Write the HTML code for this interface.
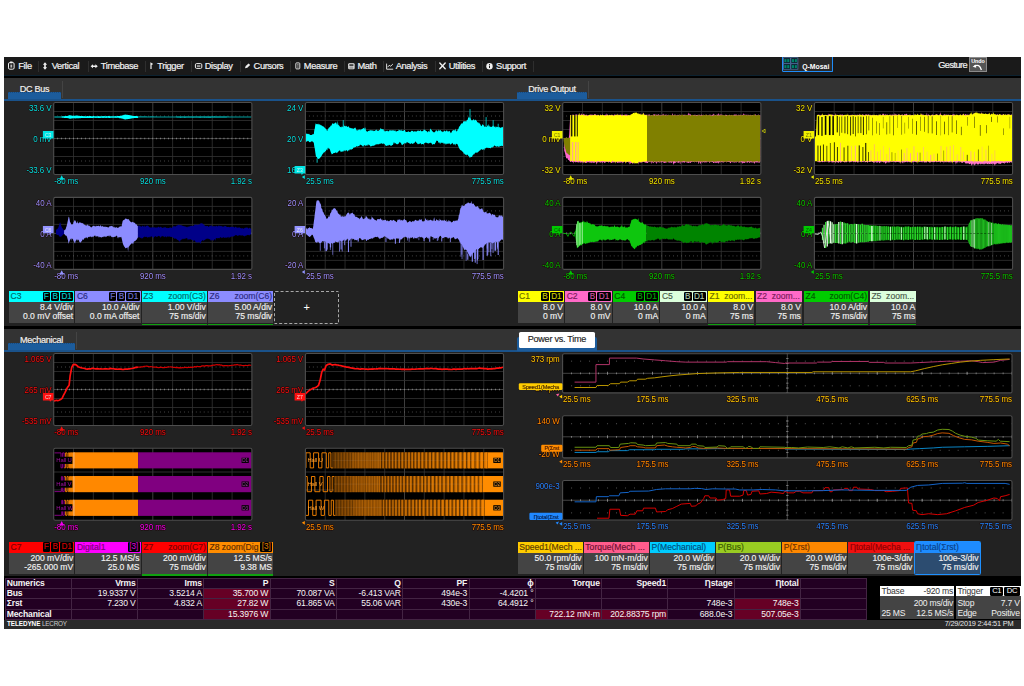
<!DOCTYPE html>
<html lang="en"><head><meta charset="utf-8"><title>Motor Drive Analyzer</title>
<style>
html,body{margin:0;padding:0;background:#fff;}
body{width:1024px;height:686px;overflow:hidden;position:relative;font-family:"Liberation Sans",sans-serif;}
#scr{position:absolute;left:4px;top:57px;width:1017px;height:571.5px;background:#222;overflow:hidden;}
#scr *{box-sizing:border-box;}
.abs{position:absolute;}
#menu{position:absolute;left:0;top:0;width:1017px;height:18px;background:#1a1a1a;}
#mline{position:absolute;left:0;top:17.6px;width:1017px;height:3.2px;background:#000;border-top:0.7px solid #0c2230;}
.mi{-webkit-text-stroke:0.2px;position:absolute;top:3.0px;height:12px;line-height:12px;font-size:9.3px;color:#f2f2f2;letter-spacing:-0.4px;white-space:nowrap;}
.ms{position:absolute;top:4px;width:1px;height:10.6px;background:#2e2e2e;}
.tabs{position:absolute;height:21.4px;background:#333;}
.tline{position:absolute;height:1.6px;background:#1a528a;}
.tab{position:absolute;height:21px;color:#f0f0f0;font-size:9.1px;letter-spacing:-0.28px;text-align:center;line-height:22.4px;white-space:nowrap;-webkit-text-stroke:0.2px;z-index:1;}
.tab .ul{position:absolute;left:0;right:0;bottom:0;height:6.9px;background:#1c5c9c;border-top:1.6px dotted #164a80;z-index:-1;}
.tsep{position:absolute;width:1px;background:#444;}
.hbar{position:absolute;left:0;width:1017px;height:3px;background:#000;}
.d{position:absolute;height:33px;font-size:8.6px;letter-spacing:-0.02px;white-space:nowrap;-webkit-text-stroke:0.15px;}
.d .h{position:absolute;left:0;top:0;right:0;height:10.8px;line-height:10.6px;padding-left:1.6px;overflow:hidden;}
.d .b{position:absolute;left:0;top:10.8px;right:0;height:21.7px;background:#444;color:#f0f0f0;text-align:right;padding-right:1.2px;line-height:9.5px;padding-top:1.0px;}
.d .z{position:absolute;left:0;right:0;top:32.5px;height:1.7px;background:#10a010;}
.d .r{position:absolute;right:1.2px;top:0;}
.bd{display:inline-block;background:#000;height:9.6px;line-height:9.6px;margin-top:0.6px;padding:0 1.3px;border-radius:1.2px;margin-left:1px;font-size:8.2px;vertical-align:top;}
table{border-collapse:collapse;position:absolute;left:0.5px;top:520.6px;table-layout:fixed;font-size:8.6px;letter-spacing:-0.15px;color:#f4f4f4;}
td{height:10.4px;width:66.3px;padding:0 1.4px 0 1.2px;border:0.9px solid #432443;background:#220022;text-align:right;line-height:9.4px;white-space:nowrap;overflow:hidden;}
td.l{text-align:left;font-weight:bold;}
tr.hd td{font-weight:bold;}
td.hl{background:#660025;}
.tb{position:absolute;font-size:8.6px;letter-spacing:-0.2px;color:#f0f0f0;white-space:nowrap;}
</style></head>
<body>
<div id="scr">
<div id="menu"></div><div id="mline"></div>
<div class="mi" style="left:14.3px">File</div><div class="ms" style="left:34px"></div>
<div class="mi" style="left:47.8px">Vertical</div><div class="ms" style="left:83.5px"></div>
<div class="mi" style="left:96.8px">Timebase</div><div class="ms" style="left:140.5px"></div>
<div class="mi" style="left:153.3px">Trigger</div><div class="ms" style="left:187px"></div>
<div class="mi" style="left:200.8px">Display</div><div class="ms" style="left:235.6px"></div>
<div class="mi" style="left:249.6px">Cursors</div><div class="ms" style="left:286.4px"></div>
<div class="mi" style="left:299.8px">Measure</div><div class="ms" style="left:340px"></div>
<div class="mi" style="left:353.5px">Math</div><div class="ms" style="left:378.5px"></div>
<div class="mi" style="left:391.8px">Analysis</div><div class="ms" style="left:431.2px"></div>
<div class="mi" style="left:444.7px">Utilities</div><div class="ms" style="left:478px"></div>
<div class="mi" style="left:492.1px">Support</div><div class="ms" style="left:528.9px"></div>
<div class="mi" style="left:934.2px;top:2.4px;letter-spacing:-0.6px">Gesture</div>
<svg class="abs" style="left:0;top:0" width="1017" height="19" viewBox="0 0 1017 19"><rect x="4.5" y="5.6" width="5.6" height="6.6" rx="1.3" fill="none" stroke="#f0f0f0" stroke-width="1"/><rect x="6" y="4.4" width="2.6" height="1.8" rx="0.4" fill="#f0f0f0"/><rect x="6.4" y="7.6" width="1.8" height="3" fill="#f0f0f0" opacity="0.75"/><path d="M41,5.2 l2.1,2.5 h-1.3 v2.6 h1.3 l-2.1,2.5 l-2.1,-2.5 h1.3 v-2.6 h-1.3z" fill="#f0f0f0"/><path d="M86.6,9.2 l2.4,-2 v1.3 h2.4 v-1.3 l2.4,2 l-2.4,2 v-1.3 h-2.4 v1.3z" fill="#f0f0f0"/><path d="M146.4,11.9 v-6.6 l2.8,1.7 l-1.6,1.1 v3.8z" fill="#f0f0f0"/><rect x="191.4" y="6.6" width="6.4" height="4.8" rx="1.2" fill="none" stroke="#f0f0f0" stroke-width="1"/><rect x="192.9" y="8.5" width="3.4" height="1.1" fill="#f0f0f0"/><path d="M241,11.2 l0.7,-2.1 l2.9,-2.7 l1.6,1.6 l-2.9,2.7z" fill="#f0f0f0"/><rect x="291.8" y="5.9" width="4" height="6" rx="0.8" fill="none" stroke="#f0f0f0" stroke-width="0.9"/><path d="M293.1,7.6h1.6M293.1,8.9h1.6M293.1,10.2h1.6" stroke="#f0f0f0" stroke-width="0.55"/><rect x="344.2" y="6.3" width="6.4" height="6" rx="1.2" fill="#f0f0f0"/><rect x="345.3" y="7.3" width="4.2" height="1.5" fill="#1a1a1a"/><path d="M345.3,10h4.2M345.3,11.2h4.2" stroke="#1a1a1a" stroke-width="0.5"/><path d="M382.6,6.6 v5.6 h6.6" fill="none" stroke="#f0f0f0" stroke-width="0.9"/><path d="M383.6,10.2 l1.6,-1.9 l1.5,0.9 l2.2,-2.2" fill="none" stroke="#f0f0f0" stroke-width="0.9"/><path d="M435.8,6 l5.4,5.8 M441.2,6 l-5.4,5.8" stroke="#f0f0f0" stroke-width="1.4" stroke-linecap="round"/><circle cx="485.5" cy="9.2" r="3.2" fill="#f0f0f0"/><rect x="485" y="8.6" width="1" height="2.4" fill="#1a1a1a"/><rect x="485" y="7.1" width="1" height="0.9" fill="#1a1a1a"/></svg>
<div class="abs" style="left:777.8px;top:0;width:51.4px;height:14.9px;background:#2a2a2a;border:1.6px solid #1e8cf8;border-top:none;border-radius:0 0 1.5px 1.5px"></div>
<svg class="abs" style="left:0;top:0" width="1017" height="19" viewBox="0 0 1017 19"><rect x="779.4" y="0.8" width="7" height="5.4" fill="#061820" stroke="#5478b0" stroke-width="0.7"/><rect x="780.3" y="2.1" width="2.2" height="3" fill="#008068"/><rect x="783.2" y="2.1" width="2.2" height="3" fill="#008068"/><rect x="786.9" y="0.8" width="7" height="5.4" fill="#061820" stroke="#5478b0" stroke-width="0.7"/><rect x="787.8" y="2.1" width="2.2" height="3" fill="#008068"/><rect x="790.7" y="2.1" width="2.2" height="3" fill="#008068"/><rect x="779.4" y="6.8" width="7" height="5.4" fill="#061820" stroke="#5478b0" stroke-width="0.7"/><rect x="780.3" y="8.1" width="2.2" height="3" fill="#008068"/><rect x="783.2" y="8.1" width="2.2" height="3" fill="#008068"/><rect x="786.9" y="6.8" width="7" height="5.4" fill="#061820" stroke="#5478b0" stroke-width="0.7"/><rect x="787.8" y="8.1" width="2.2" height="3" fill="#008068"/><rect x="790.7" y="8.1" width="2.2" height="3" fill="#008068"/></svg>
<div class="abs" style="left:798.2px;top:6.1px;font-size:6.9px;font-weight:bold;color:#fff;letter-spacing:0px;line-height:8px">Q-Mosai</div>
<div class="abs" style="left:965.2px;top:0.2px;width:17.6px;height:14.8px;background:#555;border:0.9px solid #8a8a8a"></div>
<div class="abs" style="left:965.2px;top:0.6px;width:17.6px;text-align:center;font-size:5.4px;font-weight:bold;color:#fff;line-height:6px;letter-spacing:-0.1px">Undo</div>
<svg class="abs" style="left:965px;top:6px" width="18" height="9" viewBox="0 0 18 9"><path d="M5.2,3.2 Q10.5,0.2 12.4,7" fill="none" stroke="#fff" stroke-width="1.3"/><path d="M3.6,3.8 l3.2,-2.2 l0.4,3.2z" fill="#fff"/></svg>
<div class="tabs" style="left:0;top:20.8px;width:1017px"></div>
<div class="tline" style="left:0;top:42px;width:1017px"></div>
<div class="tab" style="left:4px;top:20.8px;width:53px">DC Bus<div class="ul"></div></div>
<div class="tsep" style="left:57.6px;top:23.8px;height:17px"></div>
<div class="tab" style="left:512.8px;top:20.8px;width:70.4px">Drive Output<div class="ul"></div></div>
<div class="tsep" style="left:583.8px;top:23.8px;height:17px"></div>
<div class="hbar" style="top:269px"></div>
<div class="tabs" style="left:0;top:271.8px;width:1017px"></div>
<div class="tline" style="left:0;top:293px;width:1017px"></div>
<div class="tab" style="left:4px;top:271.8px;width:67px">Mechanical<div class="ul"></div></div>
<div class="tsep" style="left:71.6px;top:274.8px;height:17px"></div>
<div class="abs" style="left:513px;top:279.8px;width:79.8px;height:14.4px;background:#1c5c9c;border-radius:2px 2px 0 0"></div>
<div class="abs" style="left:514.8px;top:275.4px;width:76.2px;height:15.8px;background:#fff;border-radius:1.6px;color:#222;font-size:9.1px;letter-spacing:-0.28px;text-align:center;line-height:15.8px;white-space:nowrap;-webkit-text-stroke:0.15px">Power vs. Time</div>
<svg class="abs" style="left:-4px;top:-57px;filter:blur(0.3px)" width="1024" height="686" viewBox="0 0 1024 686" font-family='"Liberation Sans", sans-serif' letter-spacing="-0.1">
<rect x="53.7" y="102.5" width="198.2" height="72" fill="#000"/>
<line x1="73.52" y1="102.5" x2="73.52" y2="174.5" stroke="#323232" stroke-width="0.8"/>
<line x1="93.34" y1="102.5" x2="93.34" y2="174.5" stroke="#323232" stroke-width="0.8"/>
<line x1="113.16" y1="102.5" x2="113.16" y2="174.5" stroke="#323232" stroke-width="0.8"/>
<line x1="132.98" y1="102.5" x2="132.98" y2="174.5" stroke="#323232" stroke-width="0.8"/>
<line x1="152.8" y1="102.5" x2="152.8" y2="174.5" stroke="#4c4c4c" stroke-width="0.8"/>
<line x1="172.62" y1="102.5" x2="172.62" y2="174.5" stroke="#323232" stroke-width="0.8"/>
<line x1="192.44" y1="102.5" x2="192.44" y2="174.5" stroke="#323232" stroke-width="0.8"/>
<line x1="212.26" y1="102.5" x2="212.26" y2="174.5" stroke="#323232" stroke-width="0.8"/>
<line x1="232.08" y1="102.5" x2="232.08" y2="174.5" stroke="#323232" stroke-width="0.8"/>
<line x1="53.7" y1="111.5" x2="251.9" y2="111.5" stroke="#323232" stroke-width="0.8"/>
<line x1="53.7" y1="120.5" x2="251.9" y2="120.5" stroke="#323232" stroke-width="0.8"/>
<line x1="53.7" y1="129.5" x2="251.9" y2="129.5" stroke="#323232" stroke-width="0.8"/>
<line x1="53.7" y1="138.5" x2="251.9" y2="138.5" stroke="#4c4c4c" stroke-width="0.8"/>
<line x1="53.7" y1="147.5" x2="251.9" y2="147.5" stroke="#323232" stroke-width="0.8"/>
<line x1="53.7" y1="156.5" x2="251.9" y2="156.5" stroke="#323232" stroke-width="0.8"/>
<line x1="53.7" y1="165.5" x2="251.9" y2="165.5" stroke="#323232" stroke-width="0.8"/>
<line x1="53.7" y1="138.5" x2="251.9" y2="138.5" stroke="#8a8a8a" stroke-width="1.6" stroke-dasharray="0.9 3.06" stroke-dashoffset="0.45"/>
<line x1="53.7" y1="116" x2="251.9" y2="116" stroke="#7a7a7a" stroke-width="0.7" stroke-dasharray="0.8 3.16" stroke-dashoffset="0.4"/>
<line x1="53.7" y1="161" x2="251.9" y2="161" stroke="#7a7a7a" stroke-width="0.7" stroke-dasharray="0.8 3.16" stroke-dashoffset="0.4"/>
<g clip-path="url(#c00)">
<clipPath id="c00"><rect x="53.7" y="102.5" width="198.2" height="72"/></clipPath>
<path d="M54.2,116.36 54.8,116.32 55.4,116.29 56,116.29 56.6,116.31 57.2,116.3 57.8,116.31 58.4,116.25 59,116.27 59.6,116.24 60.2,116.23 60.8,116.22 61.4,116.21 62,116.24 62.6,116.2 63.2,116.16 63.8,116.16 64.4,116.15 65,116.1 65.6,116.07 66.2,116.11 66.8,116.05 67.4,115.92 68,115.75 68.6,115.53 69.2,115.35 69.8,115.21 70.4,115.22 71,115.5 71.6,115.52 72.2,115.68 72.8,115.75 73.4,115.75 74,115.75 74.6,115.69 75.2,115.65 75.8,115.43 76.4,115.55 77,115.57 77.6,115.64 78.2,115.65 78.8,115.69 79.4,115.82 80,115.9 80.6,115.92 81.2,115.9 81.8,116.02 82.4,116.03 83,116.09 83.6,116.14 84.2,116.11 84.8,116.16 85.4,116.14 86,116.19 86.6,116.18 87.2,116.12 87.8,116.11 88.4,116.18 89,116.12 89.6,116.1 90.2,116.11 90.8,116.1 91.4,116.19 92,116.13 92.6,116.13 93.2,116.11 93.8,116.12 94.4,116.13 95,116.16 95.6,116.17 96.2,116.17 96.8,116.18 97.4,116.13 98,116.16 98.6,116.12 99.2,116.14 99.8,116.14 100.4,116.13 101,116.15 101.6,116.14 102.2,116.11 102.8,116.15 103.4,116.12 104,116.19 104.6,116.1 105.2,116.15 105.8,116.17 106.4,116.11 107,116.18 107.6,116.14 108.2,116.12 108.8,116.11 109.4,116.11 110,116.13 110.6,116.13 111.2,116.18 111.8,116.19 112.4,116.14 113,116.16 113.6,116.13 114.2,116.17 114.8,116.19 115.4,116.12 116,116.14 116.6,116.16 117.2,116.12 117.8,116.11 118.4,116.11 119,115.97 119.6,115.94 120.2,115.79 120.8,115.81 121.4,115.64 122,115.51 122.6,115.31 123.2,115.14 123.8,114.85 124.4,114.8 125,114.65 125.6,114.57 126.2,114.8 126.8,114.72 127.4,114.85 128,115.05 128.6,115.11 129.2,115.11 129.8,115.22 130.4,115.32 131,115.59 131.6,115.6 132.2,115.75 132.8,115.94 133.4,116.01 134,116.02 134.6,115.98 135.2,116.02 135.8,116.09 136.4,116.08 137,116.05 137.6,116.16 138.2,116.17 138.3,116.19 L138.3,117.89 138.2,117.87 137.6,117.89 137,117.95 136.4,117.93 135.8,117.98 135.2,117.97 134.6,118.01 134,118.12 133.4,118.14 132.8,118.14 132.2,118.3 131.6,118.41 131,118.44 130.4,118.63 129.8,118.7 129.2,118.89 128.6,118.9 128,119.11 127.4,119.18 126.8,119.22 126.2,119.27 125.6,119.44 125,119.44 124.4,119.19 123.8,119.19 123.2,118.84 122.6,118.74 122,118.53 121.4,118.38 120.8,118.37 120.2,118.28 119.6,118.14 119,117.98 118.4,117.87 117.8,117.86 117.2,117.81 116.6,117.81 116,117.88 115.4,117.83 114.8,117.87 114.2,117.83 113.6,117.86 113,117.82 112.4,117.84 111.8,117.84 111.2,117.86 110.6,117.86 110,117.88 109.4,117.89 108.8,117.88 108.2,117.82 107.6,117.85 107,117.84 106.4,117.89 105.8,117.82 105.2,117.9 104.6,117.84 104,117.82 103.4,117.88 102.8,117.84 102.2,117.88 101.6,117.85 101,117.82 100.4,117.89 99.8,117.89 99.2,117.89 98.6,117.89 98,117.89 97.4,117.85 96.8,117.91 96.2,117.86 95.6,117.92 95,117.85 94.4,117.85 93.8,117.91 93.2,117.87 92.6,117.91 92,117.91 91.4,117.89 90.8,117.89 90.2,117.93 89.6,117.92 89,117.88 88.4,117.92 87.8,117.93 87.2,117.89 86.6,117.89 86,117.9 85.4,117.98 84.8,117.97 84.2,117.97 83.6,117.99 83,118.04 82.4,118.01 81.8,118 81.2,118.11 80.6,118.16 80,118.11 79.4,118.16 78.8,118.18 78.2,118.33 77.6,118.25 77,118.3 76.4,118.35 75.8,118.36 75.2,118.42 74.6,118.28 74,118.3 73.4,118.32 72.8,118.31 72.2,118.39 71.6,118.52 71,118.61 70.4,118.74 69.8,118.8 69.2,118.52 68.6,118.37 68,118.25 67.4,118.03 66.8,117.94 66.2,117.93 65.6,117.9 65,117.92 64.4,117.88 63.8,117.85 63.2,117.83 62.6,117.81 62,117.77 61.4,117.72 60.8,117.71 60.2,117.77 59.6,117.7 59,117.69 58.4,117.7 57.8,117.68 57.2,117.7 56.6,117.7 56,117.7 55.4,117.69 54.8,117.68 54.2,117.64Z" fill="#00ffff"/>
<rect x="53.7" y="115.8" width="8" height="2.4" fill="#000" opacity="0.45"/>
<path d="M138.3,116.3 139,116.33 139.7,116.36 140.4,116.33 141.1,116.34 141.8,116.36 142.5,116.36 143.2,116.34 143.9,116.34 144.6,116.34 145.3,116.33 146,116.37 146.7,116.35 147.4,116.38 148.1,116.38 148.8,116.34 149.5,116.38 150.2,116.34 150.9,116.35 151.6,116.34 152.3,116.35 153,116.35 153.7,116.37 154.4,116.41 155.1,116.35 155.8,116.39 156.5,116.36 157.2,116.38 157.9,116.39 158.6,116.38 159.3,116.39 160,116.4 160.7,116.41 161.4,116.38 162.1,116.41 162.8,116.39 163.5,116.41 164.2,116.42 164.9,116.37 165.6,116.43 166.3,116.41 167,116.43 167.7,116.39 168.4,116.39 169.1,116.4 169.8,116.41 170.5,116.4 171.2,116.4 171.9,116.4 172.6,116.42 173.3,116.42 174,116.43 174.7,116.45 175.4,116.41 176.1,116.36 176.8,116.35 177.5,116.35 178.2,116.28 178.9,116.26 179.6,116.22 180.3,116.21 181,116.23 181.7,116.21 182.4,116.25 183.1,116.21 183.8,116.23 184.5,116.21 185.2,116.23 185.9,116.23 186.6,116.22 187.3,116.21 188,116.23 188.7,116.23 189.4,116.22 190.1,116.23 190.8,116.2 191.5,116.19 192.2,116.24 192.9,116.21 193.6,116.22 194.3,116.19 195,116.16 195.7,116.16 196.4,116.23 197.1,116.23 197.8,116.21 198.5,116.21 199.2,116.16 199.9,116.2 200.6,116.19 201.3,116.17 202,116.14 202.7,116.21 203.4,116.13 204.1,116.22 204.8,116.19 205.5,116.13 206.2,116.13 206.9,116.19 207.6,116.13 208.3,116.18 209,116.16 209.7,116.18 210.4,116.19 211.1,116.13 211.8,116.14 212.5,116.12 213.2,116.16 213.9,116.19 214.6,116.11 215.3,116.14 216,116.17 216.7,116.17 217.4,116.22 218.1,116.2 218.8,116.18 219.5,116.24 220.2,116.26 220.9,116.26 221.6,116.3 222.3,116.28 223,116.32 223.7,116.33 224.4,116.35 225.1,116.32 225.8,116.34 226.5,116.34 227.2,116.35 227.9,116.4 228.6,116.37 229.3,116.42 230,116.46 230.7,116.42 231.4,116.41 232.1,116.43 232.8,116.44 233.5,116.42 234.2,116.44 234.9,116.46 235.6,116.42 236.3,116.45 237,116.44 237.7,116.45 238.4,116.44 239.1,116.42 239.8,116.41 240.5,116.44 241.2,116.41 241.9,116.41 242.6,116.45 243.3,116.45 244,116.41 244.7,116.41 245.4,116.41 246.1,116.41 246.8,116.41 247.5,116.44 248.2,116.42 248.9,116.46 249.6,116.45 250.3,116.46 251,116.41 251.4,116.41 L251.4,117.57 251,117.6 250.3,117.6 249.6,117.6 248.9,117.54 248.2,117.59 247.5,117.59 246.8,117.54 246.1,117.57 245.4,117.58 244.7,117.55 244,117.6 243.3,117.57 242.6,117.56 241.9,117.57 241.2,117.54 240.5,117.59 239.8,117.59 239.1,117.59 238.4,117.55 237.7,117.54 237,117.54 236.3,117.6 235.6,117.58 234.9,117.54 234.2,117.58 233.5,117.57 232.8,117.58 232.1,117.54 231.4,117.6 230.7,117.6 230,117.55 229.3,117.6 228.6,117.57 227.9,117.62 227.2,117.61 226.5,117.67 225.8,117.65 225.1,117.68 224.4,117.67 223.7,117.71 223,117.71 222.3,117.74 221.6,117.75 220.9,117.72 220.2,117.72 219.5,117.79 218.8,117.76 218.1,117.79 217.4,117.83 216.7,117.81 216,117.85 215.3,117.84 214.6,117.81 213.9,117.83 213.2,117.86 212.5,117.83 211.8,117.85 211.1,117.82 210.4,117.89 209.7,117.9 209,117.82 208.3,117.89 207.6,117.83 206.9,117.88 206.2,117.82 205.5,117.84 204.8,117.88 204.1,117.86 203.4,117.87 202.7,117.85 202,117.85 201.3,117.86 200.6,117.88 199.9,117.87 199.2,117.9 198.5,117.86 197.8,117.85 197.1,117.85 196.4,117.85 195.7,117.87 195,117.84 194.3,117.85 193.6,117.83 192.9,117.88 192.2,117.87 191.5,117.86 190.8,117.86 190.1,117.85 189.4,117.86 188.7,117.82 188,117.85 187.3,117.86 186.6,117.85 185.9,117.83 185.2,117.89 184.5,117.89 183.8,117.82 183.1,117.84 182.4,117.82 181.7,117.82 181,117.89 180.3,117.89 179.6,117.8 178.9,117.77 178.2,117.73 177.5,117.72 176.8,117.67 176.1,117.62 175.4,117.61 174.7,117.58 174,117.58 173.3,117.56 172.6,117.57 171.9,117.55 171.2,117.55 170.5,117.56 169.8,117.56 169.1,117.58 168.4,117.54 167.7,117.56 167,117.57 166.3,117.56 165.6,117.57 164.9,117.57 164.2,117.58 163.5,117.54 162.8,117.57 162.1,117.56 161.4,117.56 160.7,117.56 160,117.55 159.3,117.55 158.6,117.55 157.9,117.57 157.2,117.55 156.5,117.59 155.8,117.57 155.1,117.58 154.4,117.55 153.7,117.59 153,117.59 152.3,117.58 151.6,117.57 150.9,117.57 150.2,117.55 149.5,117.56 148.8,117.57 148.1,117.57 147.4,117.6 146.7,117.57 146,117.55 145.3,117.56 144.6,117.59 143.9,117.55 143.2,117.55 142.5,117.54 141.8,117.59 141.1,117.59 140.4,117.55 139.7,117.56 139,117.58 138.3,117.58Z" fill="#00a0a0"/>
</g>
<rect x="53.7" y="102.5" width="198.2" height="72" rx="1.5" fill="none" stroke="#4e4e4e" stroke-width="1.1"/>
<text transform="translate(51.4,110.8) scale(0.905,1)" fill="#00e0e0" font-size="8.8" text-anchor="end" font-weight="normal"  stroke="#1c0606" stroke-width="1.1" paint-order="stroke" stroke-linejoin="round">33.6 V</text>
<text transform="translate(51.4,142.2) scale(0.905,1)" fill="#00e0e0" font-size="8.8" text-anchor="end" font-weight="normal"  stroke="#1c0606" stroke-width="1.1" paint-order="stroke" stroke-linejoin="round">0 mV</text>
<text transform="translate(51.4,172.9) scale(0.905,1)" fill="#00e0e0" font-size="8.8" text-anchor="end" font-weight="normal"  stroke="#1c0606" stroke-width="1.1" paint-order="stroke" stroke-linejoin="round">-33.6 V</text>
<text transform="translate(54.3,184.1) scale(0.905,1)" fill="#00e0e0" font-size="8.8" text-anchor="start" font-weight="normal"  stroke="#1c0606" stroke-width="1.1" paint-order="stroke" stroke-linejoin="round">-80 ms</text>
<text transform="translate(152.8,184.1) scale(0.905,1)" fill="#00e0e0" font-size="8.8" text-anchor="middle" font-weight="normal"  stroke="#1c0606" stroke-width="1.1" paint-order="stroke" stroke-linejoin="round">920 ms</text>
<text transform="translate(251.9,184.1) scale(0.905,1)" fill="#00e0e0" font-size="8.8" text-anchor="end" font-weight="normal"  stroke="#1c0606" stroke-width="1.1" paint-order="stroke" stroke-linejoin="round">1.92 s</text>
<path d="M61.7,175.3 l2.2,4.4 h-4.4z" fill="#00e0e0"/>
<path d="M42.9,131 h10.6 v7.4 l-2.2,0 l-1.2,1.4 l-0.6,-1.4 h-6.6z" fill="#00e5e5"/>
<text x="48.1" y="136.8" fill="#f4f4f4" font-size="5.2" text-anchor="middle" font-weight="normal" opacity="0.85">C3</text>
<rect x="305.4" y="102.5" width="198.2" height="72" fill="#000"/>
<line x1="325.22" y1="102.5" x2="325.22" y2="174.5" stroke="#323232" stroke-width="0.8"/>
<line x1="345.04" y1="102.5" x2="345.04" y2="174.5" stroke="#323232" stroke-width="0.8"/>
<line x1="364.86" y1="102.5" x2="364.86" y2="174.5" stroke="#323232" stroke-width="0.8"/>
<line x1="384.68" y1="102.5" x2="384.68" y2="174.5" stroke="#323232" stroke-width="0.8"/>
<line x1="404.5" y1="102.5" x2="404.5" y2="174.5" stroke="#4c4c4c" stroke-width="0.8"/>
<line x1="424.32" y1="102.5" x2="424.32" y2="174.5" stroke="#323232" stroke-width="0.8"/>
<line x1="444.14" y1="102.5" x2="444.14" y2="174.5" stroke="#323232" stroke-width="0.8"/>
<line x1="463.96" y1="102.5" x2="463.96" y2="174.5" stroke="#323232" stroke-width="0.8"/>
<line x1="483.78" y1="102.5" x2="483.78" y2="174.5" stroke="#323232" stroke-width="0.8"/>
<line x1="305.4" y1="111.5" x2="503.6" y2="111.5" stroke="#323232" stroke-width="0.8"/>
<line x1="305.4" y1="120.5" x2="503.6" y2="120.5" stroke="#323232" stroke-width="0.8"/>
<line x1="305.4" y1="129.5" x2="503.6" y2="129.5" stroke="#323232" stroke-width="0.8"/>
<line x1="305.4" y1="138.5" x2="503.6" y2="138.5" stroke="#4c4c4c" stroke-width="0.8"/>
<line x1="305.4" y1="147.5" x2="503.6" y2="147.5" stroke="#323232" stroke-width="0.8"/>
<line x1="305.4" y1="156.5" x2="503.6" y2="156.5" stroke="#323232" stroke-width="0.8"/>
<line x1="305.4" y1="165.5" x2="503.6" y2="165.5" stroke="#323232" stroke-width="0.8"/>
<line x1="305.4" y1="138.5" x2="503.6" y2="138.5" stroke="#8a8a8a" stroke-width="1.6" stroke-dasharray="0.9 3.06" stroke-dashoffset="0.45"/>
<line x1="305.4" y1="116" x2="503.6" y2="116" stroke="#7a7a7a" stroke-width="0.7" stroke-dasharray="0.8 3.16" stroke-dashoffset="0.4"/>
<line x1="305.4" y1="161" x2="503.6" y2="161" stroke="#7a7a7a" stroke-width="0.7" stroke-dasharray="0.8 3.16" stroke-dashoffset="0.4"/>
<g clip-path="url(#c10)">
<clipPath id="c10"><rect x="305.4" y="102.5" width="198.2" height="72"/></clipPath>
<path d="M305.8,134.29 306.3,133.51 306.8,133.71 307.3,133.77 307.8,134.05 308.3,133.72 308.8,134.37 309.3,133.87 309.8,135.05 310.3,134.9 310.8,134.97 311.3,134.98 311.8,134.88 312.3,134.09 312.8,134.79 313.3,134.1 313.8,134.24 314.3,130.12 314.8,128.41 315.3,124.71 315.8,123.16 316.3,123.91 316.8,124.34 317.3,123.63 317.8,124.48 318.3,123.61 318.8,124.79 319.3,124.49 319.8,124.27 320.3,124.83 320.8,125.24 321.3,125.42 321.8,125.13 322.3,126.5 322.8,125.65 323.3,126.28 323.8,127.11 324.3,127.71 324.8,127.2 325.3,128.51 325.8,128.67 326.3,129.29 326.8,130.45 327.3,130.95 327.8,129.3 328.3,128.68 328.8,127.76 329.3,127.42 329.8,126.94 330.3,126.52 330.8,125.51 331.3,125.8 331.8,124.83 332.3,123.01 332.8,123.71 333.3,123.87 333.8,123.78 334.3,123.24 334.8,123.5 335.3,122.55 335.8,122.51 336.3,122.81 336.8,124.57 337.3,124.46 337.8,120.55 338.3,125.02 338.8,125.33 339.3,125.8 339.8,126.39 340.3,127.33 340.8,126.77 341.3,127.4 341.8,126.33 342.3,126.38 342.8,127.11 343.3,127.07 343.8,123.82 344.3,125.93 344.8,126.06 345.3,126.38 345.8,126.04 346.3,125.81 346.8,126.43 347.3,126.67 347.8,126.99 348.3,126.5 348.8,126.2 349.3,127.6 349.8,128.04 350.3,127.71 350.8,128.24 351.3,128.55 351.8,128.05 352.3,128 352.8,128.92 353.3,128.72 353.8,128.56 354.3,128.29 354.8,127.63 355.3,127.56 355.8,128.5 356.3,129.74 356.8,130.57 357.3,130.71 357.8,129.69 358.3,129.42 358.8,130.26 359.3,129.71 359.8,129.35 360.3,129.26 360.8,130.43 361.3,129.33 361.8,129.2 362.3,129.07 362.8,128.46 363.3,128.36 363.8,127.97 364.3,127.57 364.8,129.8 365.3,126.92 365.8,129.93 366.3,131.05 366.8,131.58 367.3,131.49 367.8,131.81 368.3,130.82 368.8,131.12 369.3,130.38 369.8,130.66 370.3,129.78 370.8,130.73 371.3,130.08 371.8,130.67 372.3,130.58 372.8,130.54 373.3,130.43 373.8,131.37 374.3,130.96 374.8,130.79 375.3,130.4 375.8,129.96 376.3,129.57 376.8,130.22 377.3,131.09 377.8,130.54 378.3,130.58 378.8,131.02 379.3,130.07 379.8,130.09 380.3,129.08 380.8,127.69 381.3,128.99 381.8,129.13 382.3,129.09 382.8,129.49 383.3,128.72 383.8,130.39 384.3,130.43 384.8,131.49 385.3,131.58 385.8,130.75 386.3,131.02 386.8,130.73 387.3,130.42 387.8,131.29 388.3,131.48 388.8,130.97 389.3,130.44 389.8,130.13 390.3,130.18 390.8,130.4 391.3,130.52 391.8,130.38 392.3,129.92 392.8,130.64 393.3,129.9 393.8,130.83 394.3,131.12 394.8,130.34 395.3,130.36 395.8,131.47 396.3,131.56 396.8,131.18 397.3,130.92 397.8,130.95 398.3,131.12 398.8,129.42 399.3,130 399.8,130.31 400.3,130.81 400.8,130.08 401.3,129.46 401.8,131.12 402.3,130.89 402.8,130.56 403.3,130.92 403.8,130.37 404.3,130.12 404.8,130.03 405.3,131.04 405.8,132.31 406.3,131.94 406.8,131.93 407.3,131.65 407.8,131.88 408.3,131.12 408.8,131.77 409.3,131.93 409.8,131.93 410.3,131.59 410.8,132.29 411.3,130.49 411.8,131.1 412.3,130.91 412.8,130.79 413.3,131.32 413.8,132.36 414.3,130.99 414.8,131.44 415.3,131.65 415.8,131.11 416.3,131.98 416.8,131.1 417.3,130.8 417.8,130.64 418.3,130.96 418.8,130.15 419.3,130.89 419.8,131.11 420.3,129.85 420.8,130.79 421.3,130.93 421.8,131.39 422.3,131.01 422.8,131.32 423.3,130.82 423.8,129.54 424.3,129.83 424.8,129.77 425.3,130.27 425.8,130.65 426.3,131.17 426.8,131.08 427.3,131.76 427.8,132.62 428.3,131.03 428.8,131.33 429.3,132.32 429.8,130.28 430.3,129.31 430.8,128.53 431.3,129.91 431.8,130.33 432.3,131.54 432.8,131.13 433.3,132.35 433.8,132.23 434.3,132.35 434.8,132.24 435.3,131.43 435.8,130.55 436.3,130.47 436.8,130.28 437.3,131.02 437.8,131.81 438.3,129.17 438.8,131.05 439.3,131.08 439.8,129.9 440.3,130.11 440.8,130.55 441.3,131.47 441.8,131.33 442.3,131.6 442.8,132.29 443.3,131.67 443.8,131.36 444.3,130.64 444.8,130.73 445.3,131.5 445.8,131.36 446.3,130.27 446.8,130.78 447.3,131.73 447.8,130.6 448.3,131.32 448.8,131.69 449.3,130.87 449.8,131.26 450.3,132.23 450.8,133.2 451.3,132.81 451.8,131.84 452.3,130.49 452.8,130.76 453.3,130.09 453.8,130.3 454.3,130.22 454.8,130.58 455.3,128.55 455.8,130.53 456.3,130.73 456.8,131.66 457.3,130.75 457.8,129.04 458.3,129.31 458.8,127.55 459.3,126.44 459.8,126.08 460.3,125.24 460.8,124.27 461.3,123.91 461.8,123.08 462.3,123.56 462.8,123.21 463.3,121.08 463.8,121.81 464.3,121.35 464.8,121.26 465.3,121.25 465.8,121.27 466.3,121.61 466.8,120.03 467.3,120.06 467.8,119.61 468.3,116.33 468.8,117.92 469.3,118.31 469.8,116.8 470.3,118.03 470.8,118.95 471.3,119.94 471.8,120.46 472.3,120.14 472.8,120.25 473.3,119.04 473.8,119.85 474.3,119.71 474.8,120.64 475.3,119.53 475.8,120.03 476.3,120.44 476.8,121.03 477.3,122.19 477.8,122.28 478.3,123.53 478.8,122.12 479.3,123.08 479.8,123.71 480.3,124.19 480.8,125.57 481.3,126.22 481.8,125.72 482.3,124.46 482.8,124.34 483.3,125.69 483.8,124.81 484.3,126.59 484.8,127.02 485.3,126.42 485.8,126.37 486.3,127.31 486.8,126.25 487.3,125.04 487.8,126.49 488.3,123.72 488.8,126.45 489.3,126.82 489.8,125.21 490.3,126.92 490.8,126.75 491.3,127.1 491.8,126.74 492.3,126.4 492.8,125.75 493.3,125.39 493.8,126.18 494.3,126.82 494.8,126.82 495.3,126.17 495.8,127.7 496.3,127.05 496.8,126.6 497.3,126.91 497.8,127.02 498.3,126.69 498.8,127.26 499.3,126.93 499.8,127.42 500.3,128.04 500.8,127.46 501.3,127.13 501.8,127.43 502.3,126.79 502.8,127.36 503.2,128.17 L503.2,145.41 502.8,145.94 502.3,146.32 501.8,145.44 501.3,146.16 500.8,146.22 500.3,146.08 499.8,145.75 499.3,147 498.8,146.75 498.3,146.65 497.8,145.94 497.3,146.43 496.8,146.75 496.3,146.46 495.8,146.17 495.3,146.15 494.8,145.49 494.3,145.38 493.8,146.58 493.3,146.84 492.8,146.85 492.3,147.77 491.8,147.27 491.3,147.53 490.8,148.24 490.3,148.26 489.8,148.03 489.3,148.1 488.8,148.25 488.3,147.74 487.8,147.53 487.3,148.07 486.8,148.03 486.3,147.24 485.8,148.63 485.3,148.02 484.8,148.14 484.3,150.41 483.8,148.8 483.3,149.79 482.8,149.85 482.3,149.71 481.8,149.25 481.3,149.17 480.8,149.4 480.3,150.27 479.8,150.85 479.3,150.57 478.8,151.83 478.3,151.48 477.8,152.28 477.3,152.67 476.8,152.23 476.3,152.93 475.8,152.79 475.3,152.54 474.8,153.15 474.3,154.42 473.8,153.81 473.3,155.08 472.8,154.96 472.3,156.36 471.8,156.9 471.3,157.05 470.8,156.83 470.3,157.48 469.8,157.8 469.3,156.88 468.8,155.84 468.3,156.17 467.8,154.47 467.3,154.67 466.8,155.86 466.3,154.39 465.8,154.96 465.3,154.59 464.8,154.17 464.3,153.48 463.8,153.69 463.3,152.45 462.8,151.52 462.3,151.64 461.8,151.09 461.3,150.57 460.8,149.87 460.3,150.58 459.8,149.13 459.3,148.42 458.8,147.47 458.3,146.16 457.8,145.08 457.3,144.1 456.8,144.07 456.3,143.82 455.8,143.83 455.3,145.76 454.8,144.78 454.3,143.84 453.8,144.61 453.3,144.46 452.8,143.45 452.3,142.85 451.8,143.51 451.3,144.03 450.8,144.23 450.3,144.64 449.8,143.47 449.3,143.59 448.8,143.73 448.3,143.51 447.8,143.74 447.3,143.74 446.8,143.61 446.3,144.24 445.8,144.85 445.3,143.43 444.8,143.23 444.3,143.74 443.8,143.95 443.3,142.71 442.8,142.43 442.3,143.32 441.8,142.67 441.3,142.82 440.8,142.6 440.3,144.07 439.8,143.49 439.3,142.35 438.8,142.82 438.3,142.55 437.8,140.76 437.3,140.91 436.8,140.51 436.3,141.04 435.8,142.45 435.3,142.76 434.8,144.31 434.3,144.15 433.8,144.29 433.3,143.99 432.8,144.01 432.3,145.28 431.8,143.75 431.3,142.95 430.8,142.48 430.3,142.96 429.8,143.37 429.3,142.68 428.8,143.73 428.3,143.28 427.8,143.34 427.3,143.31 426.8,142.59 426.3,143.09 425.8,142.74 425.3,142.59 424.8,142.97 424.3,142.93 423.8,143.99 423.3,144.72 422.8,144.11 422.3,143.98 421.8,143.96 421.3,144.69 420.8,143.61 420.3,143.12 419.8,143.87 419.3,143.78 418.8,143.79 418.3,144.16 417.8,144.22 417.3,143.58 416.8,142.98 416.3,142.52 415.8,142.03 415.3,141.35 414.8,142.52 414.3,143 413.8,143.39 413.3,143.27 412.8,143.89 412.3,143.8 411.8,143.51 411.3,142.98 410.8,143.94 410.3,143.69 409.8,143.46 409.3,143.4 408.8,142.84 408.3,142.94 407.8,142.6 407.3,142.37 406.8,141.95 406.3,143.16 405.8,143.63 405.3,143.12 404.8,142.76 404.3,143.6 403.8,143.82 403.3,144.17 402.8,144.42 402.3,145.2 401.8,145.1 401.3,143.85 400.8,143.01 400.3,142.58 399.8,141.87 399.3,142.47 398.8,143.78 398.3,143.59 397.8,144.15 397.3,144.35 396.8,144.23 396.3,144.05 395.8,143.47 395.3,143.1 394.8,143.68 394.3,142.62 393.8,142.27 393.3,144.09 392.8,144.92 392.3,144.91 391.8,145.46 391.3,145.67 390.8,145.68 390.3,145.62 389.8,145.1 389.3,144.65 388.8,145.99 388.3,144.7 387.8,145.44 387.3,145.46 386.8,145.91 386.3,145.86 385.8,145.66 385.3,145.2 384.8,144.34 384.3,143.84 383.8,144.13 383.3,143.11 382.8,144.32 382.3,143.51 381.8,143.82 381.3,142.99 380.8,143.41 380.3,143.76 379.8,144.15 379.3,143.42 378.8,144.84 378.3,144.12 377.8,144.04 377.3,144.46 376.8,144.6 376.3,144.22 375.8,144.28 375.3,145.04 374.8,145.45 374.3,145.17 373.8,145.48 373.3,145.96 372.8,145.43 372.3,146.09 371.8,145.94 371.3,146.14 370.8,146.77 370.3,146.09 369.8,145.62 369.3,144.77 368.8,145.42 368.3,144.25 367.8,144.62 367.3,146.04 366.8,145.04 366.3,145.66 365.8,145.8 365.3,145.81 364.8,145.05 364.3,145.31 363.8,145.45 363.3,146.75 362.8,146.49 362.3,145.67 361.8,145.44 361.3,145.05 360.8,144.63 360.3,144.7 359.8,144.78 359.3,146.14 358.8,145.94 358.3,146.32 357.8,145.96 357.3,147.04 356.8,146.14 356.3,146.17 355.8,147.1 355.3,147.09 354.8,147.59 354.3,147.32 353.8,147.49 353.3,147.82 352.8,149.35 352.3,148.68 351.8,149.26 351.3,149.81 350.8,149.42 350.3,149.44 349.8,149.2 349.3,150.62 348.8,150.13 348.3,150.48 347.8,150.8 347.3,151.75 346.8,150.18 346.3,150.23 345.8,150.29 345.3,151.18 344.8,150.66 344.3,150.53 343.8,150.56 343.3,151.7 342.8,151.42 342.3,151.45 341.8,151.5 341.3,151.71 340.8,152.15 340.3,150.81 339.8,150.46 339.3,150.48 338.8,151.15 338.3,151.43 337.8,151.92 337.3,152.82 336.8,153.28 336.3,152.43 335.8,152.9 335.3,152.1 334.8,152.9 334.3,152.91 333.8,153.34 333.3,153.03 332.8,154.01 332.3,153.97 331.8,154.38 331.3,153.23 330.8,152.32 330.3,150.72 329.8,149.21 329.3,148.41 328.8,148.93 328.3,147.79 327.8,147.82 327.3,150.45 326.8,149.3 326.3,150.05 325.8,151.3 325.3,151.11 324.8,152.85 324.3,151.76 323.8,152.6 323.3,153.32 322.8,153.85 322.3,154.51 321.8,155.57 321.3,156.27 320.8,157.26 320.3,157.32 319.8,158.36 319.3,158.45 318.8,158.96 318.3,158.75 317.8,159.02 317.3,158.04 316.8,157.08 316.3,156.91 315.8,155.77 315.3,152.46 314.8,148.79 314.3,146.56 313.8,142.82 313.3,142.33 312.8,141.7 312.3,141.34 311.8,141.67 311.3,140.99 310.8,141.81 310.3,142.31 309.8,141.88 309.3,142.13 308.8,141.47 308.3,140.74 307.8,141.48 307.3,140.78 306.8,141.59 306.3,141.76 305.8,141.9Z" fill="#00ffff"/>
<line x1="343.26" y1="120.12" x2="343.26" y2="128.17" stroke="#00dede" stroke-width="0.8"/>
<line x1="470.02" y1="109.05" x2="470.02" y2="120.12" stroke="#00dede" stroke-width="0.8"/>
<line x1="486.12" y1="117.1" x2="486.12" y2="126.16" stroke="#00dede" stroke-width="0.8"/>
<line x1="493.16" y1="120.12" x2="493.16" y2="127.16" stroke="#00dede" stroke-width="0.8"/>
<line x1="498.19" y1="123.74" x2="498.19" y2="128.17" stroke="#00dede" stroke-width="0.8"/>
<line x1="317.1" y1="158.35" x2="317.1" y2="162.78" stroke="#00dede" stroke-width="0.8"/>
</g>
<rect x="305.4" y="102.5" width="198.2" height="72" rx="1.5" fill="none" stroke="#4e4e4e" stroke-width="1.1"/>
<text transform="translate(303.1,110.8) scale(0.905,1)" fill="#00e0e0" font-size="8.8" text-anchor="end" font-weight="normal"  stroke="#1c0606" stroke-width="1.1" paint-order="stroke" stroke-linejoin="round">24 V</text>
<text transform="translate(303.1,142.2) scale(0.905,1)" fill="#00e0e0" font-size="8.8" text-anchor="end" font-weight="normal"  stroke="#1c0606" stroke-width="1.1" paint-order="stroke" stroke-linejoin="round">20 V</text>
<text transform="translate(303.1,172.9) scale(0.905,1)" fill="#00e0e0" font-size="8.8" text-anchor="end" font-weight="normal"  stroke="#1c0606" stroke-width="1.1" paint-order="stroke" stroke-linejoin="round">16 V</text>
<text transform="translate(306,184.1) scale(0.905,1)" fill="#00e0e0" font-size="8.8" text-anchor="start" font-weight="normal"  stroke="#1c0606" stroke-width="1.1" paint-order="stroke" stroke-linejoin="round">25.5 ms</text>
<text transform="translate(503.6,184.1) scale(0.905,1)" fill="#00e0e0" font-size="8.8" text-anchor="end" font-weight="normal"  stroke="#1c0606" stroke-width="1.1" paint-order="stroke" stroke-linejoin="round">775.5 ms</text>
<path d="M301.8,177.1 l3,-1.9 v3.8z" fill="#00e0e0"/>
<path d="M294.6,166.1 h10.6 v7.4 l-2.2,0 l-1.2,1.4 l-0.6,-1.4 h-6.6z" fill="#00e5e5"/>
<text x="299.8" y="171.9" fill="#f4f4f4" font-size="5.2" text-anchor="middle" font-weight="normal" opacity="0.85">Z3</text>
<rect x="53.7" y="197.4" width="198.2" height="72" fill="#000"/>
<line x1="73.52" y1="197.4" x2="73.52" y2="269.4" stroke="#323232" stroke-width="0.8"/>
<line x1="93.34" y1="197.4" x2="93.34" y2="269.4" stroke="#323232" stroke-width="0.8"/>
<line x1="113.16" y1="197.4" x2="113.16" y2="269.4" stroke="#323232" stroke-width="0.8"/>
<line x1="132.98" y1="197.4" x2="132.98" y2="269.4" stroke="#323232" stroke-width="0.8"/>
<line x1="152.8" y1="197.4" x2="152.8" y2="269.4" stroke="#4c4c4c" stroke-width="0.8"/>
<line x1="172.62" y1="197.4" x2="172.62" y2="269.4" stroke="#323232" stroke-width="0.8"/>
<line x1="192.44" y1="197.4" x2="192.44" y2="269.4" stroke="#323232" stroke-width="0.8"/>
<line x1="212.26" y1="197.4" x2="212.26" y2="269.4" stroke="#323232" stroke-width="0.8"/>
<line x1="232.08" y1="197.4" x2="232.08" y2="269.4" stroke="#323232" stroke-width="0.8"/>
<line x1="53.7" y1="206.4" x2="251.9" y2="206.4" stroke="#323232" stroke-width="0.8"/>
<line x1="53.7" y1="215.4" x2="251.9" y2="215.4" stroke="#323232" stroke-width="0.8"/>
<line x1="53.7" y1="224.4" x2="251.9" y2="224.4" stroke="#323232" stroke-width="0.8"/>
<line x1="53.7" y1="233.4" x2="251.9" y2="233.4" stroke="#4c4c4c" stroke-width="0.8"/>
<line x1="53.7" y1="242.4" x2="251.9" y2="242.4" stroke="#323232" stroke-width="0.8"/>
<line x1="53.7" y1="251.4" x2="251.9" y2="251.4" stroke="#323232" stroke-width="0.8"/>
<line x1="53.7" y1="260.4" x2="251.9" y2="260.4" stroke="#323232" stroke-width="0.8"/>
<line x1="53.7" y1="233.4" x2="251.9" y2="233.4" stroke="#8a8a8a" stroke-width="1.6" stroke-dasharray="0.9 3.06" stroke-dashoffset="0.45"/>
<line x1="53.7" y1="210.9" x2="251.9" y2="210.9" stroke="#7a7a7a" stroke-width="0.7" stroke-dasharray="0.8 3.16" stroke-dashoffset="0.4"/>
<line x1="53.7" y1="255.9" x2="251.9" y2="255.9" stroke="#7a7a7a" stroke-width="0.7" stroke-dasharray="0.8 3.16" stroke-dashoffset="0.4"/>
<g clip-path="url(#c01)">
<clipPath id="c01"><rect x="53.7" y="197.4" width="198.2" height="72"/></clipPath>
<path d="M56.04,229.83 56.54,229.52 57.04,228.92 57.54,228.75 58.04,228.17 58.54,226.97 59.04,225.3 59.54,223.59 60.04,222.22 60.54,223.34 61.04,225.45 61.54,226.56 62.04,228 62.54,228.34 63.04,229.33 63.54,229.69 64.04,230.44 64.08,230.59 L64.08,233.69 64.04,234.02 63.54,233.96 63.04,235.01 62.54,235.33 62.04,235.51 61.54,236.39 61.04,236.6 60.54,236.5 60.04,237.2 59.54,236.52 59.04,235.76 58.54,235.2 58.04,234.79 57.54,235.11 57.04,234.36 56.54,234.65 56.04,234.12Z" fill="#000088"/>
<path d="M64.08,230.31 64.58,230.24 65.08,229.6 65.58,229.45 66.08,227.57 66.58,226.15 67.08,224.27 67.58,221.81 68.08,219.49 68.58,216.65 69.08,217.02 69.58,219.26 70.08,222.28 70.58,222.56 71.08,224.01 71.58,224.55 72.08,224.5 72.58,224.16 73.08,223.88 73.58,222.11 74.08,221.62 74.58,220.21 75.08,220.3 75.58,221.11 76.08,222.06 76.58,223.23 77.08,223.11 77.58,220.84 78.08,223.49 78.58,223.14 79.08,222.47 79.58,222.5 80.08,222.37 80.58,222.8 81.08,222.83 81.58,223.03 82.08,223.52 82.58,222.95 83.08,223.14 83.58,223.99 84.08,224.67 84.58,224.55 85.08,225.21 85.58,225.33 86.08,225.16 86.58,225.39 87.08,225.53 87.58,223.98 88.08,225.66 88.58,225.45 89.08,225.39 89.58,225.88 90.08,226.6 90.58,226.87 91.08,227.45 91.58,227.26 92.08,226.8 92.58,226.17 93.08,226.07 93.58,225.94 94.08,225.72 94.58,226 95.08,226.74 95.58,226.33 96.08,225.47 96.58,226.24 97.08,226.03 97.58,226.04 98.08,225.76 98.58,225.67 99.08,225.99 99.58,226.62 100.08,225.75 100.58,225.19 101.08,225.79 101.58,226.64 102.08,226.23 102.58,225.84 103.08,226.91 103.58,226.18 104.08,227.21 104.58,226.27 105.08,227.27 105.58,226.39 106.08,226.78 106.58,227.12 107.08,227.06 107.58,227.14 108.08,227.41 108.58,227.47 109.08,226.83 109.58,226.37 110.08,226.46 110.58,225.94 111.08,225.69 111.58,226.07 112.08,226.15 112.58,226.36 113.08,226.7 113.58,227 114.08,227.97 114.58,226.72 115.08,227.02 115.58,227.91 116.08,227.26 116.58,227.33 117.08,227.55 117.58,228.03 118.08,227.74 118.58,227.42 119.08,227.16 119.58,226.51 120.08,226.65 120.58,226.34 121.08,226.35 121.58,226.48 122.08,223.83 122.58,221.21 123.08,220.23 123.58,220.14 124.08,219.65 124.58,219.8 125.08,218.82 125.58,218.51 126.08,218.74 126.58,218.75 127.08,219.28 127.58,219.26 128.08,218.91 128.58,219.19 129.08,219.85 129.58,220.72 130.08,221.13 130.58,221.76 131.08,222.29 131.58,222.28 132.08,222.18 132.58,221.68 133.08,221.89 133.58,222.53 134.08,222.79 134.58,222.78 135.08,223.1 135.58,224.33 136.08,224.28 136.58,224.32 137.08,225.39 137.58,226.02 137.93,225.45 L137.93,237.29 137.58,238.12 137.08,238.64 136.58,239.82 136.08,239.99 135.58,241.12 135.08,240.53 134.58,241.42 134.08,241.29 133.58,242.5 133.08,244.16 132.58,243.31 132.08,243.43 131.58,243.26 131.08,244.12 130.58,244.57 130.08,244.88 129.58,245.74 129.08,246.61 128.58,247.09 128.08,251.72 127.58,247.17 127.08,247.86 126.58,247.95 126.08,247.82 125.58,248.61 125.08,247.85 124.58,246.83 124.08,246.59 123.58,245.22 123.08,244.27 122.58,242.47 122.08,240.3 121.58,237.89 121.08,236.78 120.58,237.13 120.08,237.3 119.58,237.34 119.08,237.2 118.58,237.02 118.08,238.55 117.58,237.77 117.08,236.02 116.58,235.41 116.08,236.13 115.58,236.45 115.08,236.63 114.58,236.71 114.08,237.04 113.58,236.96 113.08,237.35 112.58,237.33 112.08,236.78 111.58,237.27 111.08,236.3 110.58,236.31 110.08,235.23 109.58,235.66 109.08,236.94 108.58,235.74 108.08,235.8 107.58,236.35 107.08,235.81 106.58,236.95 106.08,236.45 105.58,236.41 105.08,237.24 104.58,236.68 104.08,236.03 103.58,236.8 103.08,237.25 102.58,236.78 102.08,237.17 101.58,237.75 101.08,236.98 100.58,237.05 100.08,237.51 99.58,236.5 99.08,237.39 98.58,237.23 98.08,236.03 97.58,236.43 97.08,236.19 96.58,236.22 96.08,236.8 95.58,236.4 95.08,235.27 94.58,235.86 94.08,236 93.58,236.64 93.08,236.69 92.58,236.6 92.08,237.19 91.58,237.23 91.08,236.43 90.58,236.8 90.08,236.62 89.58,236.78 89.08,237.26 88.58,236.87 88.08,237.31 87.58,238.74 87.08,237.33 86.58,237.56 86.08,237.63 85.58,237.38 85.08,238.39 84.58,237.79 84.08,238.9 83.58,240.16 83.08,239.11 82.58,239.43 82.08,240.41 81.58,241.58 81.08,241.47 80.58,242.44 80.08,242.78 79.58,241.9 79.08,241.24 78.58,239.67 78.08,239.84 77.58,239.51 77.08,241.32 76.58,238.93 76.08,240.44 75.58,241.06 75.08,243.58 74.58,243.02 74.08,241.55 73.58,241.06 73.08,239.49 72.58,238.9 72.08,238.58 71.58,238.48 71.08,241.12 70.58,238.48 70.08,239.41 69.58,241.32 69.08,242.09 68.58,244.01 68.08,240.82 67.58,238.9 67.08,237.18 66.58,235.71 66.08,235.7 65.58,235.52 65.08,234.96 64.58,234.37 64.08,233.88Z" fill="#8c8cff"/>
<path d="M137.93,225.77 138.43,225.69 138.93,225.41 139.43,225.43 139.93,226.36 140.43,226.09 140.93,226.77 141.43,227.09 141.93,225.83 142.43,225.84 142.93,225.93 143.43,226.36 143.93,226.95 144.43,224.93 144.93,226.94 145.43,226.46 145.93,226.37 146.43,225.68 146.93,225.47 147.43,225.47 147.93,226.02 148.43,226.25 148.93,226.61 149.43,227.39 149.93,227 150.43,227.92 150.93,227.09 151.43,227.49 151.93,227.72 152.43,227.34 152.93,227.09 153.43,227.14 153.93,227.92 154.43,227 154.93,227.6 155.43,227.3 155.93,227.88 156.43,227.53 156.93,227.14 157.43,227.82 157.93,227.06 158.43,226.99 158.93,226.6 159.43,227.79 159.93,227.25 160.43,226.61 160.93,227.16 161.43,227.3 161.93,227.45 162.43,228.08 162.93,227.72 163.43,227.59 163.93,227.41 164.43,227.5 164.93,227.05 165.43,227.55 165.93,227.13 166.43,227.98 166.93,227.97 167.43,227.64 167.93,228.13 168.43,227.97 168.93,227.9 169.43,228 169.93,227.08 170.43,227.15 170.93,228.03 171.43,227.88 171.93,227.25 172.43,227.83 172.93,226.47 173.43,226.61 173.93,225.83 174.43,226.41 174.93,226.2 175.43,226.41 175.93,226.15 176.43,225.59 176.93,225.53 177.43,225.43 177.93,224.87 178.43,224.77 178.93,224.73 179.43,225.12 179.93,225.22 180.43,225.15 180.93,225.02 181.43,225.57 181.93,225.15 182.43,225.93 182.93,225.73 183.43,226.37 183.93,226.12 184.43,226.29 184.93,226.5 185.43,226.18 185.93,227 186.43,226.87 186.93,227.16 187.43,227.3 187.93,226.28 188.43,227 188.93,226.26 189.43,226.79 189.93,225.95 190.43,226.23 190.93,225.48 191.43,225.72 191.93,226.07 192.43,226.12 192.93,225.74 193.43,225.94 193.93,225.08 194.43,225.18 194.93,224.35 195.43,224.41 195.93,224.94 196.43,224.53 196.93,224.8 197.43,224.83 197.93,224.94 198.43,224.25 198.93,224.7 199.43,224.25 199.93,224.23 200.43,223.48 200.93,223.09 201.43,223.3 201.93,223.44 202.43,223.53 202.93,223.84 203.43,224.22 203.93,224.66 204.43,224.75 204.93,226.16 205.43,226.12 205.93,225.73 206.43,226.31 206.93,225.91 207.43,226.08 207.93,226.09 208.43,226.94 208.93,226.52 209.43,226.21 209.93,225.58 210.43,225.99 210.93,225.61 211.43,225 211.93,226.43 212.43,226.56 212.93,226.16 213.43,226.29 213.93,225.69 214.43,226.21 214.93,226.33 215.43,226.5 215.93,225.64 216.43,225.86 216.93,226.02 217.43,226.57 217.93,226.25 218.43,225.94 218.93,225.02 219.43,225.95 219.93,226.19 220.43,225.7 220.93,226.21 221.43,226.34 221.93,225.63 222.43,226.38 222.93,226.96 223.43,226.48 223.93,226.58 224.43,226.27 224.93,225.63 225.43,226.28 225.93,225.93 226.43,226.65 226.93,226.93 227.43,227.07 227.93,226.98 228.43,226.89 228.93,226.67 229.43,227.27 229.93,227.13 230.43,226.72 230.93,226.96 231.43,226.72 231.93,226.71 232.43,226.97 232.93,226.94 233.43,226.4 233.93,227.14 234.43,227.41 234.93,227.44 235.43,226.45 235.93,226.99 236.43,227.31 236.93,227.85 237.43,227.27 237.93,228.14 238.43,227.55 238.93,227.33 239.43,227.55 239.93,227.45 240.43,228.2 240.93,227.99 241.43,228.46 241.93,228.24 242.43,228.16 242.93,228.15 243.43,228.47 243.93,228.89 244.43,227.8 244.93,227.9 245.43,227.75 245.93,227.59 246.43,227.32 246.93,228.17 247.43,227.32 247.93,228.09 248.43,228.4 248.93,228.58 249.43,227.79 249.93,227.69 250.43,228.21 250.93,228.92 251.43,228.52 251.5,228.58 L251.5,234.88 251.43,234.3 250.93,234.25 250.43,234.48 249.93,234.82 249.43,235.38 248.93,235.33 248.43,234.94 247.93,234.75 247.43,235.01 246.93,235.21 246.43,235.38 245.93,235.82 245.43,235.84 244.93,235.87 244.43,236.72 243.93,235.47 243.43,235.96 242.93,235.78 242.43,235.25 241.93,235.36 241.43,235.6 240.93,236 240.43,235.06 239.93,235.51 239.43,234.94 238.93,235.41 238.43,235.48 237.93,235.66 237.43,236.08 236.93,235.2 236.43,235.16 235.93,235.04 235.43,235.21 234.93,235.46 234.43,235.93 233.93,236.26 233.43,236.45 232.93,236.31 232.43,236.87 231.93,236.3 231.43,236.6 230.93,237.28 230.43,236.54 229.93,237.73 229.43,237.03 228.93,238.81 228.43,236.74 227.93,237.07 227.43,237.38 226.93,237.81 226.43,237.85 225.93,237.21 225.43,237.77 224.93,238.01 224.43,237.66 223.93,237.32 223.43,237.35 222.93,237.64 222.43,237.46 221.93,238.18 221.43,237.75 220.93,237.19 220.43,237.28 219.93,237.43 219.43,238.53 218.93,237.96 218.43,238.32 217.93,238.11 217.43,238.6 216.93,237.99 216.43,238.35 215.93,237.93 215.43,240.93 214.93,238.64 214.43,239.59 213.93,239.73 213.43,241.12 212.93,240.22 212.43,239.91 211.93,239.57 211.43,241.13 210.93,239.25 210.43,241.1 209.93,238.96 209.43,239.19 208.93,239.32 208.43,238.55 207.93,239.08 207.43,238.54 206.93,238.59 206.43,238.91 205.93,238.68 205.43,239.48 204.93,240.1 204.43,239.79 203.93,241.1 203.43,240.77 202.93,239.76 202.43,240.37 201.93,240.9 201.43,241.32 200.93,242.09 200.43,244.33 199.93,242.66 199.43,242.56 198.93,241.89 198.43,242.33 197.93,242.83 197.43,242.31 196.93,242.52 196.43,242.24 195.93,242.22 195.43,241.68 194.93,240.63 194.43,240.62 193.93,240.03 193.43,242.04 192.93,239.97 192.43,240.04 191.93,239.78 191.43,239.91 190.93,239.59 190.43,239.27 189.93,239.31 189.43,239.48 188.93,239.36 188.43,239.3 187.93,240.38 187.43,238.45 186.93,238.2 186.43,238.16 185.93,237.93 185.43,238.67 184.93,238.88 184.43,238.5 183.93,239.19 183.43,238.38 182.93,239.41 182.43,238.57 181.93,239.4 181.43,239.51 180.93,239.91 180.43,240.31 179.93,242.42 179.43,241.01 178.93,240.48 178.43,240.76 177.93,239.86 177.43,239.95 176.93,239.79 176.43,238.77 175.93,239.02 175.43,238.37 174.93,238.81 174.43,238.82 173.93,238.34 173.43,237.77 172.93,237.76 172.43,237.08 171.93,236.7 171.43,236.95 170.93,236.92 170.43,237.09 169.93,235.98 169.43,236.8 168.93,236.95 168.43,236.49 167.93,236.13 167.43,236.43 166.93,237.08 166.43,237.55 165.93,235.99 165.43,236.72 164.93,236.97 164.43,237.18 163.93,235.98 163.43,236.63 162.93,236.61 162.43,235.81 161.93,236.4 161.43,236.4 160.93,236.47 160.43,238.07 159.93,236.69 159.43,235.95 158.93,236.3 158.43,235.86 157.93,236.22 157.43,236.85 156.93,236.77 156.43,237.11 155.93,236.2 155.43,236.33 154.93,236.58 154.43,236.76 153.93,237.04 153.43,238.77 152.93,237.08 152.43,236.96 151.93,236.49 151.43,235.94 150.93,237.4 150.43,236.48 149.93,236.43 149.43,237.51 148.93,237.04 148.43,237.3 147.93,237.18 147.43,237.78 146.93,237.05 146.43,236.69 145.93,237.08 145.43,237.09 144.93,236.5 144.43,236.78 143.93,237.42 143.43,236.95 142.93,237.96 142.43,238.1 141.93,239.13 141.43,237.78 140.93,237.96 140.43,237.79 139.93,237.83 139.43,237.31 138.93,237.28 138.43,237.44 137.93,237.37Z" fill="#000088"/>
</g>
<rect x="53.7" y="197.4" width="198.2" height="72" rx="1.5" fill="none" stroke="#4e4e4e" stroke-width="1.1"/>
<text transform="translate(51.4,205.7) scale(0.905,1)" fill="#9494ff" font-size="8.8" text-anchor="end" font-weight="normal"  stroke="#1c0606" stroke-width="1.1" paint-order="stroke" stroke-linejoin="round">40 A</text>
<text transform="translate(51.4,237.1) scale(0.905,1)" fill="#9494ff" font-size="8.8" text-anchor="end" font-weight="normal"  stroke="#1c0606" stroke-width="1.1" paint-order="stroke" stroke-linejoin="round">0 A</text>
<text transform="translate(51.4,267.8) scale(0.905,1)" fill="#9494ff" font-size="8.8" text-anchor="end" font-weight="normal"  stroke="#1c0606" stroke-width="1.1" paint-order="stroke" stroke-linejoin="round">-40 A</text>
<text transform="translate(54.3,279) scale(0.905,1)" fill="#9494ff" font-size="8.8" text-anchor="start" font-weight="normal"  stroke="#1c0606" stroke-width="1.1" paint-order="stroke" stroke-linejoin="round">-80 ms</text>
<text transform="translate(152.8,279) scale(0.905,1)" fill="#9494ff" font-size="8.8" text-anchor="middle" font-weight="normal"  stroke="#1c0606" stroke-width="1.1" paint-order="stroke" stroke-linejoin="round">920 ms</text>
<text transform="translate(251.9,279) scale(0.905,1)" fill="#9494ff" font-size="8.8" text-anchor="end" font-weight="normal"  stroke="#1c0606" stroke-width="1.1" paint-order="stroke" stroke-linejoin="round">1.92 s</text>
<path d="M61.7,270.2 l2.2,4.4 h-4.4z" fill="#9494ff"/>
<path d="M42.9,225.9 h10.6 v7.4 l-2.2,0 l-1.2,1.4 l-0.6,-1.4 h-6.6z" fill="#9494ff"/>
<text x="48.1" y="231.7" fill="#f4f4f4" font-size="5.2" text-anchor="middle" font-weight="normal" opacity="0.85">C6</text>
<rect x="305.4" y="197.4" width="198.2" height="72" fill="#000"/>
<line x1="325.22" y1="197.4" x2="325.22" y2="269.4" stroke="#323232" stroke-width="0.8"/>
<line x1="345.04" y1="197.4" x2="345.04" y2="269.4" stroke="#323232" stroke-width="0.8"/>
<line x1="364.86" y1="197.4" x2="364.86" y2="269.4" stroke="#323232" stroke-width="0.8"/>
<line x1="384.68" y1="197.4" x2="384.68" y2="269.4" stroke="#323232" stroke-width="0.8"/>
<line x1="404.5" y1="197.4" x2="404.5" y2="269.4" stroke="#4c4c4c" stroke-width="0.8"/>
<line x1="424.32" y1="197.4" x2="424.32" y2="269.4" stroke="#323232" stroke-width="0.8"/>
<line x1="444.14" y1="197.4" x2="444.14" y2="269.4" stroke="#323232" stroke-width="0.8"/>
<line x1="463.96" y1="197.4" x2="463.96" y2="269.4" stroke="#323232" stroke-width="0.8"/>
<line x1="483.78" y1="197.4" x2="483.78" y2="269.4" stroke="#323232" stroke-width="0.8"/>
<line x1="305.4" y1="206.4" x2="503.6" y2="206.4" stroke="#323232" stroke-width="0.8"/>
<line x1="305.4" y1="215.4" x2="503.6" y2="215.4" stroke="#323232" stroke-width="0.8"/>
<line x1="305.4" y1="224.4" x2="503.6" y2="224.4" stroke="#323232" stroke-width="0.8"/>
<line x1="305.4" y1="233.4" x2="503.6" y2="233.4" stroke="#4c4c4c" stroke-width="0.8"/>
<line x1="305.4" y1="242.4" x2="503.6" y2="242.4" stroke="#323232" stroke-width="0.8"/>
<line x1="305.4" y1="251.4" x2="503.6" y2="251.4" stroke="#323232" stroke-width="0.8"/>
<line x1="305.4" y1="260.4" x2="503.6" y2="260.4" stroke="#323232" stroke-width="0.8"/>
<line x1="305.4" y1="233.4" x2="503.6" y2="233.4" stroke="#8a8a8a" stroke-width="1.6" stroke-dasharray="0.9 3.06" stroke-dashoffset="0.45"/>
<line x1="305.4" y1="210.9" x2="503.6" y2="210.9" stroke="#7a7a7a" stroke-width="0.7" stroke-dasharray="0.8 3.16" stroke-dashoffset="0.4"/>
<line x1="305.4" y1="255.9" x2="503.6" y2="255.9" stroke="#7a7a7a" stroke-width="0.7" stroke-dasharray="0.8 3.16" stroke-dashoffset="0.4"/>
<g clip-path="url(#c11)">
<clipPath id="c11"><rect x="305.4" y="197.4" width="198.2" height="72"/></clipPath>
<path d="M305.8,227.79 306.3,227.76 306.8,228.9 307.3,229.53 307.8,228.31 308.3,228.11 308.8,228.2 309.3,227.03 309.8,227.76 310.3,227.92 310.8,227.9 311.3,228.15 311.8,227.99 312.3,228.51 312.8,228.9 313.3,226.1 313.8,221.97 314.3,218.43 314.8,213.73 315.3,210.3 315.8,206.37 316.3,202.12 316.8,200.45 317.3,200.75 317.8,199.93 318.3,200.27 318.8,200.77 319.3,201.35 319.8,202.64 320.3,204.82 320.8,202.61 321.3,208.23 321.8,208.58 322.3,209.35 322.8,211.72 323.3,211.99 323.8,213.2 324.3,214.84 324.8,214.86 325.3,216.37 325.8,216.59 326.3,218.37 326.8,219.02 327.3,218.31 327.8,218.48 328.3,215.72 328.8,217.37 329.3,216.85 329.8,215.54 330.3,213.16 330.8,212.7 331.3,212.1 331.8,209.49 332.3,210.19 332.8,209.24 333.3,208.84 333.8,208.21 334.3,208.03 334.8,208.58 335.3,208.52 335.8,209.37 336.3,210.15 336.8,210.69 337.3,210.93 337.8,212.68 338.3,213.41 338.8,213.97 339.3,214.31 339.8,214.97 340.3,214.32 340.8,216.43 341.3,216.31 341.8,216.77 342.3,216.27 342.8,216.28 343.3,216.69 343.8,216.61 344.3,215.83 344.8,216.96 345.3,216.3 345.8,215.94 346.3,214.76 346.8,214.09 347.3,213.33 347.8,212.83 348.3,212.66 348.8,212.54 349.3,213.56 349.8,214.82 350.3,214.14 350.8,213.06 351.3,213.33 351.8,213.23 352.3,212.59 352.8,213 353.3,214.46 353.8,213.75 354.3,214.37 354.8,215.7 355.3,216.67 355.8,216.87 356.3,216.85 356.8,216.99 357.3,217.13 357.8,217.64 358.3,218.35 358.8,217.87 359.3,219.53 359.8,218.34 360.3,218.24 360.8,217.52 361.3,216.24 361.8,216.47 362.3,217.56 362.8,218.75 363.3,218.66 363.8,219.21 364.3,218.99 364.8,217.84 365.3,218.15 365.8,216.02 366.3,216.58 366.8,216.52 367.3,217.41 367.8,218.41 368.3,219.23 368.8,218.17 369.3,218.54 369.8,219.83 370.3,219.16 370.8,219.44 371.3,219.13 371.8,216.1 372.3,217.77 372.8,217.5 373.3,218.41 373.8,218.88 374.3,219.49 374.8,219.64 375.3,220.14 375.8,220.07 376.3,220.69 376.8,220.47 377.3,218.97 377.8,219.36 378.3,219.22 378.8,219.11 379.3,219.12 379.8,219.55 380.3,218.49 380.8,218.34 381.3,219.14 381.8,220.18 382.3,219.26 382.8,220.89 383.3,220.1 383.8,220.22 384.3,219.98 384.8,220.21 385.3,219.75 385.8,219.78 386.3,220.6 386.8,221.23 387.3,220.39 387.8,220.44 388.3,221.61 388.8,220.71 389.3,221.23 389.8,220.56 390.3,220.06 390.8,219.96 391.3,220.27 391.8,220.49 392.3,221.1 392.8,219.96 393.3,219.92 393.8,219.78 394.3,220.84 394.8,220.38 395.3,221.14 395.8,221.25 396.3,221.99 396.8,222.37 397.3,220.42 397.8,219.39 398.3,219.68 398.8,219.64 399.3,219.01 399.8,220.05 400.3,220.84 400.8,219.22 401.3,220.62 401.8,219.64 402.3,220.66 402.8,220.33 403.3,220.35 403.8,219.23 404.3,219.6 404.8,219.02 405.3,220.19 405.8,219.94 406.3,220.13 406.8,221.51 407.3,222.94 407.8,221.91 408.3,221.67 408.8,222.32 409.3,220.65 409.8,221.38 410.3,220.83 410.8,221.89 411.3,221.7 411.8,222.17 412.3,221.35 412.8,220.99 413.3,221.47 413.8,221.2 414.3,221.33 414.8,220.18 415.3,219.78 415.8,220.1 416.3,220.44 416.8,220.49 417.3,220.87 417.8,220.75 418.3,220.2 418.8,220.84 419.3,220.07 419.8,218.67 420.3,219.87 420.8,219.97 421.3,218.82 421.8,220.12 422.3,221.39 422.8,221.2 423.3,221.48 423.8,221.2 424.3,221.31 424.8,220.66 425.3,217.74 425.8,219.24 426.3,219.72 426.8,220.33 427.3,219.18 427.8,221.06 428.3,220.85 428.8,219.63 429.3,220.43 429.8,219.99 430.3,219.99 430.8,219.57 431.3,220.59 431.8,220.24 432.3,220.13 432.8,221.32 433.3,220.72 433.8,218.58 434.3,217.33 434.8,220.65 435.3,220.99 435.8,220.76 436.3,219.36 436.8,219.4 437.3,220.49 437.8,220.02 438.3,219.7 438.8,221.32 439.3,221.11 439.8,218.62 440.3,219.64 440.8,220.12 441.3,220.45 441.8,220.54 442.3,220.36 442.8,220.47 443.3,220.87 443.8,220.17 444.3,220.61 444.8,219.56 445.3,220.9 445.8,220.95 446.3,219.24 446.8,222.31 447.3,220.9 447.8,221.7 448.3,221.59 448.8,219.67 449.3,220.75 449.8,221.38 450.3,221.16 450.8,221.44 451.3,222.21 451.8,222.53 452.3,221.98 452.8,221.7 453.3,220.78 453.8,220.69 454.3,221.56 454.8,220.54 455.3,220.79 455.8,220.65 456.3,220.33 456.8,220.67 457.3,220.86 457.8,219.78 458.3,218.63 458.8,215.29 459.3,214.55 459.8,212.08 460.3,208.82 460.8,207.79 461.3,207.37 461.8,205.04 462.3,204.87 462.8,206.21 463.3,205.99 463.8,205.69 464.3,205.42 464.8,205.51 465.3,204.1 465.8,204.11 466.3,204.02 466.8,203.09 467.3,202.58 467.8,203.39 468.3,202.83 468.8,202.36 469.3,203.19 469.8,203.32 470.3,203.3 470.8,203.05 471.3,200.64 471.8,203.56 472.3,203.81 472.8,203.73 473.3,203.42 473.8,203.75 474.3,205.33 474.8,205.24 475.3,206.28 475.8,206.97 476.3,206.98 476.8,206.29 477.3,206.16 477.8,206.14 478.3,207.01 478.8,208.23 479.3,208.19 479.8,209.62 480.3,209.12 480.8,209.34 481.3,207.92 481.8,209.05 482.3,208.34 482.8,210.09 483.3,211.49 483.8,211.89 484.3,212.1 484.8,212.66 485.3,212.07 485.8,211.86 486.3,211.29 486.8,213.43 487.3,213.18 487.8,213.5 488.3,213.26 488.8,213.33 489.3,212.66 489.8,212.75 490.3,213.66 490.8,213.35 491.3,215.64 491.8,214.31 492.3,213.94 492.8,214.16 493.3,214.73 493.8,214.78 494.3,214.68 494.8,214.82 495.3,215.96 495.8,216.88 496.3,216.83 496.8,217.4 497.3,216.81 497.8,217.67 498.3,217.06 498.8,215.77 499.3,215.03 499.8,215.79 500.3,216.51 500.8,214.94 501.3,215.32 501.8,216.18 502.3,216.15 502.8,216.71 503.2,217.4 L503.2,240.46 502.8,239.45 502.3,239.67 501.8,239.83 501.3,239.37 500.8,240.14 500.3,240.7 499.8,241.76 499.3,241.68 498.8,240.88 498.3,241.69 497.8,241.86 497.3,241.42 496.8,241.87 496.3,242.27 495.8,241.65 495.3,241.54 494.8,242.13 494.3,242.08 493.8,242.78 493.3,242.76 492.8,243.45 492.3,243.17 491.8,242.74 491.3,242.78 490.8,242.3 490.3,242.37 489.8,242.63 489.3,242.61 488.8,242.16 488.3,243.22 487.8,243.68 487.3,243.27 486.8,242.95 486.3,243.63 485.8,244.8 485.3,244.09 484.8,244.76 484.3,246.07 483.8,246.53 483.3,246.69 482.8,247.62 482.3,248.19 481.8,247.37 481.3,247.46 480.8,247.38 480.3,247.28 479.8,248.07 479.3,248.31 478.8,248.96 478.3,248.95 477.8,249.43 477.3,249.61 476.8,248.99 476.3,249.52 475.8,250.87 475.3,250.95 474.8,251.86 474.3,252.65 473.8,253.05 473.3,252.24 472.8,253.83 472.3,254.02 471.8,254.57 471.3,255.94 470.8,256.35 470.3,257.43 469.8,256.51 469.3,255.72 468.8,254 468.3,253.76 467.8,253.09 467.3,251.93 466.8,250.79 466.3,250.1 465.8,249.44 465.3,249.64 464.8,249.98 464.3,249.63 463.8,248.77 463.3,247.39 462.8,247.05 462.3,245.4 461.8,244.56 461.3,244.04 460.8,243.88 460.3,242.51 459.8,242.39 459.3,240.82 458.8,239.82 458.3,239.21 457.8,238.72 457.3,237.86 456.8,238.71 456.3,238.59 455.8,239.44 455.3,238.69 454.8,239.35 454.3,237.89 453.8,237.22 453.3,236.97 452.8,238.04 452.3,237.31 451.8,238.75 451.3,237.56 450.8,238.73 450.3,238.63 449.8,237.74 449.3,237.87 448.8,237.65 448.3,238.64 447.8,238.43 447.3,237.6 446.8,236.9 446.3,237.55 445.8,237.25 445.3,236.88 444.8,237.03 444.3,237.62 443.8,237.63 443.3,237.92 442.8,237.96 442.3,238.53 441.8,236.98 441.3,237.14 440.8,235.86 440.3,236 439.8,236.23 439.3,236.85 438.8,237.65 438.3,238.46 437.8,237.99 437.3,237.45 436.8,238.08 436.3,238.13 435.8,238.27 435.3,238.81 434.8,237.97 434.3,238.71 433.8,238.31 433.3,237.37 432.8,236.9 432.3,237.04 431.8,236.82 431.3,236.57 430.8,236 430.3,237.6 429.8,238.14 429.3,237.75 428.8,237.75 428.3,239.44 427.8,238.2 427.3,238 426.8,236.81 426.3,237.6 425.8,237.81 425.3,237.88 424.8,238.37 424.3,239.12 423.8,238.89 423.3,237.77 422.8,237.66 422.3,237.44 421.8,237.5 421.3,236.68 420.8,237.2 420.3,237.33 419.8,237.36 419.3,236.45 418.8,237.03 418.3,237.35 417.8,237.28 417.3,238.54 416.8,238.51 416.3,237.96 415.8,238.21 415.3,238.08 414.8,238.72 414.3,237.19 413.8,238.72 413.3,238.77 412.8,237.24 412.3,237.17 411.8,237.9 411.3,237.65 410.8,237.17 410.3,238.23 409.8,238.45 409.3,238.52 408.8,237.29 408.3,238.42 407.8,238.44 407.3,237.93 406.8,237.32 406.3,237.62 405.8,237.25 405.3,236.51 404.8,237.25 404.3,236.83 403.8,237.12 403.3,238.02 402.8,237.96 402.3,238.77 401.8,238.93 401.3,239.57 400.8,239.71 400.3,239.44 399.8,238.23 399.3,238.04 398.8,238.34 398.3,238.92 397.8,238.25 397.3,238.65 396.8,238.2 396.3,238.4 395.8,238.93 395.3,239.18 394.8,239.52 394.3,238.64 393.8,238.21 393.3,239.14 392.8,239.54 392.3,239.62 391.8,239.17 391.3,239.57 390.8,239.46 390.3,239.22 389.8,239.66 389.3,239.12 388.8,239.02 388.3,238.41 387.8,238.95 387.3,237.64 386.8,238.06 386.3,237.24 385.8,237.72 385.3,236.44 384.8,236.78 384.3,236 383.8,236.77 383.3,237.14 382.8,237.39 382.3,237.98 381.8,237.82 381.3,238.05 380.8,238.08 380.3,238.65 379.8,239.18 379.3,238.36 378.8,238.2 378.3,237.32 377.8,237.29 377.3,236.58 376.8,237.35 376.3,237.04 375.8,236.88 375.3,236.74 374.8,237.52 374.3,237.32 373.8,237.5 373.3,238.06 372.8,238.88 372.3,238.27 371.8,237.91 371.3,238.75 370.8,238.62 370.3,238.98 369.8,238.95 369.3,239.12 368.8,239.52 368.3,239.95 367.8,239.96 367.3,239.47 366.8,240.16 366.3,239.95 365.8,239.68 365.3,239.05 364.8,238.95 364.3,239.55 363.8,239.4 363.3,239.85 362.8,240.2 362.3,239.92 361.8,240.29 361.3,239.26 360.8,238.78 360.3,238.29 359.8,238.03 359.3,238.26 358.8,238.95 358.3,239.2 357.8,239.5 357.3,239.85 356.8,240.61 356.3,239.92 355.8,239.81 355.3,240.09 354.8,240.5 354.3,239.62 353.8,238.92 353.3,238.78 352.8,239.63 352.3,238.7 351.8,238.14 351.3,239.4 350.8,238.75 350.3,239.83 349.8,240.33 349.3,240.72 348.8,240.35 348.3,239.45 347.8,238.53 347.3,239.46 346.8,239.18 346.3,240.51 345.8,240.32 345.3,241.16 344.8,239.46 344.3,239.66 343.8,239.64 343.3,240.67 342.8,240.64 342.3,240.76 341.8,241.85 341.3,241.43 340.8,240.59 340.3,241.32 339.8,240.99 339.3,240.58 338.8,241.47 338.3,242.52 337.8,242.58 337.3,242.28 336.8,241.99 336.3,242 335.8,241.74 335.3,241.6 334.8,242.41 334.3,242.98 333.8,242.8 333.3,242.93 332.8,243.4 332.3,243.68 331.8,243.57 331.3,243.08 330.8,243.23 330.3,242.85 329.8,243.76 329.3,243.64 328.8,243.58 328.3,243.08 327.8,243.24 327.3,242.77 326.8,242.91 326.3,241.83 325.8,242.49 325.3,241.58 324.8,241.12 324.3,241.5 323.8,241.66 323.3,241.17 322.8,241.33 322.3,241.27 321.8,241.67 321.3,242.72 320.8,243.01 320.3,243.08 319.8,242.73 319.3,243.57 318.8,242.43 318.3,241.72 317.8,241.6 317.3,242.63 316.8,242.55 316.3,242.75 315.8,242.05 315.3,242.35 314.8,240.29 314.3,238.82 313.8,237.73 313.3,236.58 312.8,235.09 312.3,234.83 311.8,234.77 311.3,235.56 310.8,236.06 310.3,236.43 309.8,237 309.3,236.9 308.8,236.09 308.3,236.47 307.8,235.4 307.3,235.19 306.8,234.29 306.3,234.83 305.8,233.75Z" fill="#8c8cff"/>
<line x1="327" y1="241.28" x2="327" y2="249.38" stroke="#8c8cff" stroke-width="0.94"/>
<line x1="351.01" y1="239.27" x2="351.01" y2="246.76" stroke="#8c8cff" stroke-width="0.82"/>
<line x1="330.66" y1="241.28" x2="330.66" y2="247.41" stroke="#8c8cff" stroke-width="0.78"/>
<line x1="344.69" y1="239.27" x2="344.69" y2="245.18" stroke="#8c8cff" stroke-width="0.84"/>
<line x1="326.38" y1="241.28" x2="326.38" y2="251.12" stroke="#8c8cff" stroke-width="0.99"/>
<line x1="320.28" y1="241.87" x2="320.28" y2="250.78" stroke="#8c8cff" stroke-width="0.69"/>
<line x1="339.51" y1="240.71" x2="339.51" y2="251.55" stroke="#8c8cff" stroke-width="0.71"/>
<line x1="324.45" y1="241.28" x2="324.45" y2="248.35" stroke="#8c8cff" stroke-width="0.76"/>
<line x1="348.43" y1="239.27" x2="348.43" y2="252.08" stroke="#8c8cff" stroke-width="1"/>
<line x1="330.36" y1="241.28" x2="330.36" y2="249.9" stroke="#8c8cff" stroke-width="0.7"/>
<line x1="332.76" y1="241.28" x2="332.76" y2="254.87" stroke="#8c8cff" stroke-width="0.65"/>
<line x1="330.38" y1="241.28" x2="330.38" y2="247.27" stroke="#8c8cff" stroke-width="1.02"/>
<line x1="327.01" y1="241.28" x2="327.01" y2="250.2" stroke="#8c8cff" stroke-width="0.63"/>
<line x1="341.11" y1="240.31" x2="341.11" y2="249.5" stroke="#8c8cff" stroke-width="1"/>
<line x1="342.23" y1="239.95" x2="342.23" y2="251.46" stroke="#8c8cff" stroke-width="0.73"/>
<line x1="325.18" y1="241.28" x2="325.18" y2="251.32" stroke="#8c8cff" stroke-width="0.62"/>
<line x1="450.34" y1="237.26" x2="450.34" y2="242.17" stroke="#8c8cff" stroke-width="0.85"/>
<line x1="390.12" y1="237.77" x2="390.12" y2="240.08" stroke="#8c8cff" stroke-width="0.88"/>
<line x1="433.2" y1="237.26" x2="433.2" y2="239.74" stroke="#8c8cff" stroke-width="0.65"/>
<line x1="424.05" y1="237.26" x2="424.05" y2="241.16" stroke="#8c8cff" stroke-width="1"/>
<line x1="395.37" y1="237.71" x2="395.37" y2="243.67" stroke="#8c8cff" stroke-width="1.04"/>
<line x1="385.94" y1="237.81" x2="385.94" y2="241.97" stroke="#8c8cff" stroke-width="0.89"/>
<line x1="399.44" y1="237.67" x2="399.44" y2="242.97" stroke="#8c8cff" stroke-width="0.95"/>
<line x1="437.96" y1="237.26" x2="437.96" y2="240.28" stroke="#8c8cff" stroke-width="0.85"/>
<line x1="409.18" y1="237.49" x2="409.18" y2="241.84" stroke="#8c8cff" stroke-width="0.61"/>
<line x1="437.3" y1="237.26" x2="437.3" y2="241.07" stroke="#8c8cff" stroke-width="0.68"/>
<line x1="441.76" y1="237.26" x2="441.76" y2="241.5" stroke="#8c8cff" stroke-width="0.97"/>
<line x1="429.73" y1="237.26" x2="429.73" y2="241.77" stroke="#8c8cff" stroke-width="1.06"/>
<line x1="358.16" y1="238.54" x2="358.16" y2="241.89" stroke="#8c8cff" stroke-width="0.68"/>
<line x1="418.87" y1="237.3" x2="418.87" y2="240.19" stroke="#8c8cff" stroke-width="0.61"/>
<line x1="366.57" y1="238.27" x2="366.57" y2="240.97" stroke="#8c8cff" stroke-width="0.87"/>
<line x1="399.96" y1="237.67" x2="399.96" y2="241.54" stroke="#8c8cff" stroke-width="0.61"/>
<line x1="407.58" y1="237.52" x2="407.58" y2="240.55" stroke="#8c8cff" stroke-width="0.65"/>
<line x1="358.25" y1="238.53" x2="358.25" y2="241.14" stroke="#8c8cff" stroke-width="0.8"/>
<line x1="466.17" y1="251.01" x2="466.17" y2="260.7" stroke="#8c8cff" stroke-width="0.68"/>
<line x1="490.75" y1="242.45" x2="490.75" y2="256.29" stroke="#8c8cff" stroke-width="0.76"/>
<line x1="462.06" y1="244.44" x2="462.06" y2="259.18" stroke="#8c8cff" stroke-width="0.64"/>
<line x1="487.07" y1="243.33" x2="487.07" y2="255.96" stroke="#8c8cff" stroke-width="0.84"/>
<line x1="497.5" y1="241.02" x2="497.5" y2="247.52" stroke="#8c8cff" stroke-width="0.96"/>
<line x1="498.19" y1="240.88" x2="498.19" y2="254.93" stroke="#8c8cff" stroke-width="1.02"/>
<line x1="477.83" y1="248.83" x2="477.83" y2="259" stroke="#8c8cff" stroke-width="1.02"/>
<line x1="475.38" y1="250.59" x2="475.38" y2="258.18" stroke="#8c8cff" stroke-width="0.62"/>
<line x1="467.79" y1="253.39" x2="467.79" y2="259.83" stroke="#8c8cff" stroke-width="1.06"/>
<line x1="472.32" y1="253.3" x2="472.32" y2="261.87" stroke="#8c8cff" stroke-width="1.09"/>
<line x1="488.84" y1="242.89" x2="488.84" y2="252.28" stroke="#8c8cff" stroke-width="0.65"/>
<line x1="474.75" y1="251.06" x2="474.75" y2="259.01" stroke="#8c8cff" stroke-width="1.07"/>
<line x1="477.15" y1="249.27" x2="477.15" y2="264.08" stroke="#8c8cff" stroke-width="0.74"/>
<line x1="461.01" y1="242.69" x2="461.01" y2="256.76" stroke="#8c8cff" stroke-width="0.64"/>
<line x1="493.05" y1="241.91" x2="493.05" y2="252.93" stroke="#8c8cff" stroke-width="0.74"/>
<line x1="495.04" y1="241.51" x2="495.04" y2="250.85" stroke="#8c8cff" stroke-width="1.09"/>
<line x1="483.09" y1="245.58" x2="483.09" y2="260.1" stroke="#8c8cff" stroke-width="1.07"/>
<line x1="475.23" y1="250.71" x2="475.23" y2="262.69" stroke="#8c8cff" stroke-width="0.96"/>
<line x1="487.29" y1="243.26" x2="487.29" y2="248.51" stroke="#8c8cff" stroke-width="0.94"/>
<line x1="491.91" y1="242.18" x2="491.91" y2="249.15" stroke="#8c8cff" stroke-width="0.65"/>
<line x1="461.87" y1="244.13" x2="461.87" y2="254.63" stroke="#8c8cff" stroke-width="0.65"/>
<line x1="495.63" y1="241.39" x2="495.63" y2="250.59" stroke="#8c8cff" stroke-width="1.1"/>
<line x1="490.71" y1="242.46" x2="490.71" y2="251.79" stroke="#8c8cff" stroke-width="0.69"/>
<line x1="477.41" y1="249.11" x2="477.41" y2="260.24" stroke="#8c8cff" stroke-width="1.03"/>
<line x1="497.54" y1="241.01" x2="497.54" y2="249.3" stroke="#8c8cff" stroke-width="0.61"/>
<line x1="487.71" y1="243.16" x2="487.71" y2="255.1" stroke="#8c8cff" stroke-width="0.92"/>
</g>
<rect x="305.4" y="197.4" width="198.2" height="72" rx="1.5" fill="none" stroke="#4e4e4e" stroke-width="1.1"/>
<text transform="translate(303.1,205.7) scale(0.905,1)" fill="#9494ff" font-size="8.8" text-anchor="end" font-weight="normal"  stroke="#1c0606" stroke-width="1.1" paint-order="stroke" stroke-linejoin="round">20 A</text>
<text transform="translate(303.1,237.1) scale(0.905,1)" fill="#9494ff" font-size="8.8" text-anchor="end" font-weight="normal"  stroke="#1c0606" stroke-width="1.1" paint-order="stroke" stroke-linejoin="round">0 A</text>
<text transform="translate(303.1,267.8) scale(0.905,1)" fill="#9494ff" font-size="8.8" text-anchor="end" font-weight="normal"  stroke="#1c0606" stroke-width="1.1" paint-order="stroke" stroke-linejoin="round">-20 A</text>
<text transform="translate(306,279) scale(0.905,1)" fill="#9494ff" font-size="8.8" text-anchor="start" font-weight="normal"  stroke="#1c0606" stroke-width="1.1" paint-order="stroke" stroke-linejoin="round">25.5 ms</text>
<text transform="translate(503.6,279) scale(0.905,1)" fill="#9494ff" font-size="8.8" text-anchor="end" font-weight="normal"  stroke="#1c0606" stroke-width="1.1" paint-order="stroke" stroke-linejoin="round">775.5 ms</text>
<path d="M301.8,272 l3,-1.9 v3.8z" fill="#9494ff"/>
<path d="M294.6,225.9 h10.6 v7.4 l-2.2,0 l-1.2,1.4 l-0.6,-1.4 h-6.6z" fill="#9494ff"/>
<text x="299.8" y="231.7" fill="#f4f4f4" font-size="5.2" text-anchor="middle" font-weight="normal" opacity="0.85">Z6</text>
<rect x="562.7" y="102.5" width="198.2" height="72" fill="#000"/>
<line x1="582.52" y1="102.5" x2="582.52" y2="174.5" stroke="#323232" stroke-width="0.8"/>
<line x1="602.34" y1="102.5" x2="602.34" y2="174.5" stroke="#323232" stroke-width="0.8"/>
<line x1="622.16" y1="102.5" x2="622.16" y2="174.5" stroke="#323232" stroke-width="0.8"/>
<line x1="641.98" y1="102.5" x2="641.98" y2="174.5" stroke="#323232" stroke-width="0.8"/>
<line x1="661.8" y1="102.5" x2="661.8" y2="174.5" stroke="#4c4c4c" stroke-width="0.8"/>
<line x1="681.62" y1="102.5" x2="681.62" y2="174.5" stroke="#323232" stroke-width="0.8"/>
<line x1="701.44" y1="102.5" x2="701.44" y2="174.5" stroke="#323232" stroke-width="0.8"/>
<line x1="721.26" y1="102.5" x2="721.26" y2="174.5" stroke="#323232" stroke-width="0.8"/>
<line x1="741.08" y1="102.5" x2="741.08" y2="174.5" stroke="#323232" stroke-width="0.8"/>
<line x1="562.7" y1="111.5" x2="760.9" y2="111.5" stroke="#323232" stroke-width="0.8"/>
<line x1="562.7" y1="120.5" x2="760.9" y2="120.5" stroke="#323232" stroke-width="0.8"/>
<line x1="562.7" y1="129.5" x2="760.9" y2="129.5" stroke="#323232" stroke-width="0.8"/>
<line x1="562.7" y1="138.5" x2="760.9" y2="138.5" stroke="#4c4c4c" stroke-width="0.8"/>
<line x1="562.7" y1="147.5" x2="760.9" y2="147.5" stroke="#323232" stroke-width="0.8"/>
<line x1="562.7" y1="156.5" x2="760.9" y2="156.5" stroke="#323232" stroke-width="0.8"/>
<line x1="562.7" y1="165.5" x2="760.9" y2="165.5" stroke="#323232" stroke-width="0.8"/>
<line x1="562.7" y1="138.5" x2="760.9" y2="138.5" stroke="#8a8a8a" stroke-width="1.6" stroke-dasharray="0.9 3.06" stroke-dashoffset="0.45"/>
<line x1="562.7" y1="116" x2="760.9" y2="116" stroke="#7a7a7a" stroke-width="0.7" stroke-dasharray="0.8 3.16" stroke-dashoffset="0.4"/>
<line x1="562.7" y1="161" x2="760.9" y2="161" stroke="#7a7a7a" stroke-width="0.7" stroke-dasharray="0.8 3.16" stroke-dashoffset="0.4"/>
<g clip-path="url(#c20)">
<clipPath id="c20"><rect x="562.7" y="102.5" width="198.2" height="72"/></clipPath>
<path d="M564.2,139.44 564.7,138.45 565.2,138.31 565.7,138.19 566.2,137 566.7,138.14 567.2,138.49 567.7,138.09 568.2,139.46 568.7,138.44 569.2,134.66 569.7,124.81 570.2,115.6 570.7,114.82 571.2,115.73 571.7,114.9 572.2,115.29 572.7,114.62 573.2,114.54 573.7,115.08 574.2,115.19 574.7,115.76 575.2,114.79 575.7,114.47 576.2,114.82 576.7,114.35 577.2,114.72 577.7,115.1 578.2,115.29 578.7,114.76 579.2,114.47 579.7,114.87 580.2,114.84 580.7,115.02 581.2,113.3 581.7,114.38 582.2,114.89 582.7,115.08 583.2,114.56 583.7,113.58 584.2,115.29 584.7,113.67 585.2,115.63 585.7,115 586.2,115.19 586.7,114.21 587.2,115.38 587.7,115.21 588.2,115.14 588.7,115.27 589.2,115 589.7,114.69 590.2,114.9 590.7,114.37 591.2,114.6 591.7,114.87 592.2,115.02 592.7,114.62 593.2,114.84 593.7,115.44 594.2,114.25 594.7,114.35 595.2,114.25 595.7,114.26 596.2,115.58 596.7,115.14 597.2,115.28 597.7,114.44 598.2,115.49 598.7,114.72 599.2,115.8 599.7,115.66 600.2,114.67 600.7,114.62 601.2,115.81 601.7,115.31 602.2,114.6 602.7,114.6 603.2,115.7 603.7,115.55 604.2,115.16 604.7,115.28 605.2,114.77 605.7,114.91 606.2,113.15 606.7,115.46 607.2,114.36 607.7,114.65 608.2,115.4 608.7,115.44 609.2,114.96 609.7,114.71 610.2,115.31 610.7,115.26 611.2,114.66 611.7,114.85 612.2,114.66 612.7,115.17 613.2,115.77 613.7,115.22 614.2,114.52 614.7,114.56 615.2,115.17 615.7,114.56 616.2,114.84 616.7,114.87 617.2,114.86 617.7,115.25 618.2,115.18 618.7,114.34 619.2,115.51 619.7,114.81 620.2,114.81 620.7,115.12 621.2,114.49 621.7,115.02 622.2,114.57 622.7,114.84 623.2,115.49 623.7,114.96 624.2,115.81 624.7,114.4 625.2,114.29 625.7,115.05 626.2,114.59 626.7,114.73 627.2,114.53 627.7,115.52 628.2,115.72 628.7,115.25 629.2,115.1 629.7,115.8 630.2,114.37 630.7,115.49 631.2,115.07 631.7,114.67 632.2,115.52 632.7,114.82 633.2,114.53 633.7,115.16 634.2,114.76 634.7,114.23 635.2,114.53 635.7,115.48 636.2,115.11 636.7,115.79 637.2,115.19 637.7,114.48 638.2,114.36 638.7,114.56 639.2,115.2 639.7,115.5 640.2,112.97 640.7,115.14 641.2,115.23 641.7,115.63 642.2,115.19 642.7,114.67 643.2,114.83 643.7,112.31 644.2,114.27 644.7,114.7 645.2,115.34 645.7,115.38 646.2,114.83 646.7,114.39 647.2,115.83 647.7,114.57 648.2,115.78 648.7,114.36 649.2,114.45 649.7,114.53 650.2,115.81 650.7,115.42 651.2,114.98 651.7,115.59 652.2,114.9 652.7,115.59 653.2,114.5 653.7,114.48 654.2,114.35 654.7,114.4 655.2,114.41 655.7,115.04 656.2,115.25 656.7,114.53 657.2,114.47 657.7,115.18 658.2,114.37 658.7,114.54 659.2,114.76 659.7,115.13 660.2,115.76 660.7,114.47 661.2,115.62 661.7,115.3 662.2,114.89 662.7,114.34 663.2,115.23 663.7,113.47 664.2,114.86 664.7,115.46 665.2,115.44 665.7,114.56 666.2,114.28 666.7,115.83 667.2,115.7 667.7,115.07 668.2,114.54 668.7,115.61 669.2,115.8 669.7,115.72 670.2,115.66 670.7,115.13 671.2,115.76 671.7,115.6 672.2,114.79 672.7,113 673.2,115.78 673.7,115.27 674.2,114.86 674.7,114.81 675.2,114.33 675.7,115.83 676.2,115.28 676.7,115.73 677.2,114.66 677.7,115.09 678.2,114.75 678.7,115.48 679.2,114.31 679.7,115.68 680.2,115.52 680.7,114.48 681.2,115.72 681.7,115.53 682.2,115.26 682.7,114.93 683.2,114.53 683.7,115.4 684.2,114.27 684.7,115.53 685.2,114.61 685.7,115.3 686.2,115.32 686.7,115.11 687.2,114.44 687.7,115.58 688.2,114.57 688.7,112.57 689.2,113.5 689.7,114.81 690.2,114.5 690.7,114.32 691.2,115.04 691.7,114.93 692.2,115.56 692.7,115.51 693.2,114.98 693.7,115.09 694.2,114.55 694.7,115.15 695.2,114.62 695.7,115.45 696.2,114.94 696.7,115.03 697.2,114.82 697.7,115.51 698.2,114.54 698.7,115.21 699.2,114.3 699.7,115.38 700.2,114.66 700.7,115.8 701.2,114.66 701.7,114.49 702.2,115.41 702.7,114.91 703.2,114.46 703.7,115.29 704.2,115.12 704.7,115.84 705.2,115.23 705.7,114.9 706.2,114.52 706.7,114.9 707.2,115.43 707.7,115.46 708.2,115.68 708.7,114.93 709.2,114.55 709.7,115.01 710.2,114.36 710.7,115.79 711.2,115.19 711.7,115.49 712.2,115.16 712.7,114.39 713.2,114.82 713.7,113.56 714.2,114.28 714.7,115.84 715.2,114.89 715.7,115.33 716.2,115.76 716.7,114.61 717.2,114.6 717.7,114.64 718.2,114.66 718.7,112.67 719.2,115.7 719.7,114.57 720.2,114.61 720.7,114.6 721.2,115.46 721.7,114.35 722.2,114.41 722.7,115.63 723.2,115.7 723.7,115.02 724.2,115.76 724.7,115.76 725.2,114.66 725.7,114.72 726.2,115.05 726.7,114.86 727.2,115.26 727.7,115.75 728.2,114.99 728.7,115.11 729.2,114.87 729.7,114.67 730.2,115.42 730.7,115.23 731.2,115.27 731.7,114.66 732.2,115.16 732.7,115.67 733.2,114.44 733.7,115.75 734.2,114.52 734.7,114.56 735.2,115.25 735.7,114.31 736.2,114.36 736.7,114.96 737.2,115.38 737.7,115.38 738.2,115.54 738.7,114.62 739.2,114.76 739.7,115.5 740.2,114.39 740.7,115 741.2,114.83 741.7,115.84 742.2,115.11 742.7,115.47 743.2,113.11 743.7,114.4 744.2,114.99 744.7,114.27 745.2,114.56 745.7,115.36 746.2,115.84 746.7,114.61 747.2,114.61 747.7,115.88 748.2,114.56 748.7,115.19 749.2,114.83 749.7,115.71 750.2,114.51 750.7,115.35 751.2,114.95 751.7,115.45 752.2,114.95 752.7,115.24 753.2,114.77 753.7,115.72 754.2,115.82 754.7,115.03 755.2,114.24 755.7,114.46 756.2,115.43 756.7,115.73 757.2,114.66 757.7,115.78 758.2,115.17 758.7,114.32 759.2,114.98 759.7,115.67 760.2,115.24 760.5,114.38 L760.5,161.48 760.2,161.87 759.7,162.57 759.2,162.81 758.7,162.94 758.2,161.73 757.7,162.93 757.2,161.7 756.7,161.9 756.2,162.98 755.7,162.05 755.2,162.52 754.7,162.98 754.2,163.94 753.7,162.55 753.2,162.34 752.7,162.36 752.2,162.71 751.7,161.73 751.2,163.04 750.7,161.51 750.2,162.82 749.7,162.78 749.2,162.73 748.7,161.89 748.2,162.07 747.7,162.97 747.2,162.21 746.7,161.97 746.2,162.87 745.7,162.05 745.2,162.49 744.7,163.04 744.2,162.78 743.7,162.72 743.2,162.73 742.7,163.64 742.2,162.77 741.7,161.53 741.2,162.95 740.7,161.66 740.2,162.49 739.7,162.48 739.2,162.53 738.7,162.84 738.2,161.49 737.7,161.63 737.2,161.56 736.7,161.98 736.2,162.97 735.7,161.98 735.2,162.51 734.7,162.59 734.2,162.58 733.7,162.08 733.2,162.73 732.7,161.56 732.2,162.66 731.7,161.73 731.2,162.34 730.7,163.26 730.2,163.02 729.7,162.29 729.2,161.95 728.7,161.74 728.2,161.93 727.7,162.12 727.2,161.64 726.7,162.67 726.2,161.72 725.7,161.45 725.2,161.49 724.7,162.17 724.2,161.96 723.7,162.36 723.2,162.66 722.7,161.69 722.2,162.75 721.7,161.93 721.2,161.8 720.7,162.23 720.2,162.52 719.7,162.53 719.2,162.06 718.7,164.1 718.2,162.62 717.7,162.38 717.2,162.67 716.7,162.76 716.2,162.65 715.7,162.57 715.2,162.97 714.7,162.18 714.2,162.83 713.7,163.03 713.2,162.95 712.7,161.72 712.2,162.14 711.7,162.19 711.2,161.71 710.7,161.83 710.2,162.29 709.7,163 709.2,162.57 708.7,161.54 708.2,161.72 707.7,161.51 707.2,162.22 706.7,162.65 706.2,161.69 705.7,162.03 705.2,162.63 704.7,162.41 704.2,162.33 703.7,162.24 703.2,161.9 702.7,162.35 702.2,162.7 701.7,162.21 701.2,161.83 700.7,164.43 700.2,162.87 699.7,161.68 699.2,162.66 698.7,164.17 698.2,162.27 697.7,161.83 697.2,162.07 696.7,162.58 696.2,161.75 695.7,161.68 695.2,161.65 694.7,161.8 694.2,162.68 693.7,161.65 693.2,161.73 692.7,161.48 692.2,162.16 691.7,161.78 691.2,162.27 690.7,162.72 690.2,162.89 689.7,161.96 689.2,162.96 688.7,163.07 688.2,162.69 687.7,162.65 687.2,162.45 686.7,162.82 686.2,161.84 685.7,161.77 685.2,162.29 684.7,162.74 684.2,162.52 683.7,161.79 683.2,162.75 682.7,161.93 682.2,162.68 681.7,162.56 681.2,161.53 680.7,161.83 680.2,164.52 679.7,162.67 679.2,161.52 678.7,162.75 678.2,163.04 677.7,163.04 677.2,161.54 676.7,162.24 676.2,162.13 675.7,162.65 675.2,162.82 674.7,163.58 674.2,162.77 673.7,163.49 673.2,164.92 672.7,161.89 672.2,161.54 671.7,162.81 671.2,163.03 670.7,162.79 670.2,161.98 669.7,162.62 669.2,162.71 668.7,162.64 668.2,161.66 667.7,161.96 667.2,161.73 666.7,161.73 666.2,162.99 665.7,162.44 665.2,162.7 664.7,162.9 664.2,162.77 663.7,163.04 663.2,162.07 662.7,161.68 662.2,162.06 661.7,162.93 661.2,161.87 660.7,162.69 660.2,161.58 659.7,162.12 659.2,163.02 658.7,162.34 658.2,161.99 657.7,162.58 657.2,162.04 656.7,162.67 656.2,164.31 655.7,161.77 655.2,162.55 654.7,162.28 654.2,161.73 653.7,162.85 653.2,163.3 652.7,161.84 652.2,162.74 651.7,163.99 651.2,161.82 650.7,162.16 650.2,162.27 649.7,162.34 649.2,161.68 648.7,161.68 648.2,162.54 647.7,162.91 647.2,163.11 646.7,162.72 646.2,162.71 645.7,162.74 645.2,162.46 644.7,161.85 644.2,162.87 643.7,161.84 643.2,161.96 642.7,161.66 642.2,162.5 641.7,163.03 641.2,161.96 640.7,162.71 640.2,162.32 639.7,161.96 639.2,162.99 638.7,161.6 638.2,164.83 637.7,162.42 637.2,162.71 636.7,163.05 636.2,162.58 635.7,161.79 635.2,162.43 634.7,161.66 634.2,162.21 633.7,162.09 633.2,163.77 632.7,164.26 632.2,162.69 631.7,162.68 631.2,163.11 630.7,162.79 630.2,163.94 629.7,164.59 629.2,161.63 628.7,163.1 628.2,161.8 627.7,162.06 627.2,161.75 626.7,162.79 626.2,162.02 625.7,162.43 625.2,162.02 624.7,161.85 624.2,161.7 623.7,162.94 623.2,161.77 622.7,162.51 622.2,163.14 621.7,162.08 621.2,162.32 620.7,162.97 620.2,162 619.7,162.29 619.2,162.93 618.7,162.55 618.2,162.61 617.7,162.99 617.2,162.8 616.7,161.6 616.2,162.44 615.7,162.06 615.2,162.53 614.7,162.41 614.2,161.75 613.7,162.62 613.2,162.34 612.7,162.76 612.2,161.97 611.7,163.08 611.2,163.09 610.7,161.66 610.2,162.36 609.7,161.89 609.2,162.22 608.7,162.18 608.2,162.87 607.7,161.87 607.2,162 606.7,161.99 606.2,161.62 605.7,161.94 605.2,163.04 604.7,162.46 604.2,163.16 603.7,161.88 603.2,161.93 602.7,162.79 602.2,162.63 601.7,162.47 601.2,161.86 600.7,162.87 600.2,162.6 599.7,162.49 599.2,161.73 598.7,162.62 598.2,161.66 597.7,162.17 597.2,162.7 596.7,164.68 596.2,162.56 595.7,162.27 595.2,161.71 594.7,162.73 594.2,162.86 593.7,162.54 593.2,163.05 592.7,162.97 592.2,161.71 591.7,162.38 591.2,163.13 590.7,162.13 590.2,162.78 589.7,162.9 589.2,161.63 588.7,162.23 588.2,162.13 587.7,162.46 587.2,162.11 586.7,162.73 586.2,163.1 585.7,162.55 585.2,163.04 584.7,162.85 584.2,161.94 583.7,161.71 583.2,163.14 582.7,162.77 582.2,161.93 581.7,161.99 581.2,162.74 580.7,162.64 580.2,162.32 579.7,161.62 579.2,162.68 578.7,162.72 578.2,161.97 577.7,162.47 577.2,162 576.7,162.1 576.2,162.35 575.7,162.49 575.2,161.94 574.7,161.47 574.2,161.86 573.7,163.81 573.2,161.27 572.7,162.3 572.2,162.11 571.7,161.93 571.2,160.94 570.7,161.96 570.2,161.98 569.7,161.31 569.2,160.42 568.7,159.92 568.2,160 567.7,159.02 567.2,157.87 566.7,158.46 566.2,158.23 565.7,155.99 565.2,154.06 564.7,151.95 564.2,150.82Z" fill="#ff66cc"/>
<path d="M563.5,138.54 564,138.15 564.5,137.99 565,137.84 565.5,137.91 566,137.76 566.5,137.94 567,137.72 567.5,137.96 568,137.87 568.5,137.84 569,137.82 569.5,137.86 570,137.71 570.4,137.84 L570.4,155.82 570,155.54 569.5,155.03 569,154.76 568.5,154.4 568,154 567.5,153.6 567,153.23 566.5,152.88 566,151.13 565.5,149.55 565,147.94 564.5,146.06 564,143.35 563.5,140.46Z" fill="#808000"/>
<path d="M570.2,115.19 570.7,115.02 571.2,115.42 571.7,115.53 572.2,115.11 572.7,115.61 573.2,114.9 573.7,115.5 574.2,114.89 574.7,115.64 575.2,115.45 575.7,115.54 576.2,115.51 576.7,115.26 577.2,115.79 577.7,114.95 578.2,115.6 578.7,114.59 579.2,112.65 579.7,115.42 580.2,115.06 580.7,115.43 581.2,115.18 581.7,114.65 582.2,114.54 582.7,114.77 583.2,115.66 583.7,114.74 584.2,115.23 584.7,115.63 585.2,114.59 585.7,115.72 586.2,115.22 586.7,115.82 587.2,115.82 587.7,115.67 588.2,115.5 588.7,115.46 589.2,114.81 589.7,115.01 590.2,115.1 590.7,115.5 591.2,115.25 591.7,115.59 592.2,115.51 592.7,115.09 593.2,115.03 593.7,115.31 594.2,115.38 594.7,114.59 595.2,114.92 595.7,114.97 596.2,114.82 596.7,115.75 597.2,115.28 597.7,115.8 598.2,115.1 598.7,114.65 599.2,115.61 599.7,115.76 600.2,115.07 600.7,114.73 601.2,115.53 601.7,115.28 602.2,115.02 602.7,114.72 603.2,115.62 603.7,114.94 604.2,115.27 604.7,115.59 605.2,115.84 605.7,115.69 606.2,115.49 606.7,115.16 607.2,114.65 607.7,115.21 608.2,115.54 608.7,115.38 609.2,114.66 609.7,115.45 610.2,114.71 610.7,115.75 611.2,114.99 611.7,115.39 612.2,114.83 612.7,115.43 613.2,115.44 613.7,115.64 614.2,115.77 614.7,115.35 615.2,115.17 615.7,114.76 616.2,115.34 616.7,114.85 617.2,115.73 617.7,113.62 618.2,115.18 618.7,115.34 619.2,115.19 619.7,114.65 620.2,114.79 620.7,114.68 621.2,115.75 621.7,115.67 622.2,115.62 622.7,115.47 623.2,115.35 623.7,115.34 624.2,115.2 624.7,114.88 625.2,115.64 625.7,115.72 626.2,115.75 626.7,115.1 627.2,115.64 627.7,115.47 628.2,115.21 628.7,114.89 629.2,115.14 629.7,115.5 630.2,115.44 630.7,114.84 631.2,114.26 631.7,114.3 632.2,113.81 632.7,113.77 633.2,113.07 633.7,113.02 634.2,112.21 634.7,113.43 635.2,112.74 635.7,112.43 636.2,112.42 636.7,112.52 637.2,113.76 637.7,113.17 638.2,112.81 638.7,114.24 639.2,114.25 639.7,113.42 640.2,114.55 640.7,114.41 641.2,114.6 641.7,114.59 642.2,114.83 642.7,114.33 643.2,112.68 643.7,113.92 644.2,115.22 644.7,115.12 645.2,115.06 645.7,114.51 646.2,115.45 646.7,115.84 647,114.89 L647,161.57 646.7,161.23 646.2,161.1 645.7,161.41 645.2,162.07 644.7,161.74 644.2,161.33 643.7,161.86 643.2,161.06 642.7,162.09 642.2,161.8 641.7,162.19 641.2,161.22 640.7,162.44 640.2,161.9 639.7,161.71 639.2,161.72 638.7,161.79 638.2,162.78 637.7,163.28 637.2,163.33 636.7,162.65 636.2,163.67 635.7,163.25 635.2,163.28 634.7,162.52 634.2,163.91 633.7,162.45 633.2,162.83 632.7,163.11 632.2,163.1 631.7,162.08 631.2,162.41 630.7,161.72 630.2,160.99 629.7,162.03 629.2,161.54 628.7,161.31 628.2,161.63 627.7,162.04 627.2,161.5 626.7,161.78 626.2,161.54 625.7,163.72 625.2,161.7 624.7,161.29 624.2,161.62 623.7,161.71 623.2,162.1 622.7,161.54 622.2,162.07 621.7,161.56 621.2,161.34 620.7,161.66 620.2,160.92 619.7,161.87 619.2,161.16 618.7,161.6 618.2,161.4 617.7,161.98 617.2,161.34 616.7,161.81 616.2,161.73 615.7,161.37 615.2,163.74 614.7,161.6 614.2,161.08 613.7,162.01 613.2,161.2 612.7,160.78 612.2,160.79 611.7,161.89 611.2,161.82 610.7,162.86 610.2,161.99 609.7,160.8 609.2,161.2 608.7,161.81 608.2,161.84 607.7,161.8 607.2,160.93 606.7,161.36 606.2,161.98 605.7,161.07 605.2,161.81 604.7,161 604.2,162 603.7,160.9 603.2,160.95 602.7,161.2 602.2,161.01 601.7,161.14 601.2,161.35 600.7,161.15 600.2,161.48 599.7,162.21 599.2,161.11 598.7,161.29 598.2,160.93 597.7,161.41 597.2,161.29 596.7,160.74 596.2,162.82 595.7,161.63 595.2,162.32 594.7,161.4 594.2,160.85 593.7,161.92 593.2,160.93 592.7,161.65 592.2,160.89 591.7,160.92 591.2,161.24 590.7,161.51 590.2,161.59 589.7,160.7 589.2,160.93 588.7,161.79 588.2,160.97 587.7,161.18 587.2,160.97 586.7,161.16 586.2,161.12 585.7,163.02 585.2,161.67 584.7,161.75 584.2,160.74 583.7,162.68 583.2,161.68 582.7,161.19 582.2,160.74 581.7,161.38 581.2,161.68 580.7,160.6 580.2,161.62 579.7,161.03 579.2,161 578.7,161.29 578.2,160.61 577.7,161.68 577.2,161.58 576.7,160.7 576.2,161.11 575.7,161.08 575.2,161.15 574.7,160.64 574.2,161.74 573.7,160.86 573.2,161.71 572.7,160.52 572.2,161.09 571.7,161 571.2,161.06 570.7,160.73 570.2,161.74Z" fill="#ffff00"/>
<rect x="570.9" y="115.1" width="1.5" height="21.33" fill="#222200"/>
<rect x="571.8" y="142" width="1.5" height="19" fill="#ff99aa" opacity="0.8"/>
<rect x="574.1" y="115.1" width="1.4" height="21.33" fill="#222200"/>
<rect x="575" y="142" width="1.4" height="19" fill="#ff99aa" opacity="0.8"/>
<rect x="576.8" y="115.1" width="1.0" height="21.33" fill="#222200"/>
<rect x="577.7" y="142" width="1.0" height="19" fill="#ff99aa" opacity="0.8"/>
<path d="M647,113.97 647.5,115.23 648,115.32 648.5,115.68 649,115.06 649.5,115.32 650,115.64 650.5,115.07 651,115.48 651.5,115.67 652,114.82 652.5,115.27 653,114.81 653.5,115.19 654,115.43 654.5,115.64 655,114.91 655.5,115.08 656,113.99 656.5,115.66 657,115.61 657.5,115.47 658,114.91 658.5,115.27 659,115.27 659.5,114.93 660,115.43 660.5,115.63 661,114.84 661.5,115.58 662,115.66 662.5,114.93 663,114.87 663.5,115.22 664,115.17 664.5,114.97 665,115.26 665.5,115.45 666,115.56 666.5,114.9 667,115.53 667.5,115.69 668,115.03 668.5,115.15 669,114.8 669.5,115.2 670,114.82 670.5,115.08 671,115.29 671.5,115.15 672,115.48 672.5,115.16 673,114.87 673.5,115.21 674,115.14 674.5,115.04 675,115.38 675.5,115.05 676,115.5 676.5,115.44 677,115.15 677.5,115.07 678,115.53 678.5,115.61 679,114.85 679.5,114.83 680,115.31 680.5,115.58 681,115.07 681.5,115.37 682,114.26 682.5,114.8 683,115.29 683.5,115.54 684,115.19 684.5,115.49 685,115.04 685.5,115.18 686,115.09 686.5,115.07 687,115.48 687.5,114.95 688,114.88 688.5,115.3 689,115.01 689.5,114.9 690,115.24 690.5,115.68 691,115.19 691.5,114.82 692,115.14 692.5,114.8 693,115.01 693.5,115.2 694,115.45 694.5,115.2 695,115.22 695.5,115.34 696,115.34 696.5,115.64 697,115.33 697.5,115.67 698,115.35 698.5,114.67 699,115.18 699.5,115.26 700,115.16 700.5,115.5 701,115.65 701.5,115.6 702,115.06 702.5,115.45 703,115.09 703.5,114.91 704,115.36 704.5,115.43 705,115.07 705.5,114.9 706,113.68 706.5,115.66 707,115.02 707.5,115.33 708,115.01 708.5,115.2 709,115.35 709.5,115.05 710,115.17 710.5,115.61 711,115.66 711.5,115.63 712,115.64 712.5,115.65 713,115.38 713.5,115.21 714,115.21 714.5,115.05 715,115.44 715.5,115.53 716,114.9 716.5,115.11 717,115.13 717.5,115.4 718,115.18 718.5,115.29 719,115.6 719.5,115.24 720,115.57 720.5,115.03 721,114.95 721.5,114.84 722,115.63 722.5,115.08 723,115.42 723.5,115.07 724,114.93 724.5,115.52 725,115.16 725.5,115.27 726,115.52 726.5,115.63 727,115.26 727.5,115.23 728,115.16 728.5,115.02 729,115.04 729.5,115.49 730,115.06 730.5,115.37 731,114.98 731.5,115.57 732,114.81 732.5,115.25 733,115.05 733.5,115.21 734,115.7 734.5,115.41 735,114.87 735.5,115.46 736,115.54 736.5,115.14 737,114.95 737.5,115.67 738,115.32 738.5,115.59 739,114.87 739.5,115.56 740,115.3 740.5,115.26 741,115.04 741.5,114.94 742,115.58 742.5,115.15 743,115.3 743.5,114.89 744,114.84 744.5,115.09 745,115.11 745.5,115.05 746,114.99 746.5,115.45 747,115.58 747.5,114.81 748,115.65 748.5,114.91 749,114.85 749.5,115.5 750,115.37 750.5,114.97 751,115.63 751.5,114.89 752,114.91 752.5,115.58 753,115.27 753.5,115.04 754,114.42 754.5,113.88 755,115.7 755.5,115.06 756,115.13 756.5,115.5 757,115.42 757.5,114.98 758,115.03 758.5,115.04 759,114.98 759.5,115.33 760,115.69 760.4,115.64 L760.4,161.7 760,161.36 759.5,161.86 759,161.71 758.5,161.92 758,161.46 757.5,161.17 757,161.23 756.5,161.33 756,161.46 755.5,161.55 755,161.57 754.5,161.3 754,162.92 753.5,161.3 753,161.79 752.5,161.97 752,161.55 751.5,161.22 751,161.92 750.5,161.11 750,161.26 749.5,161.74 749,161.51 748.5,161.62 748,161.33 747.5,161.31 747,161.32 746.5,161.96 746,161.63 745.5,161.98 745,161.47 744.5,161.78 744,161.47 743.5,161.67 743,161.25 742.5,161.87 742,161.32 741.5,161.12 741,161.75 740.5,161.79 740,161.6 739.5,161.78 739,161.32 738.5,162.96 738,161.33 737.5,161.39 737,161.62 736.5,161.83 736,161.94 735.5,161.72 735,161.61 734.5,161.88 734,161.81 733.5,161.85 733,161.92 732.5,161.25 732,161.65 731.5,161.81 731,161.22 730.5,161.65 730,161.75 729.5,161.24 729,161.64 728.5,161.31 728,161.29 727.5,161.82 727,161.64 726.5,161.99 726,161.54 725.5,161.64 725,161.15 724.5,161.97 724,161.7 723.5,161.55 723,162.34 722.5,161.32 722,161.55 721.5,161.3 721,161.52 720.5,161.89 720,161.5 719.5,161.26 719,161.59 718.5,161.37 718,161.55 717.5,161.29 717,161.61 716.5,161.86 716,161.25 715.5,161.87 715,161.61 714.5,161.77 714,161.99 713.5,161.77 713,161.38 712.5,161.28 712,161.34 711.5,161.62 711,162.16 710.5,161.7 710,161.24 709.5,161.99 709,161.58 708.5,161.46 708,161.8 707.5,161.8 707,161.27 706.5,161.7 706,161.26 705.5,161.6 705,161.55 704.5,161.82 704,161.22 703.5,161.56 703,161.76 702.5,161.55 702,161.97 701.5,161.25 701,161.73 700.5,161.59 700,161.67 699.5,161.52 699,161.84 698.5,161.29 698,161.13 697.5,161.92 697,161.96 696.5,161.22 696,161.74 695.5,161.54 695,161.86 694.5,161.83 694,161.88 693.5,161.16 693,161.57 692.5,161.7 692,161.38 691.5,161.21 691,161.61 690.5,161.33 690,161.92 689.5,161.52 689,161.95 688.5,161.41 688,161.61 687.5,161.92 687,161.34 686.5,161.88 686,161.54 685.5,161.92 685,161.55 684.5,161.37 684,161.34 683.5,161.29 683,161.2 682.5,161.8 682,161.3 681.5,161.63 681,161.81 680.5,161.8 680,161.86 679.5,161.38 679,161.1 678.5,161.14 678,161.38 677.5,161.84 677,161.53 676.5,161.53 676,161.92 675.5,161.56 675,161.49 674.5,161.14 674,161.3 673.5,161.35 673,161.82 672.5,161.41 672,161.74 671.5,161.59 671,161.15 670.5,161.87 670,161.19 669.5,161.63 669,161.66 668.5,161.4 668,161.72 667.5,161.97 667,163.15 666.5,161.64 666,161.44 665.5,161.76 665,161.48 664.5,161.47 664,162.15 663.5,161.43 663,161.58 662.5,161.45 662,161.21 661.5,161.26 661,161.8 660.5,161.63 660,161.86 659.5,161.99 659,161.6 658.5,161.48 658,161.59 657.5,161.67 657,161.99 656.5,161.71 656,161.54 655.5,161.93 655,161.42 654.5,161.26 654,161.88 653.5,162.22 653,162.29 652.5,161.14 652,161.58 651.5,161.57 651,161.46 650.5,161.88 650,161.58 649.5,161.75 649,161.29 648.5,161.62 648,161.63 647.5,161.8 647,161.4Z" fill="#808000"/>
</g>
<rect x="562.7" y="102.5" width="198.2" height="72" rx="1.5" fill="none" stroke="#4e4e4e" stroke-width="1.1"/>
<text transform="translate(560.4,110.8) scale(0.905,1)" fill="#e8e800" font-size="8.8" text-anchor="end" font-weight="normal"  stroke="#1c0606" stroke-width="1.1" paint-order="stroke" stroke-linejoin="round">32 V</text>
<text transform="translate(560.4,142.2) scale(0.905,1)" fill="#e8e800" font-size="8.8" text-anchor="end" font-weight="normal"  stroke="#1c0606" stroke-width="1.1" paint-order="stroke" stroke-linejoin="round">0 mV</text>
<text transform="translate(560.4,172.9) scale(0.905,1)" fill="#e8e800" font-size="8.8" text-anchor="end" font-weight="normal"  stroke="#1c0606" stroke-width="1.1" paint-order="stroke" stroke-linejoin="round">-32 V</text>
<text transform="translate(563.3,184.1) scale(0.905,1)" fill="#e8e800" font-size="8.8" text-anchor="start" font-weight="normal"  stroke="#1c0606" stroke-width="1.1" paint-order="stroke" stroke-linejoin="round">-80 ms</text>
<text transform="translate(661.8,184.1) scale(0.905,1)" fill="#e8e800" font-size="8.8" text-anchor="middle" font-weight="normal"  stroke="#1c0606" stroke-width="1.1" paint-order="stroke" stroke-linejoin="round">920 ms</text>
<text transform="translate(760.9,184.1) scale(0.905,1)" fill="#e8e800" font-size="8.8" text-anchor="end" font-weight="normal"  stroke="#1c0606" stroke-width="1.1" paint-order="stroke" stroke-linejoin="round">1.92 s</text>
<path d="M570.7,175.3 l2.2,4.4 h-4.4z" fill="#e8e800"/>
<path d="M551.9,131 h10.6 v7.4 l-2.2,0 l-1.2,1.4 l-0.6,-1.4 h-6.6z" fill="#f0f000"/>
<text x="557.1" y="136.8" fill="#5a5a00" font-size="5.2" text-anchor="middle" font-weight="normal" opacity="0.85">C1</text>
<rect x="814.4" y="102.5" width="198.2" height="72" fill="#000"/>
<line x1="834.22" y1="102.5" x2="834.22" y2="174.5" stroke="#323232" stroke-width="0.8"/>
<line x1="854.04" y1="102.5" x2="854.04" y2="174.5" stroke="#323232" stroke-width="0.8"/>
<line x1="873.86" y1="102.5" x2="873.86" y2="174.5" stroke="#323232" stroke-width="0.8"/>
<line x1="893.68" y1="102.5" x2="893.68" y2="174.5" stroke="#323232" stroke-width="0.8"/>
<line x1="913.5" y1="102.5" x2="913.5" y2="174.5" stroke="#4c4c4c" stroke-width="0.8"/>
<line x1="933.32" y1="102.5" x2="933.32" y2="174.5" stroke="#323232" stroke-width="0.8"/>
<line x1="953.14" y1="102.5" x2="953.14" y2="174.5" stroke="#323232" stroke-width="0.8"/>
<line x1="972.96" y1="102.5" x2="972.96" y2="174.5" stroke="#323232" stroke-width="0.8"/>
<line x1="992.78" y1="102.5" x2="992.78" y2="174.5" stroke="#323232" stroke-width="0.8"/>
<line x1="814.4" y1="111.5" x2="1012.6" y2="111.5" stroke="#323232" stroke-width="0.8"/>
<line x1="814.4" y1="120.5" x2="1012.6" y2="120.5" stroke="#323232" stroke-width="0.8"/>
<line x1="814.4" y1="129.5" x2="1012.6" y2="129.5" stroke="#323232" stroke-width="0.8"/>
<line x1="814.4" y1="138.5" x2="1012.6" y2="138.5" stroke="#4c4c4c" stroke-width="0.8"/>
<line x1="814.4" y1="147.5" x2="1012.6" y2="147.5" stroke="#323232" stroke-width="0.8"/>
<line x1="814.4" y1="156.5" x2="1012.6" y2="156.5" stroke="#323232" stroke-width="0.8"/>
<line x1="814.4" y1="165.5" x2="1012.6" y2="165.5" stroke="#323232" stroke-width="0.8"/>
<line x1="814.4" y1="138.5" x2="1012.6" y2="138.5" stroke="#8a8a8a" stroke-width="1.6" stroke-dasharray="0.9 3.06" stroke-dashoffset="0.45"/>
<line x1="814.4" y1="116" x2="1012.6" y2="116" stroke="#7a7a7a" stroke-width="0.7" stroke-dasharray="0.8 3.16" stroke-dashoffset="0.4"/>
<line x1="814.4" y1="161" x2="1012.6" y2="161" stroke="#7a7a7a" stroke-width="0.7" stroke-dasharray="0.8 3.16" stroke-dashoffset="0.4"/>
<g clip-path="url(#c30)">
<clipPath id="c30"><rect x="814.4" y="102.5" width="198.2" height="72"/></clipPath>
<path d="M816.9,115.54 817.4,115.47 817.9,114.66 818.4,114.43 818.9,115.05 819.4,115.57 819.9,114.23 820.4,115.46 820.9,115.62 821.4,115.23 821.9,114.37 822.4,114.94 822.9,114.66 823.4,115.15 823.9,115.55 824.4,114.68 824.9,115.42 825.4,114.41 825.9,115.79 826.4,115.45 826.9,114.75 827.4,114.63 827.9,115.69 828.4,114.81 828.9,113.62 829.4,114.4 829.9,114.72 830.4,114.55 830.9,114.89 831.4,114.82 831.9,114.78 832.4,114.68 832.9,114.41 833.4,115.36 833.9,115.53 834.4,115.73 834.9,115.15 835.4,114.97 835.9,112.95 836.4,115.3 836.9,115.78 837.4,115.68 837.9,114.7 838.4,115.55 838.9,115.55 839.4,114.82 839.9,114.73 840.4,114.29 840.9,115.18 841.4,114.25 841.9,115.54 842.4,114.31 842.9,114.8 843.4,115.31 843.9,114.89 844.4,114.74 844.9,115.33 845.4,115.39 845.9,115.69 846.4,114.59 846.9,115.47 847.4,114.63 847.9,115.08 848.4,115.68 848.9,114.86 849.4,115.62 849.9,114.93 850.4,114.85 850.9,115.69 851.4,114.61 851.9,115.24 852.4,114.35 852.9,115.42 853.4,115.02 853.9,115.24 854.4,115.58 854.9,115.54 855.4,114.52 855.9,114.88 856.4,115.15 856.9,114.54 857.4,115.38 857.9,114.51 858.4,115.07 858.9,114.96 859.4,114.67 859.9,113.54 860.4,115.75 860.9,115.78 861.4,115.46 861.9,115.22 862.4,114.3 862.9,114.5 863.4,114.87 863.9,114.99 864.4,115.26 864.9,115.66 865.4,114.47 865.9,114.37 866.4,114.21 866.9,115.12 867.4,115.37 867.9,114.37 868.4,114.81 868.9,114.27 869.4,114.75 869.9,115.54 870.4,115.77 870.9,114.38 871.4,115.24 871.9,114.93 872.4,114.93 872.9,114.67 873.4,114.96 873.9,115.74 874.4,115 874.9,114.86 875.4,115.27 875.9,115.24 876.4,114.85 876.9,115.17 877.4,115.2 877.9,115.47 878.4,115.55 878.9,114.53 879.4,115.73 879.9,114.71 880.4,114.33 880.9,115.08 881.4,115.53 881.9,115.72 882.4,114.28 882.9,113.5 883.4,114.51 883.9,113.13 884.4,115.18 884.9,115.09 885.4,113.63 885.9,115.47 886.4,115.07 886.9,114.27 887.4,114.52 887.9,115.33 888.4,115.21 888.9,115.3 889.4,115.75 889.9,114.71 890.4,114.22 890.9,115.78 891.4,115.47 891.9,114.32 892.4,115.11 892.9,114.21 893.4,114.9 893.9,114.73 894.4,115.01 894.9,113.05 895.4,114.46 895.9,114.73 896.4,114.26 896.9,115.32 897.4,115.31 897.9,114.57 898.4,114.21 898.9,115.12 899.4,114.73 899.9,114.24 900.4,115.46 900.9,115.05 901.4,115.01 901.9,114.48 902.4,114.23 902.9,114.95 903.4,115.6 903.9,114.96 904.4,114.22 904.9,114.21 905.4,114.34 905.9,114.41 906.4,113.56 906.9,114.3 907.4,114.66 907.9,115.3 908.4,115.6 908.9,114.99 909.4,114.24 909.9,115.57 910.4,114.25 910.9,115.13 911.4,114.97 911.9,115.79 912.4,115.58 912.9,115.01 913.4,114.62 913.9,115.71 914.4,115.47 914.9,115.42 915.4,114.31 915.9,115.14 916.4,114.42 916.9,115.67 917.4,114.64 917.9,115.74 918.4,115.32 918.9,114.47 919.4,115.76 919.9,115.36 920.4,115.6 920.9,114.54 921.4,114.95 921.9,113.28 922.4,114.42 922.9,115.05 923.4,114.3 923.9,115.47 924.4,115.37 924.9,115.53 925.4,115.13 925.9,115.09 926.4,115.03 926.9,112.61 927.4,115.4 927.9,115.28 928.4,114.37 928.9,114.81 929.4,115.04 929.9,115.53 930.4,115.52 930.9,115.44 931.4,115.63 931.9,114.74 932.4,114.77 932.9,114.29 933.4,115.48 933.9,115.37 934.4,114.8 934.9,115.47 935.4,114.26 935.9,115.01 936.4,114.29 936.9,113.93 937.4,115.04 937.9,114.74 938.4,115.7 938.9,115 939.4,114.41 939.9,114.86 940.4,112.09 940.9,114.99 941.4,115.54 941.9,114.78 942.4,115.71 942.9,115.33 943.4,115.47 943.9,114.46 944.4,114.59 944.9,114.36 945.4,115.49 945.9,113.95 946.4,115.01 946.9,114.98 947.4,114.55 947.9,115.18 948.4,114.24 948.9,115.44 949.4,114.7 949.9,115.1 950.4,114.66 950.9,115.07 951.4,115.35 951.9,115.36 952.4,113.91 952.9,115.44 953.4,114.29 953.9,114.32 954.4,114.87 954.9,114.48 955.4,115.19 955.9,115.76 956.4,114.58 956.9,114.91 957.4,115.38 957.9,114.87 958.4,115.69 958.9,115.49 959.4,114.62 959.9,115.28 960.4,114.57 960.9,115.26 961.4,115.46 961.9,115.33 962.4,114.31 962.9,114.64 963.4,113.92 963.9,114.57 964.4,114.85 964.9,114.95 965.4,114.02 965.9,114.26 966.4,114.84 966.9,114.71 967.4,115.06 967.9,114.16 968.4,114.81 968.9,115.25 969.4,115.13 969.9,113.95 970.4,114.37 970.9,114.13 971.4,115.16 971.9,114.46 972.4,114.55 972.9,115.12 973.4,113.78 973.9,114.06 974.4,112.43 974.9,113.98 975.4,115.1 975.9,115.1 976.4,114.78 976.9,114.97 977.4,115.09 977.9,113.89 978.4,114.49 978.9,113.88 979.4,115.1 979.9,114.72 980.4,114.03 980.9,114.32 981.4,111.68 981.9,115.01 982.4,114.99 982.9,114 983.4,115.12 983.9,113.36 984.4,115.14 984.9,114.8 985.4,114.86 985.9,114.93 986.4,115.12 986.9,114.35 987.4,114.46 987.9,113.86 988.4,114.85 988.9,115.41 989.4,114.86 989.9,114.34 990.4,114.99 990.9,115.16 991.4,113.88 991.9,115.44 992.4,115.04 992.9,114.17 993.4,115.3 993.9,114.69 994.4,115.13 994.9,114.63 995.4,114.27 995.9,115.03 996.4,115.26 996.9,114.01 997.4,114.46 997.9,114.71 998.4,114.9 998.9,115.24 999.4,114.12 999.9,114.75 1000.4,115.29 1000.9,114.98 1001.4,114.45 1001.9,115.2 1002.4,114.82 1002.9,114.61 1003.4,114.03 1003.9,114.51 1004.4,115.16 1004.9,115.24 1005.4,115.23 1005.9,114.34 1006.4,115.53 1006.9,114.56 1007.4,114.52 1007.9,114.49 1008.4,114.57 1008.9,114.67 1009.4,114.37 1009.9,115.65 1010.4,114.62 1010.9,114.89 1011.4,114.82 1011.9,114.48 1012.2,115.55 L1012.2,162.43 1011.9,162.76 1011.4,162.35 1010.9,162.31 1010.4,161.9 1009.9,162.75 1009.4,162.86 1008.9,162.38 1008.4,161.9 1007.9,163.18 1007.4,163.04 1006.9,162.57 1006.4,162.47 1005.9,162.47 1005.4,163 1004.9,162.61 1004.4,164.07 1003.9,163.2 1003.4,162.95 1002.9,162.88 1002.4,162.47 1001.9,163.73 1001.4,162.56 1000.9,163.71 1000.4,164.03 999.9,163.56 999.4,163.94 998.9,163.34 998.4,163.95 997.9,162.74 997.4,163.18 996.9,163.16 996.4,163.69 995.9,163.81 995.4,164.06 994.9,166.05 994.4,164.37 993.9,164.01 993.4,163.69 992.9,163.11 992.4,164.43 991.9,164.12 991.4,164.11 990.9,163.18 990.4,164.24 989.9,164.02 989.4,163.91 988.9,164.53 988.4,163.31 987.9,164.21 987.4,164.01 986.9,164.03 986.4,163.17 985.9,163.93 985.4,163.49 984.9,163.4 984.4,164.33 983.9,164.63 983.4,163.62 982.9,164.19 982.4,163.67 981.9,163.57 981.4,164.14 980.9,163.58 980.4,164.75 979.9,163.42 979.4,163.46 978.9,164.43 978.4,164.33 977.9,164.54 977.4,164.42 976.9,163.4 976.4,163.71 975.9,163.54 975.4,164.6 974.9,164.65 974.4,165.7 973.9,163.36 973.4,164.29 972.9,165.3 972.4,163.44 971.9,164.2 971.4,165.92 970.9,164.11 970.4,163.22 969.9,164.17 969.4,164.01 968.9,163.94 968.4,162.92 967.9,163.69 967.4,163.06 966.9,163.75 966.4,163.13 965.9,163.48 965.4,163.61 964.9,162.17 964.4,162.21 963.9,162.42 963.4,161.82 962.9,162.58 962.4,163.08 961.9,162.73 961.4,162.69 960.9,161.66 960.4,161.59 959.9,163.28 959.4,161.6 958.9,161.58 958.4,161.73 957.9,163.61 957.4,161.87 956.9,162.51 956.4,162.62 955.9,164.64 955.4,162 954.9,162.38 954.4,161.4 953.9,162.1 953.4,162.06 952.9,162.2 952.4,162.28 951.9,161.62 951.4,162.31 950.9,163.31 950.4,161.37 949.9,162.08 949.4,162.6 948.9,162.23 948.4,162.49 947.9,161.47 947.4,162.07 946.9,162.8 946.4,161.5 945.9,162.39 945.4,161.89 944.9,161.56 944.4,162.01 943.9,163.7 943.4,161.37 942.9,162.19 942.4,161.88 941.9,161.86 941.4,161.52 940.9,162.36 940.4,162.42 939.9,162.45 939.4,161.39 938.9,162.04 938.4,161.64 937.9,162.15 937.4,161.56 936.9,162.52 936.4,162.04 935.9,161.41 935.4,161.54 934.9,162.23 934.4,162.08 933.9,162.23 933.4,162.07 932.9,162.28 932.4,161.92 931.9,161.48 931.4,162.24 930.9,161.78 930.4,162.75 929.9,162.55 929.4,162.7 928.9,161.68 928.4,162.36 927.9,161.35 927.4,161.34 926.9,162.27 926.4,162.6 925.9,162.34 925.4,162.4 924.9,162.06 924.4,162.8 923.9,162.61 923.4,161.45 922.9,161.36 922.4,162.77 921.9,161.53 921.4,162.43 920.9,161.52 920.4,162.28 919.9,161.48 919.4,162.14 918.9,161.8 918.4,161.3 917.9,161.34 917.4,162.21 916.9,162 916.4,162.43 915.9,162.27 915.4,161.66 914.9,161.89 914.4,161.57 913.9,162.27 913.4,162.08 912.9,161.46 912.4,162.41 911.9,162.47 911.4,161.31 910.9,162.41 910.4,162.24 909.9,161.85 909.4,162.48 908.9,161.66 908.4,161.78 907.9,162.68 907.4,161.66 906.9,162.36 906.4,161.4 905.9,162.33 905.4,162.09 904.9,162.34 904.4,162.01 903.9,163.46 903.4,161.51 902.9,162.5 902.4,163.52 901.9,161.33 901.4,161.27 900.9,164.04 900.4,161.92 899.9,162.33 899.4,162.54 898.9,162.36 898.4,162.07 897.9,162.08 897.4,161.89 896.9,161.82 896.4,162.35 895.9,162.03 895.4,162.59 894.9,162.26 894.4,161.89 893.9,161.61 893.4,161.86 892.9,161.66 892.4,162.01 891.9,161.54 891.4,161.69 890.9,162.43 890.4,161.29 889.9,162.5 889.4,162.36 888.9,162.22 888.4,162.79 887.9,161.49 887.4,162.23 886.9,163.31 886.4,162.15 885.9,162.6 885.4,164.19 884.9,162.18 884.4,162.28 883.9,162.28 883.4,162.54 882.9,161.95 882.4,161.39 881.9,162.39 881.4,161.25 880.9,161.76 880.4,162.23 879.9,163.28 879.4,162.72 878.9,162.57 878.4,161.57 877.9,162.62 877.4,162.75 876.9,161.51 876.4,163.1 875.9,162.44 875.4,161.79 874.9,161.23 874.4,163.35 873.9,161.64 873.4,163.28 872.9,162.11 872.4,162.12 871.9,161.74 871.4,161.42 870.9,161.38 870.4,162.11 869.9,161.95 869.4,162.05 868.9,162 868.4,161.29 867.9,162.76 867.4,162.6 866.9,162.07 866.4,161.92 865.9,161.92 865.4,162.33 864.9,162.46 864.4,161.33 863.9,161.36 863.4,162.31 862.9,161.81 862.4,162.03 861.9,161.41 861.4,161.61 860.9,161.9 860.4,162.28 859.9,161.44 859.4,161.57 858.9,161.29 858.4,162.56 857.9,162.59 857.4,162.39 856.9,161.99 856.4,161.55 855.9,161.96 855.4,162.42 854.9,161.96 854.4,161.68 853.9,161.75 853.4,162.55 852.9,161.29 852.4,161.17 851.9,162.28 851.4,161.4 850.9,162.26 850.4,161.68 849.9,162.73 849.4,162.33 848.9,161.28 848.4,161.55 847.9,161.61 847.4,161.24 846.9,162.11 846.4,162.59 845.9,161.71 845.4,162.05 844.9,163.15 844.4,161.85 843.9,161.98 843.4,161.83 842.9,161.44 842.4,161.52 841.9,161.84 841.4,162.19 840.9,162.52 840.4,162.67 839.9,161.91 839.4,161.61 838.9,163.12 838.4,162.57 837.9,162.61 837.4,162.1 836.9,162.54 836.4,161.73 835.9,161.29 835.4,163.72 834.9,162.11 834.4,161.2 833.9,162.37 833.4,162.3 832.9,162.04 832.4,162.41 831.9,162.69 831.4,161.5 830.9,161.41 830.4,161.37 829.9,162.39 829.4,161.67 828.9,162.91 828.4,161.66 827.9,161.32 827.4,161.48 826.9,161.86 826.4,161.23 825.9,161.51 825.4,161.48 824.9,161.25 824.4,162.45 823.9,161.28 823.4,162.05 822.9,161.93 822.4,162.21 821.9,161.96 821.4,161.31 820.9,162.47 820.4,161.35 819.9,162.77 819.4,161.82 818.9,162.62 818.4,161.41 817.9,161.61 817.4,161.59 816.9,161.22Z" fill="#ff77cc"/>
<path d="M814.9,137.05 815.4,136.47 815.9,136.21 816.4,125.52 816.9,114.7 817.4,115.19 817.9,114.83 818.4,115.07 818.9,114.93 819.4,115.22 819.9,115.76 820.4,115.55 820.9,115.76 821.4,114.75 821.9,115.79 822.4,112.89 822.9,115.75 823.4,114.76 823.9,115.52 824.4,115.04 824.9,114.9 825.4,115.59 825.9,114.82 826.4,115.33 826.9,114.99 827.4,115.48 827.9,115.68 828.4,115.09 828.9,115.14 829.4,114.61 829.9,114.79 830.4,114.93 830.9,113.99 831.4,114.82 831.9,114.98 832.4,115.16 832.9,115.75 833.4,115.67 833.9,115.7 834.4,115.47 834.9,114.68 835.4,114.76 835.9,114.74 836.4,115.65 836.9,115.12 837.4,114.71 837.9,115.28 838.4,115.08 838.9,114.96 839.4,115.15 839.9,114.96 840.4,115.37 840.9,115.02 841.4,115.07 841.9,115.71 842.4,115.71 842.9,115.52 843.4,115.14 843.9,115.01 844.4,115.33 844.9,115.29 845.4,114.74 845.9,114.64 846.4,114.85 846.9,115.07 847.4,115.45 847.9,113.34 848.4,115.44 848.9,115.14 849.4,115.3 849.9,115.72 850.4,115.26 850.9,115.46 851.4,115.08 851.9,115.15 852.4,115.17 852.9,115.36 853.4,115.03 853.9,114.96 854.4,114.66 854.9,115.53 855.4,115.15 855.9,115.72 856.4,115.47 856.9,115.21 857.4,115.52 857.9,114.6 858.4,115.42 858.9,114.86 859.4,115.27 859.9,115.3 860.4,114.73 860.9,114.71 861.4,114.81 861.9,115.43 862.4,114.65 862.9,115.52 863.4,115.43 863.9,115.54 864.4,114.89 864.9,115.39 865.4,115.02 865.9,115.8 866.4,115.26 866.9,114.75 867.4,115.38 867.9,114.86 868.4,115.08 868.9,115.34 869.4,115.62 869.9,115.6 870.4,114.74 870.9,115.37 871.4,115.45 871.9,115.67 872.4,115.35 872.9,114.64 873.4,114.81 873.9,115.77 874.4,115.04 874.9,114.77 875.4,115.43 875.9,115.51 876.4,114.66 876.9,115.24 877.4,115.58 877.9,115.59 878.4,115.77 878.9,114.62 879.4,114.87 879.9,114.73 880.4,115.42 880.9,114.6 881.4,115.47 881.9,115.37 882.4,115.14 882.9,114.64 883.4,115.33 883.9,114.73 884.4,115.45 884.9,115.67 885.4,115.55 885.9,114.71 886.4,115.37 886.9,114.92 887.4,114.99 887.9,115.08 888.4,115.34 888.9,115.42 889.4,114.71 889.9,114.74 890.4,115.18 890.9,115.4 891.4,115.7 891.9,114.81 892.4,115.65 892.9,115.29 893.4,115.37 893.9,115.22 894.4,115.79 894.9,114.61 895.4,114.78 895.9,115.74 896.4,114.72 896.9,115.24 897.4,115.77 897.9,115.19 898.4,114.83 898.9,114.61 899.4,114.92 899.9,114.84 900.4,115.53 900.9,114.92 901.4,114.75 901.9,115.76 902.4,115.68 902.9,114.96 903.4,115.35 903.9,115.54 904.4,114.62 904.9,115.77 905.4,114.96 905.9,115.09 906.4,115.65 906.9,114.71 907.4,115.01 907.9,115.42 908.4,114.85 908.9,115.03 909.4,115.07 909.9,115.42 910.4,115.52 910.9,114.97 911.4,115.59 911.9,114.98 912.4,115.01 912.9,115.09 913.4,115.41 913.9,115.53 914.4,115.08 914.9,113.78 915.4,114.8 915.9,114.99 916.4,114.94 916.9,114.95 917.4,113.62 917.9,114.64 918.4,115.09 918.9,114.63 919.4,115.06 919.9,114.94 920.4,114.89 920.9,113.05 921.4,114.84 921.9,114.86 922.4,115.07 922.9,115.14 923.4,114.69 923.9,115.43 924.4,114.89 924.9,115.62 925.4,115.01 925.9,114.86 926.4,115.43 926.9,114.95 927.4,115.78 927.9,115.41 928.4,115.61 928.9,115.59 929.4,115.27 929.9,114.91 930.4,115.65 930.9,115.66 931.4,114.73 931.9,114.91 932.4,115.71 932.9,115.22 933.4,115.4 933.9,114.74 934.4,115.61 934.9,114.96 935.4,114.8 935.9,115.04 936.4,114.82 936.9,114.84 937.4,114.73 937.9,115.01 938.4,115.32 938.9,115.44 939.4,115.36 939.9,114.67 940.4,114.7 940.9,114.73 941.4,115.33 941.9,114.77 942.4,115.75 942.9,115.63 943.4,115.13 943.9,114.73 944.4,115.73 944.9,114.82 945.4,115.49 945.9,115.46 946.4,114.62 946.9,114.97 947.4,115.25 947.9,114.88 948.4,114.73 948.9,115.21 949.4,115.55 949.9,114.95 950.4,114.92 950.9,115.31 951.4,115.05 951.9,115.01 952.4,115.72 952.9,115.76 953.4,115.2 953.9,114.8 954.4,115.53 954.9,115.37 955.4,115.46 955.9,114.62 956.4,114.77 956.9,115.1 957.4,114.68 957.9,115.34 958.4,115.45 958.9,114.97 959.4,115.16 959.9,115.24 960.4,114.58 960.9,114.61 961.4,115.36 961.9,115.73 962.4,115.1 962.9,115.1 963.4,113.2 963.9,115.4 964.4,115.28 964.9,115.25 965.4,115.78 965.9,114.95 966.4,115.47 966.9,115.3 967.4,114.68 967.9,114.89 968.4,115.7 968.9,114.84 969.4,114.77 969.9,114.81 970.4,112.56 970.9,114.86 971.4,111.81 971.9,114.61 972.4,114.72 972.9,113.89 973.4,113.85 973.9,113.37 974.4,113.64 974.9,112.69 975.4,112.58 975.9,112.69 976.4,113.28 976.9,111.25 977.4,113.48 977.9,112.66 978.4,113.54 978.9,113.18 979.4,113.3 979.9,113.74 980.4,113.44 980.9,113.74 981.4,113.44 981.9,113.25 982.4,113.23 982.9,113.98 983.4,113.98 983.9,113.54 984.4,113.98 984.9,114.05 985.4,113.4 985.9,113.58 986.4,113.88 986.9,114.12 987.4,114.33 987.9,114.43 988.4,113.46 988.9,114.02 989.4,112.57 989.9,114.3 990.4,114.63 990.9,114.64 991.4,113.74 991.9,113.85 992.4,114.5 992.9,113.79 993.4,112.06 993.9,114.55 994.4,114.23 994.9,114.11 995.4,114.83 995.9,114.57 996.4,114.96 996.9,114.96 997.4,114.28 997.9,115.15 998.4,115.25 998.9,114.21 999.4,114.31 999.9,114.53 1000.4,114.32 1000.9,114.7 1001.4,115.35 1001.9,115.19 1002.4,115.25 1002.9,114.47 1003.4,114.59 1003.9,114.38 1004.4,115.13 1004.9,114.31 1005.4,115.08 1005.9,114.06 1006.4,115.34 1006.9,115.01 1007.4,114.57 1007.9,115.16 1008.4,113.94 1008.9,114.8 1009.4,114.57 1009.9,115.04 1010.4,115.26 1010.9,115.12 1011.4,114.39 1011.9,115.26 1012.2,115.52 L1012.2,161.47 1011.9,160.89 1011.4,161.4 1010.9,160.89 1010.4,161.53 1009.9,161.15 1009.4,161.21 1008.9,161.19 1008.4,161.05 1007.9,161.13 1007.4,161.23 1006.9,160.87 1006.4,161.28 1005.9,161.21 1005.4,160.97 1004.9,161.25 1004.4,161.59 1003.9,161.34 1003.4,161.4 1002.9,161.58 1002.4,160.91 1001.9,161.19 1001.4,161.21 1000.9,161.37 1000.4,161.12 999.9,161.32 999.4,161.56 998.9,160.86 998.4,160.83 997.9,161.33 997.4,161.15 996.9,161.59 996.4,161.37 995.9,160.91 995.4,161.25 994.9,160.9 994.4,161.04 993.9,161.57 993.4,161.06 992.9,161.49 992.4,161.22 991.9,161.18 991.4,161.09 990.9,161.58 990.4,162.51 989.9,161.35 989.4,161.45 988.9,160.81 988.4,161.5 987.9,161.54 987.4,161.27 986.9,161.15 986.4,161.52 985.9,160.91 985.4,161.45 984.9,160.87 984.4,160.83 983.9,161.48 983.4,160.87 982.9,162.63 982.4,161.07 981.9,162.1 981.4,161.26 980.9,161.45 980.4,161.57 979.9,160.89 979.4,161.42 978.9,161.42 978.4,161.24 977.9,161.25 977.4,161.52 976.9,161.34 976.4,161.57 975.9,161.49 975.4,161.2 974.9,161.1 974.4,161.27 973.9,162.88 973.4,160.95 972.9,161.06 972.4,161.26 971.9,161.5 971.4,161 970.9,160.81 970.4,161.38 969.9,161.57 969.4,161.09 968.9,160.86 968.4,161.19 967.9,161.18 967.4,161.11 966.9,160.9 966.4,160.84 965.9,161.28 965.4,161.11 964.9,160.88 964.4,161.58 963.9,160.83 963.4,161.29 962.9,161.34 962.4,161.51 961.9,161.24 961.4,161.2 960.9,161.47 960.4,161.51 959.9,160.96 959.4,161.33 958.9,161.1 958.4,160.97 957.9,160.84 957.4,161.49 956.9,160.96 956.4,160.82 955.9,161.22 955.4,161.13 954.9,161.05 954.4,161.34 953.9,160.91 953.4,160.95 952.9,160.87 952.4,163.85 951.9,161.11 951.4,161.6 950.9,161.13 950.4,161.59 949.9,161.19 949.4,160.97 948.9,161.42 948.4,161.2 947.9,161.46 947.4,161.49 946.9,160.98 946.4,161.36 945.9,161.34 945.4,161.37 944.9,161.46 944.4,161.07 943.9,161.13 943.4,161.32 942.9,160.91 942.4,161.36 941.9,161.51 941.4,161.34 940.9,161.42 940.4,161.33 939.9,161.06 939.4,160.87 938.9,161.53 938.4,160.81 937.9,160.97 937.4,161.57 936.9,161.22 936.4,160.94 935.9,160.85 935.4,161.5 934.9,161.05 934.4,161.27 933.9,160.83 933.4,161.3 932.9,160.9 932.4,161.54 931.9,161.34 931.4,161.16 930.9,161.11 930.4,161.46 929.9,161.44 929.4,161.36 928.9,161.13 928.4,161.5 927.9,161.02 927.4,161.58 926.9,161.57 926.4,160.83 925.9,161.29 925.4,161.48 924.9,161.42 924.4,161.04 923.9,161.17 923.4,160.83 922.9,161.54 922.4,160.84 921.9,161.29 921.4,161.31 920.9,161.08 920.4,160.84 919.9,161.1 919.4,161.58 918.9,161.47 918.4,161.59 917.9,163.85 917.4,161.08 916.9,161.22 916.4,161.32 915.9,161.07 915.4,161.23 914.9,161.04 914.4,160.92 913.9,160.98 913.4,160.94 912.9,161.33 912.4,160.99 911.9,161.09 911.4,163.56 910.9,161.54 910.4,161.84 909.9,161.57 909.4,161.27 908.9,161.41 908.4,161.33 907.9,160.9 907.4,161.02 906.9,161.04 906.4,161.25 905.9,160.98 905.4,161.03 904.9,161.57 904.4,160.82 903.9,161.53 903.4,161 902.9,161.34 902.4,161.11 901.9,161.13 901.4,160.81 900.9,162.86 900.4,161.44 899.9,160.97 899.4,161.32 898.9,161.25 898.4,161.53 897.9,161.07 897.4,161.07 896.9,161.14 896.4,161.24 895.9,161.58 895.4,161.08 894.9,161.35 894.4,160.9 893.9,160.97 893.4,161.6 892.9,160.91 892.4,161.33 891.9,161.4 891.4,161.53 890.9,161.53 890.4,160.93 889.9,161.09 889.4,161.36 888.9,161.46 888.4,161.21 887.9,160.9 887.4,161.32 886.9,161.5 886.4,160.81 885.9,161.35 885.4,160.91 884.9,160.86 884.4,161.34 883.9,161.29 883.4,161.4 882.9,161.33 882.4,161.54 881.9,161.06 881.4,161.25 880.9,161.34 880.4,161.05 879.9,160.85 879.4,160.91 878.9,161.29 878.4,161.12 877.9,161 877.4,160.87 876.9,160.95 876.4,161.11 875.9,160.94 875.4,161.16 874.9,160.94 874.4,161.42 873.9,161.48 873.4,161.54 872.9,161.03 872.4,161.52 871.9,161.03 871.4,161.51 870.9,160.83 870.4,161.53 869.9,161.34 869.4,161.32 868.9,160.94 868.4,160.95 867.9,161.3 867.4,161.56 866.9,161.09 866.4,161.51 865.9,161.43 865.4,161.48 864.9,161 864.4,160.8 863.9,161 863.4,161.08 862.9,161.3 862.4,161.08 861.9,160.98 861.4,162.64 860.9,160.95 860.4,161.21 859.9,161.24 859.4,161.23 858.9,160.86 858.4,161.13 857.9,161.27 857.4,161.39 856.9,161.28 856.4,161.39 855.9,161.2 855.4,160.87 854.9,161.56 854.4,161.33 853.9,161.12 853.4,160.8 852.9,161.14 852.4,161.13 851.9,161.29 851.4,160.92 850.9,160.86 850.4,161.5 849.9,161.48 849.4,160.89 848.9,161.51 848.4,161.12 847.9,161.49 847.4,161.05 846.9,161.18 846.4,161.3 845.9,161.47 845.4,161.56 844.9,161.22 844.4,161.5 843.9,161.5 843.4,161.47 842.9,160.97 842.4,161.34 841.9,161.16 841.4,161.37 840.9,161.48 840.4,160.83 839.9,161.14 839.4,161.31 838.9,161.46 838.4,160.92 837.9,161.2 837.4,161.37 836.9,161.44 836.4,160.86 835.9,161.51 835.4,161.26 834.9,160.88 834.4,162.44 833.9,160.97 833.4,161.06 832.9,160.85 832.4,161.39 831.9,161.25 831.4,160.88 830.9,161.12 830.4,160.92 829.9,161.53 829.4,160.95 828.9,160.89 828.4,161.14 827.9,161.37 827.4,161.37 826.9,161.06 826.4,160.88 825.9,161.19 825.4,161.53 824.9,161.35 824.4,161.22 823.9,161 823.4,160.85 822.9,161.08 822.4,161.12 821.9,161.48 821.4,161.03 820.9,161.49 820.4,161.53 819.9,160.85 819.4,161.11 818.9,161.49 818.4,160.92 817.9,161.23 817.4,161.21 816.9,161.37 816.4,161.35 815.9,161.14 815.4,161.23 814.9,160.89Z" fill="#ffff00"/>
<rect x="817.8" y="116.21" width="1.36" height="18.91" fill="#1a1a00"/>
<rect x="821.33" y="116.96" width="1.31" height="18.91" fill="#1a1a00"/>
<rect x="824.78" y="115.94" width="1.61" height="18.91" fill="#0a0a00"/>
<rect x="828.9" y="116.18" width="1.61" height="18.91" fill="#000"/>
<rect x="832.36" y="116.15" width="1.55" height="18.91" fill="#0a0a00"/>
<rect x="836.73" y="116.04" width="0.99" height="16.36" fill="#000"/>
<rect x="839.05" y="116.77" width="0.63" height="19.08" fill="#444400"/>
<rect x="841.42" y="116.45" width="0.79" height="16.35" fill="#444400"/>
<rect x="844.5" y="116.48" width="0.89" height="16.84" fill="#222200"/>
<rect x="847.33" y="116" width="0.74" height="18.19" fill="#222200"/>
<rect x="850.18" y="116.73" width="0.88" height="18.75" fill="#222200"/>
<rect x="852.67" y="116.18" width="0.96" height="17.84" fill="#222200"/>
<rect x="855.16" y="116.87" width="0.66" height="19.52" fill="#222200"/>
<rect x="857.79" y="116.33" width="0.61" height="16.89" fill="#000"/>
<rect x="860.51" y="116.65" width="0.79" height="16.44" fill="#000"/>
<rect x="862.93" y="116.72" width="0.84" height="18.25" fill="#000"/>
<rect x="866.03" y="116.14" width="0.72" height="18.17" fill="#444400"/>
<rect x="868.46" y="116.16" width="0.75" height="14.26" fill="#606000"/>
<rect x="872.42" y="117.69" width="0.45" height="17.63" fill="#1a1a00"/>
<rect x="876.32" y="121.3" width="0.63" height="12.28" fill="#606000"/>
<rect x="879.32" y="123.11" width="0.53" height="11.92" fill="#4a4a00"/>
<rect x="882.9" y="116.76" width="0.59" height="11.64" fill="#808000"/>
<rect x="886.53" y="122.26" width="0.59" height="12.19" fill="#2a2a00"/>
<rect x="889.6" y="116.25" width="0.56" height="17.47" fill="#606000"/>
<rect x="893.22" y="115.8" width="0.7" height="19.5" fill="#4a4a00"/>
<rect x="897.5" y="116.16" width="0.43" height="11.74" fill="#606000"/>
<rect x="901.47" y="116.01" width="0.56" height="18.72" fill="#4a4a00"/>
<rect x="904.65" y="122.59" width="0.41" height="11.03" fill="#4a4a00"/>
<rect x="908.11" y="116.81" width="0.43" height="11.79" fill="#4a4a00"/>
<rect x="912.06" y="118.69" width="0.41" height="15.09" fill="#1a1a00"/>
<rect x="916.25" y="121.15" width="0.75" height="13.6" fill="#2a2a00"/>
<rect x="920.35" y="116.69" width="0.58" height="14.23" fill="#606000"/>
<rect x="924.2" y="116.75" width="0.56" height="15.04" fill="#2a2a00"/>
<rect x="927.87" y="115.8" width="0.58" height="17.44" fill="#2a2a00"/>
<rect x="931.8" y="116.36" width="0.68" height="17.06" fill="#2a2a00"/>
<rect x="936.28" y="121.28" width="0.66" height="13.71" fill="#2a2a00"/>
<rect x="940.56" y="115.83" width="0.47" height="19.61" fill="#808000"/>
<rect x="944.11" y="121.63" width="0.62" height="12.62" fill="#1a1a00"/>
<rect x="948.11" y="116.37" width="0.4" height="18.81" fill="#2a2a00"/>
<rect x="951.82" y="116.16" width="0.56" height="16.28" fill="#1a1a00"/>
<rect x="956.39" y="120.37" width="0.58" height="13.59" fill="#2a2a00"/>
<rect x="960.94" y="126.75" width="0.58" height="8.38" fill="#2a2a00"/>
<rect x="967.29" y="116.95" width="0.69" height="8.74" fill="#808000"/>
<rect x="974.18" y="116.62" width="0.6" height="11.34" fill="#4a4a00"/>
<rect x="979.9" y="125.01" width="0.6" height="10.79" fill="#2a2a00"/>
<rect x="986.15" y="125.13" width="0.55" height="8.13" fill="#2a2a00"/>
<rect x="991.05" y="116.83" width="0.74" height="5.12" fill="#4a4a00"/>
<rect x="997.28" y="116.37" width="0.52" height="6.15" fill="#4a4a00"/>
<rect x="1003.15" y="128.38" width="0.45" height="6.67" fill="#2a2a00"/>
<rect x="1009.62" y="116.75" width="0.52" height="11.72" fill="#808000"/>
<rect x="817.4" y="145.51" width="1.08" height="15.49" fill="#404000"/>
<rect x="820.17" y="145.63" width="0.72" height="15.37" fill="#000"/>
<rect x="822.94" y="144.46" width="1.01" height="16.54" fill="#404000"/>
<rect x="826.43" y="145.81" width="0.83" height="15.19" fill="#404000"/>
<rect x="829.9" y="142.99" width="0.77" height="18.01" fill="#404000"/>
<rect x="833.87" y="142.27" width="1.04" height="18.73" fill="#404000"/>
<rect x="836.92" y="147.01" width="1.04" height="13.99" fill="#404000"/>
<rect x="840.11" y="142.79" width="0.61" height="18.21" fill="#ff99aa"/>
<rect x="843.65" y="147.41" width="0.81" height="13.59" fill="#1a1a00"/>
<rect x="847.48" y="145.72" width="0.78" height="15.28" fill="#1a1a00"/>
<rect x="851" y="145.92" width="0.6" height="15.08" fill="#ffb090"/>
<rect x="854.88" y="145.61" width="1.02" height="15.39" fill="#ffb090"/>
<rect x="858.73" y="145.41" width="1" height="15.59" fill="#1a1a00"/>
<rect x="862.51" y="147.03" width="0.82" height="13.97" fill="#1a1a00"/>
<rect x="865.19" y="142.95" width="1.1" height="18.05" fill="#1a1a00"/>
<rect x="868.15" y="152.04" width="0.81" height="8.96" fill="#3a3a00"/>
<rect x="870.64" y="150.4" width="0.61" height="10.6" fill="#ffa0a0"/>
<rect x="873.89" y="144.23" width="0.69" height="16.77" fill="#ffa878"/>
<rect x="877.01" y="151.63" width="0.56" height="9.37" fill="#ffa878"/>
<rect x="879.97" y="149.69" width="0.72" height="11.31" fill="#ffc070"/>
<rect x="883.26" y="145.93" width="0.51" height="15.07" fill="#ffc070"/>
<rect x="886.58" y="153.93" width="0.52" height="7.07" fill="#ffa878"/>
<rect x="889.05" y="147.61" width="0.85" height="13.39" fill="#ffc070"/>
<rect x="891.55" y="152.19" width="0.76" height="8.81" fill="#808000"/>
<rect x="894.85" y="152.95" width="0.5" height="8.05" fill="#808000"/>
<rect x="897.77" y="150.45" width="0.52" height="10.55" fill="#ffc070"/>
<rect x="901.03" y="149.5" width="0.81" height="11.5" fill="#808000"/>
<rect x="903.73" y="152.87" width="0.84" height="8.13" fill="#ffa0a0"/>
<rect x="906.59" y="147.97" width="0.74" height="13.03" fill="#ffb090"/>
<rect x="910.06" y="153.18" width="0.81" height="7.82" fill="#ff99aa"/>
<rect x="913.61" y="146.27" width="0.7" height="14.73" fill="#ffa0a0"/>
<rect x="917.16" y="152.38" width="0.89" height="8.62" fill="#ffa0a0"/>
<rect x="919.71" y="152.62" width="0.72" height="8.38" fill="#808000"/>
<rect x="922.98" y="146.93" width="0.64" height="14.07" fill="#ffb090"/>
<rect x="926.77" y="151.62" width="0.54" height="9.38" fill="#ffb090"/>
<rect x="930.39" y="154.85" width="0.81" height="6.15" fill="#ff88bb"/>
<rect x="933.5" y="153.59" width="0.91" height="7.41" fill="#ffc070"/>
<rect x="937.41" y="153.57" width="0.55" height="7.43" fill="#3a3a00"/>
<rect x="940.73" y="145.94" width="0.51" height="15.06" fill="#ff99aa"/>
<rect x="943.45" y="150.54" width="0.63" height="10.46" fill="#808000"/>
<rect x="946.47" y="146.73" width="0.66" height="14.27" fill="#ffa878"/>
<rect x="949.75" y="145.95" width="0.89" height="15.05" fill="#ffc070"/>
<rect x="953.3" y="145" width="0.52" height="16" fill="#ffb090"/>
<rect x="956.8" y="154.27" width="0.66" height="6.73" fill="#ffb090"/>
<rect x="960.34" y="147" width="0.92" height="14" fill="#ffc070"/>
<rect x="963.35" y="151.87" width="0.52" height="9.13" fill="#ffa0a0"/>
<rect x="966.81" y="154.8" width="0.82" height="6.2" fill="#3a3a00"/>
<rect x="970.43" y="151.24" width="0.91" height="9.76" fill="#ffb090"/>
<rect x="974.2" y="151.92" width="0.53" height="9.08" fill="#ff99aa"/>
<rect x="977.94" y="149.42" width="0.63" height="11.58" fill="#3a3a00"/>
<rect x="981.78" y="146.64" width="0.6" height="14.36" fill="#ffc070"/>
<rect x="985.49" y="149.52" width="0.94" height="11.48" fill="#ffc070"/>
<rect x="988.47" y="145.66" width="0.53" height="15.34" fill="#808000"/>
<rect x="991.62" y="153.67" width="0.64" height="7.33" fill="#ffc070"/>
<rect x="994.65" y="150.25" width="0.52" height="10.75" fill="#ffa878"/>
</g>
<rect x="814.4" y="102.5" width="198.2" height="72" rx="1.5" fill="none" stroke="#4e4e4e" stroke-width="1.1"/>
<text transform="translate(812.1,110.8) scale(0.905,1)" fill="#e8e800" font-size="8.8" text-anchor="end" font-weight="normal"  stroke="#1c0606" stroke-width="1.1" paint-order="stroke" stroke-linejoin="round">32 V</text>
<text transform="translate(812.1,142.2) scale(0.905,1)" fill="#e8e800" font-size="8.8" text-anchor="end" font-weight="normal"  stroke="#1c0606" stroke-width="1.1" paint-order="stroke" stroke-linejoin="round">0 V</text>
<text transform="translate(812.1,172.9) scale(0.905,1)" fill="#e8e800" font-size="8.8" text-anchor="end" font-weight="normal"  stroke="#1c0606" stroke-width="1.1" paint-order="stroke" stroke-linejoin="round">-32 V</text>
<text transform="translate(815,184.1) scale(0.905,1)" fill="#e8e800" font-size="8.8" text-anchor="start" font-weight="normal"  stroke="#1c0606" stroke-width="1.1" paint-order="stroke" stroke-linejoin="round">25.5 ms</text>
<text transform="translate(1012.6,184.1) scale(0.905,1)" fill="#e8e800" font-size="8.8" text-anchor="end" font-weight="normal"  stroke="#1c0606" stroke-width="1.1" paint-order="stroke" stroke-linejoin="round">775.5 ms</text>
<path d="M810.8,177.1 l3,-1.9 v3.8z" fill="#e8e800"/>
<path d="M803.6,131 h10.6 v7.4 l-2.2,0 l-1.2,1.4 l-0.6,-1.4 h-6.6z" fill="#f0f000"/>
<text x="808.8" y="136.8" fill="#5a5a00" font-size="5.2" text-anchor="middle" font-weight="normal" opacity="0.85">Z1</text>
<rect x="562.7" y="197.4" width="198.2" height="72" fill="#000"/>
<line x1="582.52" y1="197.4" x2="582.52" y2="269.4" stroke="#323232" stroke-width="0.8"/>
<line x1="602.34" y1="197.4" x2="602.34" y2="269.4" stroke="#323232" stroke-width="0.8"/>
<line x1="622.16" y1="197.4" x2="622.16" y2="269.4" stroke="#323232" stroke-width="0.8"/>
<line x1="641.98" y1="197.4" x2="641.98" y2="269.4" stroke="#323232" stroke-width="0.8"/>
<line x1="661.8" y1="197.4" x2="661.8" y2="269.4" stroke="#4c4c4c" stroke-width="0.8"/>
<line x1="681.62" y1="197.4" x2="681.62" y2="269.4" stroke="#323232" stroke-width="0.8"/>
<line x1="701.44" y1="197.4" x2="701.44" y2="269.4" stroke="#323232" stroke-width="0.8"/>
<line x1="721.26" y1="197.4" x2="721.26" y2="269.4" stroke="#323232" stroke-width="0.8"/>
<line x1="741.08" y1="197.4" x2="741.08" y2="269.4" stroke="#323232" stroke-width="0.8"/>
<line x1="562.7" y1="206.4" x2="760.9" y2="206.4" stroke="#323232" stroke-width="0.8"/>
<line x1="562.7" y1="215.4" x2="760.9" y2="215.4" stroke="#323232" stroke-width="0.8"/>
<line x1="562.7" y1="224.4" x2="760.9" y2="224.4" stroke="#323232" stroke-width="0.8"/>
<line x1="562.7" y1="233.4" x2="760.9" y2="233.4" stroke="#4c4c4c" stroke-width="0.8"/>
<line x1="562.7" y1="242.4" x2="760.9" y2="242.4" stroke="#323232" stroke-width="0.8"/>
<line x1="562.7" y1="251.4" x2="760.9" y2="251.4" stroke="#323232" stroke-width="0.8"/>
<line x1="562.7" y1="260.4" x2="760.9" y2="260.4" stroke="#323232" stroke-width="0.8"/>
<line x1="562.7" y1="233.4" x2="760.9" y2="233.4" stroke="#8a8a8a" stroke-width="1.6" stroke-dasharray="0.9 3.06" stroke-dashoffset="0.45"/>
<line x1="562.7" y1="210.9" x2="760.9" y2="210.9" stroke="#7a7a7a" stroke-width="0.7" stroke-dasharray="0.8 3.16" stroke-dashoffset="0.4"/>
<line x1="562.7" y1="255.9" x2="760.9" y2="255.9" stroke="#7a7a7a" stroke-width="0.7" stroke-dasharray="0.8 3.16" stroke-dashoffset="0.4"/>
<g clip-path="url(#c21)">
<clipPath id="c21"><rect x="562.7" y="197.4" width="198.2" height="72"/></clipPath>
<polyline points="563.18,233.51 566.28,233.51 567.94,236.41 569.39,233.3 570.84,231.85 572.49,234.34 574.15,236.41 575.39,231.23 576.63,234.34" fill="none" stroke="#00b000" stroke-width="0.9" stroke-linejoin="round" opacity="1"/>
<path d="M575.39,231.05 575.89,228.33 576.39,225.08 576.89,222.88 577.39,220.69 577.89,221.16 578.39,220.6 578.89,222.24 579.39,222.74 579.89,222.35 580.39,222.6 580.89,222.21 581.39,222.41 581.89,222 582.39,221.5 582.89,221.24 583.39,222.01 583.89,220.29 584.39,222.72 584.89,221.43 585.39,222.37 585.89,222.28 586.39,222.8 586.89,220.81 587.39,221.84 587.89,222.49 588.39,223.09 588.89,223.03 589.39,222.85 589.89,223.78 590.39,223.19 590.89,224.37 591.39,224.72 591.89,224.21 592.39,223.96 592.89,224.42 593.39,224.52 593.89,224.37 594.39,224.84 594.89,225.02 595.39,226.1 595.89,226.32 596.39,226.24 596.89,226.44 597.39,226.57 597.89,226.33 598.39,226.14 598.89,226.07 599.39,225.46 599.89,225.86 600.39,225.87 600.89,225.39 601.39,225.6 601.89,225.3 602.39,226.1 602.89,226.21 603.39,225.99 603.89,226.22 604.39,225.4 604.89,226.24 605.39,225.97 605.89,226.48 606.39,226.35 606.89,226.15 607.39,226.62 607.89,226.11 608.39,226.42 608.89,227.15 609.39,227.2 609.89,226.85 610.39,227.12 610.89,226.53 611.39,226.39 611.89,226.99 612.39,226.75 612.89,226.21 613.39,226.88 613.89,226.76 614.39,224.66 614.89,225.95 615.39,227.1 615.89,226.66 616.39,226.69 616.89,226.86 617.39,226.58 617.89,226.83 618.39,227.07 618.89,227.26 619.39,227.58 619.89,227.19 620.39,226.25 620.89,227.11 621.39,224.46 621.89,226.8 622.39,226.33 622.89,226.9 623.39,227.36 623.89,226.53 624.39,226.99 624.89,225.45 625.39,227.58 625.89,227.67 626.39,227.5 626.89,227.16 627.39,227.56 627.89,227.4 628.39,226.63 628.89,226.96 629.39,227.08 629.89,225.62 630.39,223.77 630.89,222.4 631.39,220.33 631.89,219.69 632.39,219.68 632.89,219.61 633.39,219.13 633.89,219 634.39,219.22 634.89,218.44 635.39,218.7 635.89,219.12 636.39,218.91 636.89,219.43 637.39,219.99 637.89,219.37 638.39,218.12 638.89,221.66 639.39,221.49 639.89,221.92 640.39,222.39 640.89,222.75 641.39,222.65 641.89,222.46 642.39,222 642.89,222.81 643.39,223.64 643.89,223.89 644.39,224.15 644.89,225.25 645.39,223.69 645.89,225.06 646.39,224.95 646.61,225.96 L646.61,240.95 646.39,241.19 645.89,241.5 645.39,241.56 644.89,241.34 644.39,243.73 643.89,242.33 643.39,242.43 642.89,243.4 642.39,243.64 641.89,243.93 641.39,244.23 640.89,244.83 640.39,244.94 639.89,244.97 639.39,245.26 638.89,245.29 638.39,246.23 637.89,245.81 637.39,245.73 636.89,246.47 636.39,247.61 635.89,247.17 635.39,247.97 634.89,249.34 634.39,248.9 633.89,248.47 633.39,248.06 632.89,247.77 632.39,247.12 631.89,246.02 631.39,246.39 630.89,244.49 630.39,243.14 629.89,241.87 629.39,240.41 628.89,240.36 628.39,240.24 627.89,239.54 627.39,239 626.89,239.3 626.39,239.7 625.89,239.92 625.39,240.66 624.89,240.54 624.39,240.58 623.89,240.29 623.39,240.22 622.89,240.13 622.39,240.34 621.89,240.11 621.39,239.91 620.89,239.43 620.39,239.5 619.89,239.34 619.39,239.57 618.89,240.22 618.39,240.26 617.89,239.67 617.39,240.69 616.89,239.92 616.39,239.78 615.89,240.93 615.39,239.25 614.89,238.58 614.39,239.26 613.89,239.09 613.39,239.91 612.89,239.06 612.39,240.12 611.89,240.08 611.39,240.01 610.89,239.51 610.39,239.92 609.89,240.39 609.39,240.01 608.89,239.08 608.39,239.66 607.89,239.16 607.39,239.24 606.89,239.85 606.39,239.65 605.89,239.69 605.39,240.42 604.89,240.77 604.39,239.85 603.89,239.64 603.39,239.22 602.89,241.12 602.39,239.16 601.89,240.78 601.39,240.15 600.89,239.64 600.39,239.87 599.89,239.54 599.39,239.96 598.89,240.05 598.39,241.13 597.89,241.2 597.39,241.59 596.89,241.71 596.39,241.6 595.89,241.29 595.39,242.1 594.89,241.71 594.39,241.97 593.89,242.08 593.39,242.25 592.89,242.08 592.39,241.68 591.89,242.02 591.39,242.2 590.89,241.85 590.39,242.03 589.89,242.85 589.39,242.14 588.89,243.17 588.39,242.49 587.89,243.1 587.39,243.27 586.89,244.1 586.39,242.77 585.89,243.91 585.39,243.85 584.89,243.71 584.39,242.93 583.89,243.47 583.39,243.53 582.89,243.67 582.39,244.29 581.89,245 581.39,245.59 580.89,245.36 580.39,245.32 579.89,245.81 579.39,245.88 578.89,246.79 578.39,246.7 577.89,247.46 577.39,248.2 576.89,247.75 576.39,243.31 575.89,240.93 575.39,236.99Z" fill="#0ec60e"/>
<line x1="576.63" y1="224.21" x2="576.63" y2="245.29" stroke="#d8ffd8" stroke-width="0.6"/>
<line x1="577.88" y1="221.19" x2="577.88" y2="247.28" stroke="#d8ffd8" stroke-width="0.6"/>
<line x1="579.33" y1="223.06" x2="579.33" y2="245.32" stroke="#d8ffd8" stroke-width="0.6"/>
<line x1="580.77" y1="223.26" x2="580.77" y2="244.38" stroke="#d8ffd8" stroke-width="0.6"/>
<line x1="582.43" y1="222.16" x2="582.43" y2="243.83" stroke="#d8ffd8" stroke-width="0.6"/>
<path d="M646.61,225.45 647.11,225.9 647.61,225.36 648.11,226.05 648.61,226.03 649.11,226.21 649.61,226.83 650.11,226.22 650.61,226.39 651.11,226.75 651.61,226.76 652.11,226.46 652.61,226.78 653.11,227.31 653.61,226.69 654.11,227.33 654.61,225.94 655.11,226.97 655.61,227.11 656.11,227.28 656.61,227.68 657.11,226.76 657.61,227.34 658.11,227.71 658.61,227.27 659.11,227.32 659.61,226.48 660.11,226.84 660.61,226.6 661.11,227.44 661.61,227.29 662.11,227.5 662.61,227.23 663.11,227.61 663.61,227.34 664.11,228.13 664.61,227.99 665.11,228.28 665.61,228.55 666.11,228.87 666.61,228.38 667.11,228.69 667.61,228.55 668.11,227.32 668.61,228.08 669.11,228.34 669.61,227.54 670.11,226.92 670.61,227.83 671.11,227.14 671.61,226.51 672.11,226.91 672.61,227.22 673.11,227.21 673.61,227.43 674.11,226.58 674.61,227.32 675.11,227.69 675.61,226.92 676.11,227.07 676.61,227.78 677.11,226.73 677.61,226.54 678.11,226.62 678.61,227.08 679.11,226.39 679.61,226.11 680.11,226.71 680.61,226.32 681.11,226.41 681.61,225.85 682.11,225.46 682.61,224.13 683.11,225.46 683.61,225.81 684.11,225.98 684.61,225.43 685.11,224.62 685.61,224.63 686.11,224.02 686.61,223.97 687.11,224.53 687.61,224.8 688.11,224.07 688.61,224.58 689.11,224.84 689.61,225.37 690.11,225.17 690.61,225.14 691.11,225.71 691.61,225.33 692.11,225.94 692.61,226.51 693.11,225.8 693.61,225.86 694.11,225.71 694.61,226.41 695.11,225.3 695.61,226.26 696.11,226.2 696.61,226.25 697.11,226.35 697.61,226.44 698.11,225.35 698.61,225.78 699.11,225.25 699.61,225.35 700.11,225.02 700.61,225.16 701.11,225.33 701.61,224.66 702.11,224.06 702.61,224.35 703.11,224.65 703.61,225.23 704.11,224.47 704.61,223.59 705.11,223.42 705.61,223.74 706.11,222.82 706.61,223.51 707.11,223.6 707.61,223.54 708.11,223.83 708.61,223.88 709.11,223.92 709.61,224.44 710.11,225.38 710.61,225.11 711.11,224.67 711.61,225.27 712.11,224.99 712.61,224.77 713.11,225.43 713.61,224.63 714.11,224.46 714.61,224.89 715.11,224.47 715.61,224.75 716.11,224.64 716.61,225.01 717.11,225.18 717.61,225.33 718.11,224.74 718.61,225.03 719.11,225.62 719.61,225.73 720.11,225.16 720.61,225.85 721.11,225.4 721.61,225.42 722.11,224.91 722.61,225.36 723.11,224.61 723.61,223.45 724.11,225.41 724.61,224.35 725.11,224.81 725.61,225.35 726.11,225.79 726.61,225.16 727.11,225.8 727.61,225.18 728.11,224.87 728.61,224.86 729.11,225.24 729.61,224.89 730.11,225.14 730.61,225.54 731.11,225.35 731.61,225.34 732.11,225.95 732.61,225.7 733.11,225.58 733.61,226.11 734.11,225.64 734.61,225.93 735.11,226.64 735.61,226.5 736.11,226.17 736.61,226.13 737.11,226.15 737.61,225.39 738.11,224.7 738.61,226.1 739.11,226.01 739.61,226.67 740.11,226.93 740.61,225.53 741.11,225.97 741.61,226.17 742.11,226.55 742.61,226.65 743.11,227.19 743.61,226.59 744.11,226.53 744.61,226.51 745.11,227.36 745.61,227 746.11,227.51 746.61,226.89 747.11,227.05 747.61,227.42 748.11,227.19 748.61,227.6 749.11,226.9 749.61,227.23 750.11,226.7 750.61,226.98 751.11,226.67 751.61,226.58 752.11,227.1 752.61,227.87 753.11,227.6 753.61,227.68 754.11,228.56 754.61,227.89 755.11,227.73 755.61,227.41 756.11,228.03 756.61,228.42 757.11,228.52 757.61,228.51 758.11,228.17 758.61,228.35 759.11,227.57 759.61,228.32 760.11,227.81 760.4,228.3 L760.4,237.71 760.11,237.2 759.61,237.41 759.11,237.24 758.61,237.5 758.11,237.71 757.61,238.22 757.11,237.84 756.61,238.33 756.11,238.71 755.61,238.12 755.11,238.44 754.61,238.76 754.11,238.64 753.61,238.82 753.11,238.7 752.61,238.36 752.11,237.7 751.61,238.14 751.11,238.37 750.61,238.55 750.11,238.01 749.61,238.8 749.11,238.22 748.61,238.99 748.11,239.35 747.61,238.96 747.11,239.33 746.61,238.95 746.11,239.7 745.61,238.79 745.11,239.46 744.61,239.52 744.11,240.37 743.61,240.16 743.11,240.16 742.61,239.64 742.11,239.57 741.61,239.17 741.11,239.97 740.61,239.44 740.11,239.72 739.61,239.51 739.11,239.47 738.61,239.74 738.11,239.82 737.61,239.71 737.11,239.27 736.61,240.17 736.11,239.99 735.61,239.48 735.11,240.36 734.61,241.77 734.11,240.47 733.61,240.6 733.11,240.92 732.61,240.58 732.11,240.27 731.61,240.22 731.11,240.84 730.61,240.91 730.11,241.09 729.61,240.43 729.11,240.54 728.61,240.52 728.11,240.73 727.61,241.59 727.11,241.68 726.61,240.85 726.11,241.39 725.61,241.41 725.11,241.81 724.61,242.21 724.11,242.83 723.61,242.53 723.11,241.87 722.61,241.82 722.11,241.95 721.61,242.54 721.11,242.21 720.61,241.48 720.11,240.97 719.61,241.08 719.11,240.97 718.61,242 718.11,242.48 717.61,242.21 717.11,242.66 716.61,242.99 716.11,242.19 715.61,242.7 715.11,241.81 714.61,241.87 714.11,243.38 713.61,242.98 713.11,242.3 712.61,242.98 712.11,244.55 711.61,242.41 711.11,242.01 710.61,241.74 710.11,242.87 709.61,242.86 709.11,242.46 708.61,243.12 708.11,243.98 707.61,243.64 707.11,243.76 706.61,244.31 706.11,245.05 705.61,243.89 705.11,243.27 704.61,242.76 704.11,242.53 703.61,242.63 703.11,242.49 702.61,242.45 702.11,241.96 701.61,242.1 701.11,242.72 700.61,242.98 700.11,242.33 699.61,242.82 699.11,241.81 698.61,241.5 698.11,241.46 697.61,242.14 697.11,241.26 696.61,242.11 696.11,241.84 695.61,241.53 695.11,241.68 694.61,241.35 694.11,241.45 693.61,242.23 693.11,243.28 692.61,242.21 692.11,242.89 691.61,241.59 691.11,240.95 690.61,241.48 690.11,241.91 689.61,241.93 689.11,242.86 688.61,242.67 688.11,242.99 687.61,242.58 687.11,243 686.61,243.24 686.11,242.67 685.61,242.2 685.11,242.48 684.61,242.15 684.11,242.83 683.61,243.19 683.11,242.75 682.61,242.27 682.11,241.44 681.61,241.97 681.11,240.8 680.61,240.87 680.11,241.25 679.61,240.65 679.11,240.43 678.61,240.67 678.11,240.16 677.61,240.54 677.11,240.95 676.61,240.5 676.11,239.74 675.61,240.16 675.11,239.6 674.61,239.7 674.11,239.33 673.61,238.44 673.11,238.41 672.61,239.27 672.11,240.3 671.61,239.57 671.11,239.05 670.61,239.14 670.11,239.97 669.61,238.79 669.11,240.12 668.61,239.22 668.11,239.42 667.61,239.12 667.11,238.65 666.61,238.68 666.11,238.58 665.61,239.21 665.11,239.1 664.61,238.39 664.11,239.46 663.61,239.06 663.11,238.63 662.61,238.58 662.11,239.15 661.61,239.15 661.11,239.36 660.61,239.28 660.11,240.72 659.61,239.89 659.11,239.34 658.61,238.76 658.11,238.39 657.61,238.47 657.11,239.23 656.61,239.2 656.11,239.4 655.61,239.86 655.11,239.58 654.61,240.35 654.11,240.41 653.61,240.41 653.11,240.28 652.61,239.98 652.11,239.7 651.61,240.23 651.11,240.2 650.61,240.6 650.11,240.82 649.61,240.33 649.11,240.47 648.61,239.92 648.11,240.8 647.61,240.34 647.11,241.99 646.61,240.44Z" fill="#008400"/>
</g>
<rect x="562.7" y="197.4" width="198.2" height="72" rx="1.5" fill="none" stroke="#4e4e4e" stroke-width="1.1"/>
<text transform="translate(560.4,205.7) scale(0.905,1)" fill="#00c800" font-size="8.8" text-anchor="end" font-weight="normal"  stroke="#1c0606" stroke-width="1.1" paint-order="stroke" stroke-linejoin="round">40 A</text>
<text transform="translate(560.4,237.1) scale(0.905,1)" fill="#00c800" font-size="8.8" text-anchor="end" font-weight="normal"  stroke="#1c0606" stroke-width="1.1" paint-order="stroke" stroke-linejoin="round">0 A</text>
<text transform="translate(560.4,267.8) scale(0.905,1)" fill="#00c800" font-size="8.8" text-anchor="end" font-weight="normal"  stroke="#1c0606" stroke-width="1.1" paint-order="stroke" stroke-linejoin="round">-40 A</text>
<text transform="translate(563.3,279) scale(0.905,1)" fill="#00c800" font-size="8.8" text-anchor="start" font-weight="normal"  stroke="#1c0606" stroke-width="1.1" paint-order="stroke" stroke-linejoin="round">-80 ms</text>
<text transform="translate(661.8,279) scale(0.905,1)" fill="#00c800" font-size="8.8" text-anchor="middle" font-weight="normal"  stroke="#1c0606" stroke-width="1.1" paint-order="stroke" stroke-linejoin="round">920 ms</text>
<text transform="translate(760.9,279) scale(0.905,1)" fill="#00c800" font-size="8.8" text-anchor="end" font-weight="normal"  stroke="#1c0606" stroke-width="1.1" paint-order="stroke" stroke-linejoin="round">1.92 s</text>
<path d="M570.7,270.2 l2.2,4.4 h-4.4z" fill="#00c800"/>
<path d="M551.9,225.9 h10.6 v7.4 l-2.2,0 l-1.2,1.4 l-0.6,-1.4 h-6.6z" fill="#00c800"/>
<text x="557.1" y="231.7" fill="#004400" font-size="5.2" text-anchor="middle" font-weight="normal" opacity="0.85">C4</text>
<rect x="814.4" y="197.4" width="198.2" height="72" fill="#000"/>
<line x1="834.22" y1="197.4" x2="834.22" y2="269.4" stroke="#323232" stroke-width="0.8"/>
<line x1="854.04" y1="197.4" x2="854.04" y2="269.4" stroke="#323232" stroke-width="0.8"/>
<line x1="873.86" y1="197.4" x2="873.86" y2="269.4" stroke="#323232" stroke-width="0.8"/>
<line x1="893.68" y1="197.4" x2="893.68" y2="269.4" stroke="#323232" stroke-width="0.8"/>
<line x1="913.5" y1="197.4" x2="913.5" y2="269.4" stroke="#4c4c4c" stroke-width="0.8"/>
<line x1="933.32" y1="197.4" x2="933.32" y2="269.4" stroke="#323232" stroke-width="0.8"/>
<line x1="953.14" y1="197.4" x2="953.14" y2="269.4" stroke="#323232" stroke-width="0.8"/>
<line x1="972.96" y1="197.4" x2="972.96" y2="269.4" stroke="#323232" stroke-width="0.8"/>
<line x1="992.78" y1="197.4" x2="992.78" y2="269.4" stroke="#323232" stroke-width="0.8"/>
<line x1="814.4" y1="206.4" x2="1012.6" y2="206.4" stroke="#323232" stroke-width="0.8"/>
<line x1="814.4" y1="215.4" x2="1012.6" y2="215.4" stroke="#323232" stroke-width="0.8"/>
<line x1="814.4" y1="224.4" x2="1012.6" y2="224.4" stroke="#323232" stroke-width="0.8"/>
<line x1="814.4" y1="233.4" x2="1012.6" y2="233.4" stroke="#4c4c4c" stroke-width="0.8"/>
<line x1="814.4" y1="242.4" x2="1012.6" y2="242.4" stroke="#323232" stroke-width="0.8"/>
<line x1="814.4" y1="251.4" x2="1012.6" y2="251.4" stroke="#323232" stroke-width="0.8"/>
<line x1="814.4" y1="260.4" x2="1012.6" y2="260.4" stroke="#323232" stroke-width="0.8"/>
<line x1="814.4" y1="233.4" x2="1012.6" y2="233.4" stroke="#8a8a8a" stroke-width="1.6" stroke-dasharray="0.9 3.06" stroke-dashoffset="0.45"/>
<line x1="814.4" y1="210.9" x2="1012.6" y2="210.9" stroke="#7a7a7a" stroke-width="0.7" stroke-dasharray="0.8 3.16" stroke-dashoffset="0.4"/>
<line x1="814.4" y1="255.9" x2="1012.6" y2="255.9" stroke="#7a7a7a" stroke-width="0.7" stroke-dasharray="0.8 3.16" stroke-dashoffset="0.4"/>
<g clip-path="url(#c31)">
<clipPath id="c31"><rect x="814.4" y="197.4" width="198.2" height="72"/></clipPath>
<path d="M868.04,225.01 868.54,225.52 869.04,225.67 869.54,225.43 870.04,225.07 870.54,225.69 871.04,225.57 871.54,225.36 872.04,225.28 872.54,225.43 873.04,225.78 873.54,225.69 874.04,226.03 874.54,225.8 875.04,225.63 875.54,226.08 876.04,226.09 876.54,225.98 877.04,225.65 877.54,225.71 878.04,226.19 878.54,226.01 879.04,225.95 879.54,225.55 880.04,225.71 880.54,226.29 881.04,225.97 881.54,226.29 882.04,226.17 882.54,226.59 883.04,225.98 883.54,226.63 884.04,226.02 884.54,225.9 885.04,226.36 885.54,226.69 886.04,226.39 886.54,226.05 887.04,226.31 887.54,226.56 888.04,226.71 888.54,226.41 889.04,226.42 889.54,226.81 890.04,226.77 890.54,226.7 891.04,226.2 891.54,226.8 892.04,226.87 892.54,226.98 893.04,227.06 893.54,226.84 894.04,226.23 894.54,226.8 895.04,226.73 895.54,227.08 896.04,226.66 896.54,226.32 897.04,226.41 897.54,226.24 898.04,226.25 898.54,226.3 899.04,226.88 899.54,227.11 900.04,226.67 900.54,226.63 901.04,226.92 901.54,226.78 902.04,226.3 902.54,226.94 903.04,227.15 903.54,227.17 904.04,226.81 904.54,226.49 905.04,227.09 905.54,226.61 906.04,227.15 906.54,226.81 907.04,226.9 907.54,226.41 908.04,227.08 908.54,226.48 909.04,226.87 909.54,226.59 910.04,226.65 910.54,227.16 911.04,226.67 911.54,227.27 912.04,226.9 912.54,227.31 913.04,226.8 913.54,227.44 914.04,226.69 914.54,227.23 915.04,226.65 915.54,227.04 916.04,227.16 916.54,227.02 917.04,226.65 917.54,226.48 918.04,226.79 918.54,227.06 919.04,227.1 919.54,226.85 920.04,226.53 920.54,227.34 921.04,226.61 921.54,227 922.04,227.24 922.54,227.31 923.04,226.54 923.54,226.75 924.04,226.57 924.54,226.98 925.04,226.48 925.54,226.69 926.04,227.35 926.54,226.48 927.04,226.52 927.54,227.02 928.04,226.72 928.54,227.18 929.04,226.9 929.54,226.87 930.04,227.31 930.54,226.85 931.04,226.48 931.54,226.7 932.04,227.28 932.54,227.37 933.04,227.32 933.54,227.15 934.04,226.52 934.54,227.11 935.04,227.3 935.54,226.97 936.04,226.7 936.54,227.28 937.04,226.54 937.54,227.05 938.04,226.97 938.54,227.35 939.04,227.46 939.54,227.15 940.04,226.98 940.54,227.44 941.04,227.26 941.54,227 942.04,226.67 942.54,227.11 943.04,227.35 943.54,227 944.04,227.39 944.54,227.23 945.04,226.48 945.54,226.87 946.04,226.79 946.54,227.2 947.04,226.49 947.54,226.65 948.04,227.41 948.54,226.97 949.04,226.98 949.54,226.95 950.04,227.38 950.54,226.47 951.04,226.63 951.54,226.9 952.04,227.31 952.54,226.83 953.04,227.3 953.54,226.81 954.04,227.04 954.54,227.35 955.04,226.68 955.54,226.95 956.04,226.91 956.54,227.08 957.04,226.95 957.54,226.81 958.04,227.36 958.54,226.95 959.04,227.4 959.54,227.37 960.04,227.27 960.54,227.16 961.04,226.83 961.54,226.85 962.04,227.27 962.54,226.58 963.04,227.37 963.54,227.3 964.04,227.12 964.54,226.63 965.04,226.76 965.54,227.36 966.04,226.69 966.54,226.52 967.04,227.06 967.54,226.54 968.04,226.12 968.54,224.83 969.04,223.37 969.54,222.58 970.04,221.49 970.54,220.37 971.04,220.29 971.54,219.63 972.04,219.96 972.54,219.9 973.04,220.04 973.54,219.06 974.04,219.6 974.54,219.25 975.04,218.89 975.54,218.69 976.04,218.79 976.54,218.49 977.04,218.11 977.54,218.34 978.04,218.87 978.54,218.11 979.04,218.4 979.54,218.54 980.04,217.93 980.54,217.93 981.04,218.72 981.54,217.9 982.04,218.7 982.54,218.31 983.04,218.55 983.54,219.28 984.04,219.53 984.54,219.38 985.04,219.63 985.54,219.79 986.04,220.12 986.54,220.93 987.04,221.26 987.54,221.19 988.04,221.66 988.54,221.91 989.04,221.8 989.54,221.47 990.04,221.57 990.54,222.47 991.04,222.27 991.54,222.48 992.04,222.44 992.54,222.46 993.04,223.24 993.54,223.32 994.04,223.39 994.54,223.65 995.04,223.06 995.54,223.31 996.04,223.36 996.54,223.62 997.04,224 997.54,224.12 998.04,223.41 998.54,223.62 999.04,224.12 999.54,224.28 1000.04,224.23 1000.54,224.08 1001.04,224.48 1001.54,224.64 1002.04,224.14 1002.54,224.13 1003.04,224.86 1003.54,224.88 1004.04,224.51 1004.54,224.24 1005.04,225.23 1005.54,224.85 1006.04,225.08 1006.54,224.53 1007.04,224.71 1007.54,224.7 1008.04,225.17 1008.54,225.12 1009.04,225.06 1009.54,224.9 1010.04,224.78 1010.54,225.24 1011.04,225.11 1011.54,225.77 1012.04,225.13 1012.2,225.86 L1012.2,241.67 1012.04,242.07 1011.54,242.37 1011.04,242.54 1010.54,242.63 1010.04,242.48 1009.54,242.17 1009.04,242.57 1008.54,242.65 1008.04,242.62 1007.54,243.13 1007.04,242.46 1006.54,242.36 1006.04,242.4 1005.54,242.65 1005.04,243.27 1004.54,243.02 1004.04,243.17 1003.54,243.02 1003.04,243.48 1002.54,243.57 1002.04,242.91 1001.54,243.54 1001.04,243.25 1000.54,243.19 1000.04,243.11 999.54,243.82 999.04,243.37 998.54,244.16 998.04,244.21 997.54,243.48 997.04,243.77 996.54,244.41 996.04,244.23 995.54,243.96 995.04,244.25 994.54,243.67 994.04,243.96 993.54,244.2 993.04,245 992.54,244.4 992.04,244.74 991.54,245.15 991.04,245.69 990.54,245.49 990.04,245.79 989.54,245.93 989.04,246.37 988.54,245.74 988.04,246.69 987.54,246.09 987.04,247.08 986.54,246.8 986.04,247.08 985.54,247.79 985.04,247.41 984.54,248.18 984.04,247.95 983.54,248.99 983.04,248.68 982.54,249.03 982.04,249.39 981.54,249.61 981.04,249.37 980.54,249.46 980.04,249.31 979.54,249.41 979.04,249.29 978.54,248.89 978.04,248.76 977.54,249.26 977.04,249.03 976.54,248.77 976.04,249.15 975.54,248.28 975.04,248.6 974.54,248.35 974.04,247.48 973.54,247.86 973.04,246.98 972.54,247.26 972.04,246.77 971.54,246.64 971.04,246.21 970.54,246.68 970.04,245.63 969.54,244.2 969.04,243.57 968.54,242.17 968.04,241.01 967.54,240.04 967.04,239.48 966.54,239.61 966.04,239.91 965.54,239.7 965.04,239.86 964.54,239.25 964.04,239.76 963.54,240.12 963.04,239.97 962.54,239.52 962.04,239.3 961.54,240.01 961.04,240.03 960.54,240.1 960.04,239.35 959.54,239.66 959.04,239.26 958.54,239.86 958.04,239.85 957.54,239.32 957.04,239.39 956.54,240.1 956.04,240.03 955.54,240.04 955.04,240.05 954.54,239.19 954.04,239.39 953.54,239.27 953.04,239.75 952.54,239.64 952.04,239.39 951.54,239.73 951.04,239.31 950.54,239.35 950.04,239.51 949.54,239.3 949.04,239.15 948.54,239.32 948.04,239.67 947.54,239.39 947.04,239.84 946.54,239.47 946.04,239.29 945.54,239.16 945.04,239.15 944.54,239.6 944.04,239.21 943.54,240.01 943.04,239.63 942.54,239.44 942.04,239.64 941.54,239.75 941.04,239.25 940.54,239.91 940.04,239.67 939.54,239.72 939.04,239.38 938.54,239.8 938.04,239.98 937.54,239.68 937.04,239.36 936.54,239.54 936.04,240.13 935.54,239.96 935.04,239.94 934.54,239.21 934.04,239.33 933.54,240.11 933.04,239.24 932.54,240.05 932.04,239.6 931.54,239.48 931.04,239.7 930.54,239.16 930.04,239.18 929.54,239.48 929.04,239.58 928.54,240.12 928.04,239.69 927.54,240.13 927.04,240.09 926.54,239.21 926.04,239.33 925.54,239.2 925.04,239.73 924.54,239.58 924.04,239.74 923.54,240.04 923.04,239.67 922.54,239.48 922.04,239.82 921.54,239.3 921.04,239.47 920.54,239.88 920.04,239.94 919.54,239.96 919.04,239.64 918.54,239.99 918.04,239.5 917.54,239.43 917.04,239.35 916.54,239.49 916.04,239.65 915.54,239.44 915.04,239.79 914.54,240.06 914.04,239.74 913.54,240.13 913.04,240.07 912.54,239.56 912.04,239.49 911.54,239.73 911.04,239.69 910.54,239.85 910.04,239.96 909.54,239.76 909.04,239.36 908.54,239.26 908.04,239.45 907.54,239.59 907.04,240.16 906.54,239.48 906.04,239.53 905.54,239.68 905.04,239.31 904.54,240.09 904.04,239.4 903.54,239.74 903.04,240.25 902.54,239.48 902.04,239.33 901.54,239.84 901.04,239.74 900.54,239.9 900.04,240 899.54,239.5 899.04,239.71 898.54,240.1 898.04,239.62 897.54,240.22 897.04,239.86 896.54,239.59 896.04,239.86 895.54,240.12 895.04,240.31 894.54,240.06 894.04,240.35 893.54,240.1 893.04,240.39 892.54,239.76 892.04,239.56 891.54,240.33 891.04,239.88 890.54,240 890.04,240.18 889.54,240.24 889.04,240.22 888.54,240.21 888.04,239.79 887.54,240.41 887.04,239.93 886.54,240.52 886.04,239.81 885.54,240.23 885.04,240.68 884.54,239.87 884.04,240.46 883.54,240.86 883.04,240.53 882.54,240.25 882.04,240.88 881.54,240.11 881.04,240.85 880.54,240.4 880.04,241.01 879.54,240.23 879.04,240.65 878.54,240.28 878.04,241.03 877.54,240.52 877.04,240.34 876.54,240.57 876.04,240.77 875.54,240.67 875.04,241.03 874.54,241.13 874.04,241.36 873.54,240.85 873.04,240.68 872.54,241.36 872.04,241.46 871.54,240.96 871.04,241.48 870.54,241.32 870.04,240.89 869.54,241.44 869.04,241.07 868.54,241.68 868.04,241.36Z" fill="#0e9c0e"/>
<line x1="822.49" y1="227.71" x2="822.49" y2="240.05" stroke="#30dc30" stroke-width="1.22"/>
<line x1="824.06" y1="225.1" x2="824.06" y2="243.3" stroke="#a8f0a8" stroke-width="1.23"/>
<line x1="825.65" y1="221.98" x2="825.65" y2="248.02" stroke="#30dc30" stroke-width="1.25"/>
<line x1="827.24" y1="221.3" x2="827.24" y2="246.58" stroke="#f0fff0" stroke-width="1.26"/>
<line x1="828.85" y1="220.77" x2="828.85" y2="243.81" stroke="#30dc30" stroke-width="1.27"/>
<line x1="830.48" y1="221.25" x2="830.48" y2="243.29" stroke="#f0fff0" stroke-width="1.28"/>
<line x1="832.11" y1="222.2" x2="832.11" y2="243.5" stroke="#a8f0a8" stroke-width="1.29"/>
<line x1="833.77" y1="224.23" x2="833.77" y2="242.84" stroke="#a8f0a8" stroke-width="1.3"/>
<line x1="835.43" y1="224.33" x2="835.43" y2="242.88" stroke="#2cd82c" stroke-width="1.31"/>
<line x1="837.11" y1="223.98" x2="837.11" y2="243.11" stroke="#2cd82c" stroke-width="1.32"/>
<line x1="838.81" y1="222.08" x2="838.81" y2="243.38" stroke="#d0ffd0" stroke-width="1.33"/>
<line x1="840.52" y1="221.41" x2="840.52" y2="244.09" stroke="#2cd82c" stroke-width="1.34"/>
<line x1="842.24" y1="222.05" x2="842.24" y2="244.15" stroke="#d0ffd0" stroke-width="1.36"/>
<line x1="843.98" y1="222.4" x2="843.98" y2="243.51" stroke="#2cd82c" stroke-width="1.37"/>
<line x1="845.73" y1="223.24" x2="845.73" y2="243.49" stroke="#2cd82c" stroke-width="1.38"/>
<line x1="847.5" y1="223.34" x2="847.5" y2="242.49" stroke="#2cd82c" stroke-width="1.39"/>
<line x1="849.29" y1="224.45" x2="849.29" y2="241.64" stroke="#2cd82c" stroke-width="1.4"/>
<line x1="851.08" y1="224.11" x2="851.08" y2="242.55" stroke="#2cd82c" stroke-width="1.42"/>
<line x1="852.9" y1="224.17" x2="852.9" y2="241.96" stroke="#2cd82c" stroke-width="1.43"/>
<line x1="854.73" y1="223.65" x2="854.73" y2="242.89" stroke="#2cd82c" stroke-width="1.44"/>
<line x1="856.58" y1="223.91" x2="856.58" y2="243.51" stroke="#d0ffd0" stroke-width="1.45"/>
<line x1="858.44" y1="224.25" x2="858.44" y2="242.75" stroke="#2cd82c" stroke-width="1.46"/>
<line x1="860.31" y1="224.48" x2="860.31" y2="242.14" stroke="#2cd82c" stroke-width="1.48"/>
<line x1="862.21" y1="223.82" x2="862.21" y2="242.19" stroke="#2cd82c" stroke-width="1.49"/>
<line x1="864.12" y1="224.87" x2="864.12" y2="242.21" stroke="#2cd82c" stroke-width="1.5"/>
<line x1="866.04" y1="224.99" x2="866.04" y2="241.98" stroke="#2cd82c" stroke-width="1.52"/>
<line x1="867.99" y1="225.02" x2="867.99" y2="241.64" stroke="#2cd82c" stroke-width="1.53"/>
<line x1="869.95" y1="225.73" x2="869.95" y2="240.92" stroke="#2cd82c" stroke-width="1.54"/>
<line x1="871.92" y1="226.02" x2="871.92" y2="241.23" stroke="#d0ffd0" stroke-width="1.55"/>
<line x1="873.92" y1="225.42" x2="873.92" y2="241.1" stroke="#2cd82c" stroke-width="1.11"/>
<line x1="874.92" y1="225.21" x2="874.92" y2="241.39" stroke="#001800" stroke-width="0.6" opacity="0.75"/>
<line x1="875.93" y1="225.62" x2="875.93" y2="241.2" stroke="#2cd82c" stroke-width="1.12"/>
<line x1="876.94" y1="225.31" x2="876.94" y2="241.29" stroke="#001800" stroke-width="0.61" opacity="0.75"/>
<line x1="877.96" y1="225.94" x2="877.96" y2="240.72" stroke="#2cd82c" stroke-width="1.12"/>
<line x1="878.98" y1="225.41" x2="878.98" y2="241.19" stroke="#001800" stroke-width="0.61" opacity="0.75"/>
<line x1="880" y1="226.07" x2="880" y2="240.5" stroke="#a8f0a8" stroke-width="1.13"/>
<line x1="881.03" y1="225.52" x2="881.03" y2="241.09" stroke="#001800" stroke-width="0.62" opacity="0.75"/>
<line x1="882.06" y1="226.52" x2="882.06" y2="239.86" stroke="#2cd82c" stroke-width="1.14"/>
<line x1="883.1" y1="225.62" x2="883.1" y2="240.99" stroke="#001800" stroke-width="0.62" opacity="0.75"/>
<line x1="884.14" y1="226.34" x2="884.14" y2="240.13" stroke="#2cd82c" stroke-width="1.15"/>
<line x1="885.19" y1="225.72" x2="885.19" y2="240.88" stroke="#001800" stroke-width="0.63" opacity="0.75"/>
<line x1="886.24" y1="226.21" x2="886.24" y2="239.69" stroke="#2cd82c" stroke-width="1.16"/>
<line x1="887.3" y1="225.83" x2="887.3" y2="240.78" stroke="#001800" stroke-width="0.63" opacity="0.75"/>
<line x1="888.36" y1="226.41" x2="888.36" y2="239.7" stroke="#2cd82c" stroke-width="1.17"/>
<line x1="889.43" y1="225.93" x2="889.43" y2="240.67" stroke="#001800" stroke-width="0.64" opacity="0.75"/>
<line x1="890.49" y1="226.81" x2="890.49" y2="240.42" stroke="#a8f0a8" stroke-width="1.18"/>
<line x1="891.57" y1="226.04" x2="891.57" y2="240.56" stroke="#001800" stroke-width="0.65" opacity="0.75"/>
<line x1="892.65" y1="226.57" x2="892.65" y2="239.53" stroke="#2cd82c" stroke-width="1.19"/>
<line x1="893.73" y1="226.09" x2="893.73" y2="240.51" stroke="#001800" stroke-width="0.65" opacity="0.75"/>
<line x1="894.82" y1="226.83" x2="894.82" y2="239.97" stroke="#2cd82c" stroke-width="1.2"/>
<line x1="895.91" y1="226.14" x2="895.91" y2="240.47" stroke="#001800" stroke-width="0.66" opacity="0.75"/>
<line x1="897.01" y1="226.86" x2="897.01" y2="239.29" stroke="#2cd82c" stroke-width="1.21"/>
<line x1="898.11" y1="226.18" x2="898.11" y2="240.42" stroke="#001800" stroke-width="0.66" opacity="0.75"/>
<line x1="899.21" y1="226.64" x2="899.21" y2="239.35" stroke="#2cd82c" stroke-width="1.23"/>
<line x1="900.33" y1="226.22" x2="900.33" y2="240.38" stroke="#001800" stroke-width="0.67" opacity="0.75"/>
<line x1="901.44" y1="227.25" x2="901.44" y2="239.83" stroke="#a8f0a8" stroke-width="1.24"/>
<line x1="902.57" y1="226.27" x2="902.57" y2="240.34" stroke="#001800" stroke-width="0.67" opacity="0.75"/>
<line x1="903.69" y1="227.51" x2="903.69" y2="240.25" stroke="#2cd82c" stroke-width="1.25"/>
<line x1="904.82" y1="226.31" x2="904.82" y2="240.29" stroke="#001800" stroke-width="0.68" opacity="0.75"/>
<line x1="905.95" y1="226.48" x2="905.95" y2="239.41" stroke="#2cd82c" stroke-width="1.26"/>
<line x1="907.1" y1="226.36" x2="907.1" y2="240.25" stroke="#001800" stroke-width="0.69" opacity="0.75"/>
<line x1="908.24" y1="226.54" x2="908.24" y2="240.05" stroke="#2cd82c" stroke-width="1.27"/>
<line x1="909.39" y1="226.4" x2="909.39" y2="240.2" stroke="#001800" stroke-width="0.69" opacity="0.75"/>
<line x1="910.54" y1="227.33" x2="910.54" y2="239.11" stroke="#2cd82c" stroke-width="1.28"/>
<line x1="911.71" y1="226.45" x2="911.71" y2="240.15" stroke="#001800" stroke-width="0.7" opacity="0.75"/>
<line x1="912.87" y1="226.87" x2="912.87" y2="239.07" stroke="#2cd82c" stroke-width="1.29"/>
<line x1="914.04" y1="226.47" x2="914.04" y2="240.13" stroke="#001800" stroke-width="0.7" opacity="0.75"/>
<line x1="915.21" y1="226.72" x2="915.21" y2="239.92" stroke="#2cd82c" stroke-width="1.3"/>
<line x1="916.4" y1="226.47" x2="916.4" y2="240.13" stroke="#001800" stroke-width="0.71" opacity="0.75"/>
<line x1="917.58" y1="226.77" x2="917.58" y2="239.71" stroke="#2cd82c" stroke-width="1.31"/>
<line x1="918.77" y1="226.47" x2="918.77" y2="240.13" stroke="#001800" stroke-width="0.72" opacity="0.75"/>
<line x1="919.96" y1="226.65" x2="919.96" y2="239.9" stroke="#2cd82c" stroke-width="1.32"/>
<line x1="921.17" y1="226.47" x2="921.17" y2="240.13" stroke="#001800" stroke-width="0.72" opacity="0.75"/>
<line x1="922.37" y1="227.45" x2="922.37" y2="239.43" stroke="#2cd82c" stroke-width="1.33"/>
<line x1="923.58" y1="226.47" x2="923.58" y2="240.13" stroke="#001800" stroke-width="0.73" opacity="0.75"/>
<line x1="924.8" y1="226.79" x2="924.8" y2="238.98" stroke="#a8f0a8" stroke-width="1.35"/>
<line x1="926.02" y1="226.47" x2="926.02" y2="240.13" stroke="#001800" stroke-width="0.73" opacity="0.75"/>
<line x1="927.24" y1="226.98" x2="927.24" y2="239.35" stroke="#a8f0a8" stroke-width="1.36"/>
<line x1="928.48" y1="226.47" x2="928.48" y2="240.13" stroke="#001800" stroke-width="0.74" opacity="0.75"/>
<line x1="929.71" y1="227.15" x2="929.71" y2="238.98" stroke="#2cd82c" stroke-width="1.37"/>
<line x1="930.95" y1="226.47" x2="930.95" y2="240.13" stroke="#001800" stroke-width="0.75" opacity="0.75"/>
<line x1="932.2" y1="227.61" x2="932.2" y2="239.5" stroke="#2cd82c" stroke-width="1.38"/>
<line x1="933.45" y1="226.47" x2="933.45" y2="240.13" stroke="#001800" stroke-width="0.75" opacity="0.75"/>
<line x1="934.71" y1="227.21" x2="934.71" y2="239.62" stroke="#a8f0a8" stroke-width="1.39"/>
<line x1="935.98" y1="226.47" x2="935.98" y2="240.13" stroke="#001800" stroke-width="0.76" opacity="0.75"/>
<line x1="937.24" y1="227.62" x2="937.24" y2="239.41" stroke="#2cd82c" stroke-width="1.4"/>
<line x1="938.52" y1="226.47" x2="938.52" y2="240.13" stroke="#001800" stroke-width="0.77" opacity="0.75"/>
<line x1="939.79" y1="227.59" x2="939.79" y2="240.07" stroke="#2cd82c" stroke-width="1.42"/>
<line x1="941.08" y1="226.47" x2="941.08" y2="240.13" stroke="#001800" stroke-width="0.77" opacity="0.75"/>
<line x1="942.37" y1="226.99" x2="942.37" y2="239.84" stroke="#2cd82c" stroke-width="1.43"/>
<line x1="943.67" y1="226.47" x2="943.67" y2="240.13" stroke="#001800" stroke-width="0.78" opacity="0.75"/>
<line x1="944.97" y1="226.58" x2="944.97" y2="239.41" stroke="#a8f0a8" stroke-width="1.44"/>
<line x1="946.28" y1="226.47" x2="946.28" y2="240.13" stroke="#001800" stroke-width="0.79" opacity="0.75"/>
<line x1="947.59" y1="227.02" x2="947.59" y2="240" stroke="#2cd82c" stroke-width="1.45"/>
<line x1="948.91" y1="226.47" x2="948.91" y2="240.13" stroke="#001800" stroke-width="0.79" opacity="0.75"/>
<line x1="950.23" y1="226.87" x2="950.23" y2="239.35" stroke="#2cd82c" stroke-width="1.47"/>
<line x1="951.56" y1="226.47" x2="951.56" y2="240.13" stroke="#001800" stroke-width="0.8" opacity="0.75"/>
<line x1="952.9" y1="227.37" x2="952.9" y2="239.47" stroke="#2cd82c" stroke-width="1.48"/>
<line x1="954.24" y1="226.47" x2="954.24" y2="240.13" stroke="#001800" stroke-width="0.81" opacity="0.75"/>
<line x1="955.58" y1="226.51" x2="955.58" y2="238.98" stroke="#2cd82c" stroke-width="1.49"/>
<line x1="956.94" y1="226.47" x2="956.94" y2="240.13" stroke="#001800" stroke-width="0.81" opacity="0.75"/>
<line x1="958.29" y1="227.39" x2="958.29" y2="239.21" stroke="#2cd82c" stroke-width="1.5"/>
<line x1="959.66" y1="226.47" x2="959.66" y2="240.13" stroke="#001800" stroke-width="0.82" opacity="0.75"/>
<line x1="961.03" y1="227.1" x2="961.03" y2="239.74" stroke="#2cd82c" stroke-width="1.52"/>
<line x1="962.41" y1="226.47" x2="962.41" y2="240.13" stroke="#001800" stroke-width="0.83" opacity="0.75"/>
<line x1="963.79" y1="226.52" x2="963.79" y2="239.68" stroke="#a8f0a8" stroke-width="1.53"/>
<line x1="965.18" y1="226.47" x2="965.18" y2="240.13" stroke="#001800" stroke-width="0.83" opacity="0.75"/>
<line x1="966.57" y1="227.46" x2="966.57" y2="239.66" stroke="#2cd82c" stroke-width="1.54"/>
<line x1="967.97" y1="226.47" x2="967.97" y2="240.13" stroke="#001800" stroke-width="0.84" opacity="0.75"/>
<line x1="969.37" y1="222.93" x2="969.37" y2="244.03" stroke="#2cd82c" stroke-width="0.72"/>
<line x1="970.02" y1="222.31" x2="970.02" y2="244.3" stroke="#001800" stroke-width="0.39" opacity="0.75"/>
<line x1="970.67" y1="220.49" x2="970.67" y2="246.1" stroke="#2cd82c" stroke-width="0.72"/>
<line x1="971.32" y1="219.8" x2="971.32" y2="246.83" stroke="#001800" stroke-width="0.39" opacity="0.75"/>
<line x1="971.97" y1="220.32" x2="971.97" y2="247" stroke="#c8ffc8" stroke-width="0.72"/>
<line x1="972.62" y1="219.38" x2="972.62" y2="247.45" stroke="#001800" stroke-width="0.39" opacity="0.75"/>
<line x1="973.27" y1="219.23" x2="973.27" y2="247.42" stroke="#c8ffc8" stroke-width="0.72"/>
<line x1="973.92" y1="218.97" x2="973.92" y2="248.08" stroke="#001800" stroke-width="0.39" opacity="0.75"/>
<line x1="974.57" y1="219.44" x2="974.57" y2="248.47" stroke="#c8ffc8" stroke-width="0.72"/>
<line x1="975.22" y1="218.55" x2="975.22" y2="248.7" stroke="#001800" stroke-width="0.39" opacity="0.75"/>
<line x1="975.87" y1="218.43" x2="975.87" y2="248.17" stroke="#2cd82c" stroke-width="0.72"/>
<line x1="976.52" y1="218.18" x2="976.52" y2="249.26" stroke="#001800" stroke-width="0.39" opacity="0.75"/>
<line x1="977.17" y1="218.11" x2="977.17" y2="248.32" stroke="#2cd82c" stroke-width="0.72"/>
<line x1="977.82" y1="218.09" x2="977.82" y2="249.39" stroke="#001800" stroke-width="0.39" opacity="0.75"/>
<line x1="978.47" y1="218.61" x2="978.47" y2="248.41" stroke="#2cd82c" stroke-width="0.72"/>
<line x1="979.12" y1="218" x2="979.12" y2="249.52" stroke="#001800" stroke-width="0.39" opacity="0.75"/>
<line x1="979.77" y1="218.61" x2="979.77" y2="249.47" stroke="#2cd82c" stroke-width="0.72"/>
<line x1="980.42" y1="217.92" x2="980.42" y2="249.65" stroke="#001800" stroke-width="0.39" opacity="0.75"/>
<line x1="981.07" y1="218.37" x2="981.07" y2="249.2" stroke="#2cd82c" stroke-width="0.72"/>
<line x1="981.72" y1="217.83" x2="981.72" y2="249.78" stroke="#001800" stroke-width="0.39" opacity="0.75"/>
<line x1="982.37" y1="218.48" x2="982.37" y2="248.58" stroke="#2cd82c" stroke-width="0.72"/>
<line x1="983.02" y1="218" x2="983.02" y2="249.64" stroke="#001800" stroke-width="0.39" opacity="0.75"/>
<line x1="983.67" y1="219.8" x2="983.67" y2="247.94" stroke="#2cd82c" stroke-width="0.72"/>
<line x1="984.32" y1="218.65" x2="984.32" y2="248.99" stroke="#001800" stroke-width="0.39" opacity="0.75"/>
<line x1="984.97" y1="219.44" x2="984.97" y2="247.72" stroke="#2cd82c" stroke-width="0.72"/>
<line x1="985.62" y1="219.3" x2="985.62" y2="248.34" stroke="#001800" stroke-width="0.39" opacity="0.75"/>
<line x1="986.27" y1="220.68" x2="986.27" y2="246.59" stroke="#2cd82c" stroke-width="0.72"/>
<line x1="986.92" y1="219.95" x2="986.92" y2="247.69" stroke="#001800" stroke-width="0.39" opacity="0.75"/>
<line x1="987.57" y1="221.51" x2="987.57" y2="246.1" stroke="#2cd82c" stroke-width="0.72"/>
<line x1="988.22" y1="220.6" x2="988.22" y2="247.04" stroke="#001800" stroke-width="0.39" opacity="0.75"/>
<line x1="988.87" y1="222.16" x2="988.87" y2="246.32" stroke="#c8ffc8" stroke-width="0.72"/>
<line x1="989.52" y1="221.13" x2="989.52" y2="246.51" stroke="#001800" stroke-width="0.39" opacity="0.75"/>
<line x1="990.17" y1="222.55" x2="990.17" y2="245.7" stroke="#2cd82c" stroke-width="0.72"/>
<line x1="990.82" y1="221.56" x2="990.82" y2="246.08" stroke="#001800" stroke-width="0.39" opacity="0.75"/>
<line x1="991.47" y1="222.97" x2="991.47" y2="245.09" stroke="#c8ffc8" stroke-width="0.72"/>
<line x1="992.12" y1="222" x2="992.12" y2="245.64" stroke="#001800" stroke-width="0.39" opacity="0.75"/>
<line x1="992.77" y1="222.61" x2="992.77" y2="245.03" stroke="#2cd82c" stroke-width="0.72"/>
<line x1="993.42" y1="222.43" x2="993.42" y2="245.21" stroke="#001800" stroke-width="0.39" opacity="0.75"/>
<line x1="994.07" y1="223.75" x2="994.07" y2="243.75" stroke="#28d828" stroke-width="0.61"/>
<line x1="995.17" y1="223.61" x2="995.17" y2="244.56" stroke="#28d828" stroke-width="0.61"/>
<line x1="996.27" y1="223.55" x2="996.27" y2="243.4" stroke="#28d828" stroke-width="0.61"/>
<line x1="997.37" y1="224.46" x2="997.37" y2="244.27" stroke="#28d828" stroke-width="0.61"/>
<line x1="998.47" y1="223.48" x2="998.47" y2="242.98" stroke="#28d828" stroke-width="0.61"/>
<line x1="999.57" y1="224.17" x2="999.57" y2="243.9" stroke="#28d828" stroke-width="0.61"/>
<line x1="1000.67" y1="224.34" x2="1000.67" y2="243.78" stroke="#28d828" stroke-width="0.61"/>
<line x1="1001.77" y1="224.85" x2="1001.77" y2="243.39" stroke="#28d828" stroke-width="0.61"/>
<line x1="1002.87" y1="224.03" x2="1002.87" y2="242.71" stroke="#28d828" stroke-width="0.61"/>
<line x1="1003.97" y1="225.23" x2="1003.97" y2="242.78" stroke="#28d828" stroke-width="0.61"/>
<line x1="1005.07" y1="224.56" x2="1005.07" y2="243.24" stroke="#28d828" stroke-width="0.61"/>
<line x1="1006.17" y1="225.02" x2="1006.17" y2="242.66" stroke="#28d828" stroke-width="0.61"/>
<line x1="1007.27" y1="225.2" x2="1007.27" y2="242.28" stroke="#28d828" stroke-width="0.61"/>
<line x1="1008.37" y1="225.07" x2="1008.37" y2="242.89" stroke="#28d828" stroke-width="0.61"/>
<line x1="1009.47" y1="225.15" x2="1009.47" y2="242.44" stroke="#28d828" stroke-width="0.61"/>
<line x1="1010.57" y1="225.88" x2="1010.57" y2="242.63" stroke="#28d828" stroke-width="0.61"/>
<line x1="1011.67" y1="225" x2="1011.67" y2="242.36" stroke="#28d828" stroke-width="0.61"/>
<line x1="832.84" y1="233.51" x2="994.34" y2="233.51" stroke="#002800" stroke-width="0.9" stroke-dasharray="2.2 1.4" opacity="0.55"/>
<polyline points="814.21,233.92 818.35,234.34 820.84,231.85 822.49,236.41 824.56,247.8 826.22,236.41 827.88,220.88 829.53,230.2 831.19,243.65" fill="none" stroke="#e8ffe8" stroke-width="0.8" stroke-linejoin="round" opacity="1"/>
</g>
<rect x="814.4" y="197.4" width="198.2" height="72" rx="1.5" fill="none" stroke="#4e4e4e" stroke-width="1.1"/>
<text transform="translate(812.1,205.7) scale(0.905,1)" fill="#00c800" font-size="8.8" text-anchor="end" font-weight="normal"  stroke="#1c0606" stroke-width="1.1" paint-order="stroke" stroke-linejoin="round">40 A</text>
<text transform="translate(812.1,237.1) scale(0.905,1)" fill="#00c800" font-size="8.8" text-anchor="end" font-weight="normal"  stroke="#1c0606" stroke-width="1.1" paint-order="stroke" stroke-linejoin="round">0 A</text>
<text transform="translate(812.1,267.8) scale(0.905,1)" fill="#00c800" font-size="8.8" text-anchor="end" font-weight="normal"  stroke="#1c0606" stroke-width="1.1" paint-order="stroke" stroke-linejoin="round">-40 A</text>
<text transform="translate(815,279) scale(0.905,1)" fill="#00c800" font-size="8.8" text-anchor="start" font-weight="normal"  stroke="#1c0606" stroke-width="1.1" paint-order="stroke" stroke-linejoin="round">25.5 ms</text>
<text transform="translate(1012.6,279) scale(0.905,1)" fill="#00c800" font-size="8.8" text-anchor="end" font-weight="normal"  stroke="#1c0606" stroke-width="1.1" paint-order="stroke" stroke-linejoin="round">775.5 ms</text>
<path d="M810.8,272 l3,-1.9 v3.8z" fill="#00c800"/>
<path d="M803.6,225.9 h10.6 v7.4 l-2.2,0 l-1.2,1.4 l-0.6,-1.4 h-6.6z" fill="#00c800"/>
<text x="808.8" y="231.7" fill="#004400" font-size="5.2" text-anchor="middle" font-weight="normal" opacity="0.85">Z4</text>
<rect x="53.7" y="353.5" width="198.2" height="72" fill="#000"/>
<line x1="73.52" y1="353.5" x2="73.52" y2="425.5" stroke="#323232" stroke-width="0.8"/>
<line x1="93.34" y1="353.5" x2="93.34" y2="425.5" stroke="#323232" stroke-width="0.8"/>
<line x1="113.16" y1="353.5" x2="113.16" y2="425.5" stroke="#323232" stroke-width="0.8"/>
<line x1="132.98" y1="353.5" x2="132.98" y2="425.5" stroke="#323232" stroke-width="0.8"/>
<line x1="152.8" y1="353.5" x2="152.8" y2="425.5" stroke="#4c4c4c" stroke-width="0.8"/>
<line x1="172.62" y1="353.5" x2="172.62" y2="425.5" stroke="#323232" stroke-width="0.8"/>
<line x1="192.44" y1="353.5" x2="192.44" y2="425.5" stroke="#323232" stroke-width="0.8"/>
<line x1="212.26" y1="353.5" x2="212.26" y2="425.5" stroke="#323232" stroke-width="0.8"/>
<line x1="232.08" y1="353.5" x2="232.08" y2="425.5" stroke="#323232" stroke-width="0.8"/>
<line x1="53.7" y1="362.5" x2="251.9" y2="362.5" stroke="#323232" stroke-width="0.8"/>
<line x1="53.7" y1="371.5" x2="251.9" y2="371.5" stroke="#323232" stroke-width="0.8"/>
<line x1="53.7" y1="380.5" x2="251.9" y2="380.5" stroke="#323232" stroke-width="0.8"/>
<line x1="53.7" y1="389.5" x2="251.9" y2="389.5" stroke="#4c4c4c" stroke-width="0.8"/>
<line x1="53.7" y1="398.5" x2="251.9" y2="398.5" stroke="#323232" stroke-width="0.8"/>
<line x1="53.7" y1="407.5" x2="251.9" y2="407.5" stroke="#323232" stroke-width="0.8"/>
<line x1="53.7" y1="416.5" x2="251.9" y2="416.5" stroke="#323232" stroke-width="0.8"/>
<line x1="53.7" y1="389.5" x2="251.9" y2="389.5" stroke="#8a8a8a" stroke-width="1.6" stroke-dasharray="0.9 3.06" stroke-dashoffset="0.45"/>
<line x1="53.7" y1="367" x2="251.9" y2="367" stroke="#7a7a7a" stroke-width="0.7" stroke-dasharray="0.8 3.16" stroke-dashoffset="0.4"/>
<line x1="53.7" y1="412" x2="251.9" y2="412" stroke="#7a7a7a" stroke-width="0.7" stroke-dasharray="0.8 3.16" stroke-dashoffset="0.4"/>
<g clip-path="url(#c02)">
<clipPath id="c02"><rect x="53.7" y="353.5" width="198.2" height="72"/></clipPath>
<polyline points="53.62,400.61 54.98,400.79 56.34,400.27 57.7,400.57 59.05,400.2 60.56,399.46 62.07,398.33 63.58,395.15 65.09,392.44 67.1,388.1 69.11,385.26 70.12,375.92 71.73,367.35 73.14,364.68 75.15,364.36 76.66,365.32 78.17,366.68 79.51,367.28 80.85,367.66 82.19,368.02 83.45,368.27 84.71,368.43 85.97,369.02 87.22,369.17 88.48,368.84 89.74,368.86 91,368.83 92.25,368.31 93.46,368.37 94.67,368.74 95.88,368.79 97.08,368.65 98.29,368.79 99.5,369 100.7,368.71 101.91,369.02 103.12,369.01 104.33,368.87 105.53,368.96 106.74,368.91 107.95,368.98 109.15,368.87 110.36,368.38 111.57,368.67 112.78,368.75 113.98,368.68 115.19,369.17 116.4,369.1 117.61,369.23 118.81,369.14 120.02,369.16 121.23,369.09 122.43,369.52 123.78,369.41 125.12,369.04 126.46,369.09 127.8,369.06 129.14,368.78 130.48,368.68 131.72,368.47 132.96,368.22 134.21,367.91 135.45,367.44 136.69,367.43 137.93,367.03" fill="none" stroke="#ff1010" stroke-width="1.7" stroke-linejoin="round" opacity="1"/>
<polyline points="137.93,367.09 139.16,367.14 140.4,367.09 141.64,366.75 142.87,366.85 144.11,366.44 145.34,366.25 146.58,366.19 147.92,366.42 149.26,366.79 150.6,366.6 151.95,366.78 153.29,367.11 154.63,367.18 155.97,367.05 157.31,367.38 158.65,367.74 159.99,367.41 161.33,367.21 162.68,367.55 164.02,367.61 165.36,367.43 166.7,367.46 168.04,366.92 169.38,367.01 170.72,366.84 172.07,367.05 173.41,367.47 174.75,367.34 176.09,367.57 177.43,367.44 178.77,367.9 179.98,367.67 181.19,367.89 182.39,367.46 183.6,367.79 184.81,367.43 186.02,367.32 187.22,367.67 188.43,367.26 189.64,367.31 190.85,367.05 192.1,367.37 193.36,367.07 194.62,366.65 195.88,366.93 197.13,366.33 198.39,366.62 199.65,366.54 200.91,366.33 202.16,365.88 203.42,365.96 204.68,366.14 205.94,365.6 207.19,365.62 208.45,365.93 209.71,365.73 210.97,365.88 212.17,365.31 213.38,365.12 214.59,365.09 215.79,364.76 217,364.65 218.21,364.83 219.42,364.72 220.62,365.15 221.83,365.22 223.04,365.88 224.38,365.51 225.72,365.66 227.06,365.72 228.4,365.76 229.75,365.55 231.09,365.4 232.29,365.23 233.5,365.09 234.71,364.81 235.92,364.91 237.12,364.45 238.33,364.82 239.54,365.16 240.74,364.97 241.95,365.49 243.16,365.54 244.37,365.54 245.57,365.44 246.78,365.48 247.99,365.43 249.2,365.11 250.4,365.26 251.61,365.26" fill="none" stroke="#d00000" stroke-width="1.2" stroke-linejoin="round" opacity="1"/>
</g>
<rect x="53.7" y="353.5" width="198.2" height="72" rx="1.5" fill="none" stroke="#4e4e4e" stroke-width="1.1"/>
<text transform="translate(51.4,361.8) scale(0.905,1)" fill="#f01010" font-size="8.8" text-anchor="end" font-weight="normal"  stroke="#1c0606" stroke-width="1.1" paint-order="stroke" stroke-linejoin="round">1.065 V</text>
<text transform="translate(51.4,393.2) scale(0.905,1)" fill="#f01010" font-size="8.8" text-anchor="end" font-weight="normal"  stroke="#1c0606" stroke-width="1.1" paint-order="stroke" stroke-linejoin="round">265 mV</text>
<text transform="translate(51.4,423.9) scale(0.905,1)" fill="#f01010" font-size="8.8" text-anchor="end" font-weight="normal"  stroke="#1c0606" stroke-width="1.1" paint-order="stroke" stroke-linejoin="round">-535 mV</text>
<text transform="translate(54.3,435.1) scale(0.905,1)" fill="#f01010" font-size="8.8" text-anchor="start" font-weight="normal"  stroke="#1c0606" stroke-width="1.1" paint-order="stroke" stroke-linejoin="round">-80 ms</text>
<text transform="translate(152.8,435.1) scale(0.905,1)" fill="#f01010" font-size="8.8" text-anchor="middle" font-weight="normal"  stroke="#1c0606" stroke-width="1.1" paint-order="stroke" stroke-linejoin="round">920 ms</text>
<text transform="translate(251.9,435.1) scale(0.905,1)" fill="#f01010" font-size="8.8" text-anchor="end" font-weight="normal"  stroke="#1c0606" stroke-width="1.1" paint-order="stroke" stroke-linejoin="round">1.92 s</text>
<path d="M61.7,426.3 l2.2,4.4 h-4.4z" fill="#f01010"/>
<path d="M42.9,393 h10.6 v7.4 l-2.2,0 l-1.2,1.4 l-0.6,-1.4 h-6.6z" fill="#ff1010"/>
<text x="48.1" y="398.8" fill="#f4f4f4" font-size="5.2" text-anchor="middle" font-weight="normal" opacity="0.85">C7</text>
<rect x="305.4" y="353.5" width="198.2" height="72" fill="#000"/>
<line x1="325.22" y1="353.5" x2="325.22" y2="425.5" stroke="#323232" stroke-width="0.8"/>
<line x1="345.04" y1="353.5" x2="345.04" y2="425.5" stroke="#323232" stroke-width="0.8"/>
<line x1="364.86" y1="353.5" x2="364.86" y2="425.5" stroke="#323232" stroke-width="0.8"/>
<line x1="384.68" y1="353.5" x2="384.68" y2="425.5" stroke="#323232" stroke-width="0.8"/>
<line x1="404.5" y1="353.5" x2="404.5" y2="425.5" stroke="#4c4c4c" stroke-width="0.8"/>
<line x1="424.32" y1="353.5" x2="424.32" y2="425.5" stroke="#323232" stroke-width="0.8"/>
<line x1="444.14" y1="353.5" x2="444.14" y2="425.5" stroke="#323232" stroke-width="0.8"/>
<line x1="463.96" y1="353.5" x2="463.96" y2="425.5" stroke="#323232" stroke-width="0.8"/>
<line x1="483.78" y1="353.5" x2="483.78" y2="425.5" stroke="#323232" stroke-width="0.8"/>
<line x1="305.4" y1="362.5" x2="503.6" y2="362.5" stroke="#323232" stroke-width="0.8"/>
<line x1="305.4" y1="371.5" x2="503.6" y2="371.5" stroke="#323232" stroke-width="0.8"/>
<line x1="305.4" y1="380.5" x2="503.6" y2="380.5" stroke="#323232" stroke-width="0.8"/>
<line x1="305.4" y1="389.5" x2="503.6" y2="389.5" stroke="#4c4c4c" stroke-width="0.8"/>
<line x1="305.4" y1="398.5" x2="503.6" y2="398.5" stroke="#323232" stroke-width="0.8"/>
<line x1="305.4" y1="407.5" x2="503.6" y2="407.5" stroke="#323232" stroke-width="0.8"/>
<line x1="305.4" y1="416.5" x2="503.6" y2="416.5" stroke="#323232" stroke-width="0.8"/>
<line x1="305.4" y1="389.5" x2="503.6" y2="389.5" stroke="#8a8a8a" stroke-width="1.6" stroke-dasharray="0.9 3.06" stroke-dashoffset="0.45"/>
<line x1="305.4" y1="367" x2="503.6" y2="367" stroke="#7a7a7a" stroke-width="0.7" stroke-dasharray="0.8 3.16" stroke-dashoffset="0.4"/>
<line x1="305.4" y1="412" x2="503.6" y2="412" stroke="#7a7a7a" stroke-width="0.7" stroke-dasharray="0.8 3.16" stroke-dashoffset="0.4"/>
<g clip-path="url(#c12)">
<clipPath id="c12"><rect x="305.4" y="353.5" width="198.2" height="72"/></clipPath>
<polyline points="305.03,394.56 306.54,392.77 308.05,391.32 309.39,390.35 310.73,389.53 312.07,388.82 313.41,388.07 314.76,387.76 316.1,387.22 317.3,386.41 318.51,385.38 320.12,380.31 321.73,372.24 323.14,369.24 324.55,370.09 326.16,365.51 328.17,364.32 330.18,363.93 332.19,365.09 333.7,364.73 335.21,364.56 336.47,364.83 337.73,365.02 338.98,365.43 340.24,365.5 341.45,365.75 342.66,366.34 343.86,366.47 345.07,366.69 346.28,367.04 347.48,367 348.69,367.3 349.9,367.64 351.11,367.94 352.31,368.12 353.66,368.31 355,368.54 356.34,368.73 357.68,368.67 359.02,368.94 360.36,369.17 361.62,368.95 362.88,368.97 364.13,369.02 365.39,369.09 366.65,369.03 367.91,369.3 369.16,369.18 370.42,369.2 371.68,368.96 372.94,369.1 374.2,368.96 375.45,368.98 376.71,368.85 377.97,368.8 379.23,368.41 380.48,368.61 381.74,368.69 383,368.59 384.26,368.74 385.51,368.65 386.77,368.61 388.03,368.74 389.29,368.96 390.54,368.83 391.8,368.89 393.06,368.94 394.32,368.91 395.57,369.09 396.83,369.06 398.09,369.17 399.35,369.26 400.6,369.15 401.86,369.4 403.12,369.17 404.38,369.36 405.63,369.37 406.89,369.38 408.15,369.44 409.41,369.44 410.66,369.32 411.92,369.11 413.18,369.22 414.44,369.23 415.69,369.08 416.95,368.99 418.21,368.95 419.47,368.88 420.72,368.78 421.98,368.79 423.24,368.78 424.5,368.77 425.75,368.62 427.01,368.45 428.27,368.75 429.53,368.54 430.78,368.39 432.04,368.52 433.3,368.76 434.56,368.58 435.81,368.62 437.07,368.84 438.33,369.15 439.59,369.22 440.85,369.14 442.1,369.32 443.36,369.18 444.62,369.15 445.88,369.03 447.13,369.04 448.39,369.4 449.65,369.29 450.91,369.5 452.16,369.34 453.42,369.1 454.68,369.07 455.94,369.38 457.19,369.09 458.45,369.18 459.71,369.03 460.97,369.14 462.22,369.18 463.48,368.77 464.74,368.69 466,368.88 467.25,368.59 468.51,368.78 469.77,368.65 471.03,368.58 472.28,368.51 473.54,368.64 474.8,368.61 476.06,368.57 477.31,368.54 478.57,368.2 479.83,368.2 481.09,368.38 482.43,368.42 483.77,368.61 485.11,368.59 486.45,368.66 487.79,369.17 489.13,368.95 490.48,368.78 491.82,368.88 493.16,368.6 494.5,368.61 495.84,368.44 497.18,368.05 498.39,368.13 499.6,367.85 500.8,367.82 502.01,367.5 503.22,367.28" fill="none" stroke="#ff1010" stroke-width="1.7" stroke-linejoin="round" opacity="1"/>
</g>
<rect x="305.4" y="353.5" width="198.2" height="72" rx="1.5" fill="none" stroke="#4e4e4e" stroke-width="1.1"/>
<text transform="translate(303.1,361.8) scale(0.905,1)" fill="#f01010" font-size="8.8" text-anchor="end" font-weight="normal"  stroke="#1c0606" stroke-width="1.1" paint-order="stroke" stroke-linejoin="round">1.065 V</text>
<text transform="translate(303.1,393.2) scale(0.905,1)" fill="#f01010" font-size="8.8" text-anchor="end" font-weight="normal"  stroke="#1c0606" stroke-width="1.1" paint-order="stroke" stroke-linejoin="round">265 mV</text>
<text transform="translate(303.1,423.9) scale(0.905,1)" fill="#f01010" font-size="8.8" text-anchor="end" font-weight="normal"  stroke="#1c0606" stroke-width="1.1" paint-order="stroke" stroke-linejoin="round">-535 mV</text>
<text transform="translate(306,435.1) scale(0.905,1)" fill="#f01010" font-size="8.8" text-anchor="start" font-weight="normal"  stroke="#1c0606" stroke-width="1.1" paint-order="stroke" stroke-linejoin="round">25.5 ms</text>
<text transform="translate(503.6,435.1) scale(0.905,1)" fill="#f01010" font-size="8.8" text-anchor="end" font-weight="normal"  stroke="#1c0606" stroke-width="1.1" paint-order="stroke" stroke-linejoin="round">775.5 ms</text>
<path d="M301.8,428.1 l3,-1.9 v3.8z" fill="#f01010"/>
<path d="M294.6,393 h10.6 v7.4 l-2.2,0 l-1.2,1.4 l-0.6,-1.4 h-6.6z" fill="#ff1010"/>
<text x="299.8" y="398.8" fill="#f4f4f4" font-size="5.2" text-anchor="middle" font-weight="normal" opacity="0.85">Z7</text>
<rect x="53.7" y="448.2" width="198.2" height="72" fill="#000"/>
<line x1="73.52" y1="448.2" x2="73.52" y2="520.2" stroke="#323232" stroke-width="0.8"/>
<line x1="93.34" y1="448.2" x2="93.34" y2="520.2" stroke="#323232" stroke-width="0.8"/>
<line x1="113.16" y1="448.2" x2="113.16" y2="520.2" stroke="#323232" stroke-width="0.8"/>
<line x1="132.98" y1="448.2" x2="132.98" y2="520.2" stroke="#323232" stroke-width="0.8"/>
<line x1="152.8" y1="448.2" x2="152.8" y2="520.2" stroke="#4c4c4c" stroke-width="0.8"/>
<line x1="172.62" y1="448.2" x2="172.62" y2="520.2" stroke="#323232" stroke-width="0.8"/>
<line x1="192.44" y1="448.2" x2="192.44" y2="520.2" stroke="#323232" stroke-width="0.8"/>
<line x1="212.26" y1="448.2" x2="212.26" y2="520.2" stroke="#323232" stroke-width="0.8"/>
<line x1="232.08" y1="448.2" x2="232.08" y2="520.2" stroke="#323232" stroke-width="0.8"/>
<line x1="53.7" y1="472" x2="251.9" y2="472" stroke="#3a3a3a" stroke-width="0.8"/>
<line x1="53.7" y1="489.96" x2="251.9" y2="489.96" stroke="#3a3a3a" stroke-width="0.8"/>
<g clip-path="url(#c03)">
<clipPath id="c03"><rect x="53.7" y="448.2" width="198.2" height="72"/></clipPath>
<rect x="74.8" y="452.3" width="63.3" height="16.1" fill="#ff8800"/>
<rect x="138.1" y="452.3" width="113.4" height="16.1" fill="#800080"/>
<path d="M54.5,452.9 H61 V467.8 H62.6 V452.9 H64.2 V467.8" fill="none" stroke="#900090" stroke-width="0.9"/>
<path d="M64.2,467.8 H65.6 V452.9 H67 V467.8 H68.3 V452.9 H69.5 V467.8 H70.6 V452.9 H71.6 V467.8 H72.5 V452.9 H73.3 V467.8 H74 V452.9 H74.8 V467.8" fill="none" stroke="#ff8800" stroke-width="0.9"/>
<rect x="69.5" y="452.3" width="5.3" height="16.1" fill="#ff8800" opacity="0.55"/>
<rect x="73" y="452.3" width="1.8" height="16.1" fill="#ffb468" opacity="0.7"/>
<rect x="55.6" y="456.75" width="16.8" height="7.2" fill="#000"/>
<rect x="241.6" y="457.75" width="7.2" height="5.2" fill="#000"/>
<rect x="74.8" y="476" width="63.3" height="16.2" fill="#ff8800"/>
<rect x="138.1" y="476" width="113.4" height="16.2" fill="#800080"/>
<path d="M54.5,491.6 H61.4 V476.6 H62.6 V491.6 H64.2 V476.6" fill="none" stroke="#900090" stroke-width="0.9"/>
<path d="M64.2,476.6 H65.6 V491.6 H67 V476.6 H68.3 V491.6 H69.5 V476.6 H70.6 V491.6 H71.6 V476.6 H72.5 V491.6 H73.3 V476.6 H74 V491.6 H74.8 V476.6" fill="none" stroke="#ff8800" stroke-width="0.9"/>
<rect x="69.5" y="476" width="5.3" height="16.2" fill="#ff8800" opacity="0.55"/>
<rect x="73" y="476" width="1.8" height="16.2" fill="#ffb468" opacity="0.7"/>
<rect x="55.6" y="480.5" width="16.8" height="7.2" fill="#000"/>
<rect x="241.6" y="481.5" width="7.2" height="5.2" fill="#000"/>
<rect x="74.8" y="499.7" width="63.3" height="16.2" fill="#ff8800"/>
<rect x="138.1" y="499.7" width="113.4" height="16.2" fill="#800080"/>
<path d="M54.5,515.3 H61.8 V500.3 H62.6 V515.3 H64.2 V500.3" fill="none" stroke="#900090" stroke-width="0.9"/>
<path d="M64.2,500.3 H65.6 V515.3 H67 V500.3 H68.3 V515.3 H69.5 V500.3 H70.6 V515.3 H71.6 V500.3 H72.5 V515.3 H73.3 V500.3 H74 V515.3 H74.8 V500.3" fill="none" stroke="#ff8800" stroke-width="0.9"/>
<rect x="69.5" y="499.7" width="5.3" height="16.2" fill="#ff8800" opacity="0.55"/>
<rect x="73" y="499.7" width="1.8" height="16.2" fill="#ffb468" opacity="0.7"/>
<rect x="55.6" y="504.2" width="16.8" height="7.2" fill="#000"/>
<rect x="241.6" y="505.2" width="7.2" height="5.2" fill="#000"/>
</g>
<rect x="53.7" y="448.2" width="198.2" height="72" rx="1.5" fill="none" stroke="#4e4e4e" stroke-width="1.1"/>
<text transform="translate(54.3,529.8) scale(0.905,1)" fill="#f000f0" font-size="8.8" text-anchor="start" font-weight="normal"  stroke="#1c0606" stroke-width="1.1" paint-order="stroke" stroke-linejoin="round">-80 ms</text>
<text transform="translate(152.8,529.8) scale(0.905,1)" fill="#f000f0" font-size="8.8" text-anchor="middle" font-weight="normal"  stroke="#1c0606" stroke-width="1.1" paint-order="stroke" stroke-linejoin="round">920 ms</text>
<text transform="translate(251.9,529.8) scale(0.905,1)" fill="#f000f0" font-size="8.8" text-anchor="end" font-weight="normal"  stroke="#1c0606" stroke-width="1.1" paint-order="stroke" stroke-linejoin="round">1.92 s</text>
<path d="M61.7,521 l2.2,4.4 h-4.4z" fill="#f000f0"/>
<rect x="305.4" y="448.2" width="198.2" height="72" fill="#000"/>
<line x1="325.22" y1="448.2" x2="325.22" y2="520.2" stroke="#323232" stroke-width="0.8"/>
<line x1="345.04" y1="448.2" x2="345.04" y2="520.2" stroke="#323232" stroke-width="0.8"/>
<line x1="364.86" y1="448.2" x2="364.86" y2="520.2" stroke="#323232" stroke-width="0.8"/>
<line x1="384.68" y1="448.2" x2="384.68" y2="520.2" stroke="#323232" stroke-width="0.8"/>
<line x1="404.5" y1="448.2" x2="404.5" y2="520.2" stroke="#4c4c4c" stroke-width="0.8"/>
<line x1="424.32" y1="448.2" x2="424.32" y2="520.2" stroke="#323232" stroke-width="0.8"/>
<line x1="444.14" y1="448.2" x2="444.14" y2="520.2" stroke="#323232" stroke-width="0.8"/>
<line x1="463.96" y1="448.2" x2="463.96" y2="520.2" stroke="#323232" stroke-width="0.8"/>
<line x1="483.78" y1="448.2" x2="483.78" y2="520.2" stroke="#323232" stroke-width="0.8"/>
<line x1="305.4" y1="472" x2="503.6" y2="472" stroke="#3a3a3a" stroke-width="0.8"/>
<line x1="305.4" y1="489.96" x2="503.6" y2="489.96" stroke="#3a3a3a" stroke-width="0.8"/>
<g clip-path="url(#c13)">
<clipPath id="c13"><rect x="305.4" y="448.2" width="198.2" height="72"/></clipPath>
<linearGradient id="dg" gradientUnits="userSpaceOnUse" x1="322" y1="0" x2="490" y2="0"><stop offset="0" stop-color="#3a1e00"/><stop offset="0.14" stop-color="#6e3a00"/><stop offset="0.45" stop-color="#804400"/><stop offset="0.8" stop-color="#a05600"/><stop offset="1" stop-color="#d87400"/></linearGradient>
<rect x="332.7" y="452.3" width="155.3" height="16.1" fill="url(#dg)"/>
<path d="M306,467.9 H306 V452.8 H310.2 V467.9 H313.6 V452.8 H318.6 V467.9 H321.9 V452.8 H326.3 V467.9 H328.7 V452.8 H330.9 V467.9 H332.7" fill="none" stroke="#ff8800" stroke-width="0.9"/>
<line x1="332.7" y1="452.3" x2="332.7" y2="468.4" stroke="#ff9210" stroke-width="0.32"/>
<line x1="333.45" y1="452.9" x2="333.45" y2="467.8" stroke="#000" stroke-width="0.5" opacity="0.6"/>
<line x1="334.2" y1="452.3" x2="334.2" y2="468.4" stroke="#ff9210" stroke-width="0.32"/>
<line x1="334.95" y1="452.9" x2="334.95" y2="467.8" stroke="#000" stroke-width="0.5" opacity="0.6"/>
<line x1="335.7" y1="452.3" x2="335.7" y2="468.4" stroke="#ff9210" stroke-width="0.33"/>
<line x1="336.45" y1="452.9" x2="336.45" y2="467.8" stroke="#000" stroke-width="0.5" opacity="0.6"/>
<line x1="337.2" y1="452.3" x2="337.2" y2="468.4" stroke="#ff9210" stroke-width="0.33"/>
<line x1="337.95" y1="452.9" x2="337.95" y2="467.8" stroke="#000" stroke-width="0.5" opacity="0.6"/>
<line x1="338.7" y1="452.3" x2="338.7" y2="468.4" stroke="#ff9210" stroke-width="0.33"/>
<line x1="339.45" y1="452.9" x2="339.45" y2="467.8" stroke="#000" stroke-width="0.5" opacity="0.6"/>
<line x1="340.2" y1="452.3" x2="340.2" y2="468.4" stroke="#ff9210" stroke-width="0.34"/>
<line x1="340.95" y1="452.9" x2="340.95" y2="467.8" stroke="#000" stroke-width="0.5" opacity="0.6"/>
<line x1="341.7" y1="452.3" x2="341.7" y2="468.4" stroke="#ff9210" stroke-width="0.34"/>
<line x1="342.45" y1="452.9" x2="342.45" y2="467.8" stroke="#000" stroke-width="0.5" opacity="0.6"/>
<line x1="343.2" y1="452.3" x2="343.2" y2="468.4" stroke="#ff9210" stroke-width="0.34"/>
<line x1="343.95" y1="452.9" x2="343.95" y2="467.8" stroke="#000" stroke-width="0.5" opacity="0.6"/>
<line x1="344.7" y1="452.3" x2="344.7" y2="468.4" stroke="#ff9210" stroke-width="0.35"/>
<line x1="345.45" y1="452.9" x2="345.45" y2="467.8" stroke="#000" stroke-width="0.5" opacity="0.6"/>
<line x1="346.2" y1="452.3" x2="346.2" y2="468.4" stroke="#ff9210" stroke-width="0.35"/>
<line x1="346.95" y1="452.9" x2="346.95" y2="467.8" stroke="#000" stroke-width="0.5" opacity="0.6"/>
<line x1="347.7" y1="452.3" x2="347.7" y2="468.4" stroke="#ff9210" stroke-width="0.35"/>
<line x1="348.45" y1="452.9" x2="348.45" y2="467.8" stroke="#000" stroke-width="0.5" opacity="0.6"/>
<line x1="349.2" y1="452.3" x2="349.2" y2="468.4" stroke="#ff9210" stroke-width="0.36"/>
<line x1="349.95" y1="452.9" x2="349.95" y2="467.8" stroke="#000" stroke-width="0.5" opacity="0.6"/>
<line x1="350.7" y1="452.3" x2="350.7" y2="468.4" stroke="#ff9210" stroke-width="0.36"/>
<line x1="351.45" y1="452.9" x2="351.45" y2="467.8" stroke="#000" stroke-width="0.5" opacity="0.6"/>
<line x1="352.2" y1="452.3" x2="352.2" y2="468.4" stroke="#ff9210" stroke-width="0.36"/>
<line x1="353.69" y1="452.3" x2="353.69" y2="468.4" stroke="#ff9210" stroke-width="0.37"/>
<line x1="355.35" y1="452.3" x2="355.35" y2="468.4" stroke="#ff9210" stroke-width="0.37"/>
<line x1="357.08" y1="452.3" x2="357.08" y2="468.4" stroke="#ff9210" stroke-width="0.37"/>
<line x1="358.47" y1="452.3" x2="358.47" y2="468.4" stroke="#ff9210" stroke-width="0.38"/>
<line x1="360.08" y1="452.3" x2="360.08" y2="468.4" stroke="#ff9210" stroke-width="0.38"/>
<line x1="361.4" y1="452.3" x2="361.4" y2="468.4" stroke="#ff9210" stroke-width="0.38"/>
<line x1="363" y1="452.3" x2="363" y2="468.4" stroke="#ff9210" stroke-width="0.39"/>
<line x1="364.65" y1="452.3" x2="364.65" y2="468.4" stroke="#ff9210" stroke-width="0.39"/>
<line x1="366.31" y1="452.3" x2="366.31" y2="468.4" stroke="#ff9210" stroke-width="0.4"/>
<line x1="367.76" y1="452.3" x2="367.76" y2="468.4" stroke="#ff9210" stroke-width="0.4"/>
<line x1="369.09" y1="452.3" x2="369.09" y2="468.4" stroke="#ff9210" stroke-width="0.4"/>
<line x1="370.7" y1="452.3" x2="370.7" y2="468.4" stroke="#ff9210" stroke-width="0.41"/>
<line x1="372.39" y1="452.3" x2="372.39" y2="468.4" stroke="#ff9210" stroke-width="0.41"/>
<line x1="374.14" y1="452.3" x2="374.14" y2="468.4" stroke="#ff9210" stroke-width="0.41"/>
<line x1="375.77" y1="452.3" x2="375.77" y2="468.4" stroke="#ff9210" stroke-width="0.42"/>
<line x1="377.18" y1="452.3" x2="377.18" y2="468.4" stroke="#ff9210" stroke-width="0.42"/>
<line x1="378.6" y1="452.3" x2="378.6" y2="468.4" stroke="#ff9210" stroke-width="0.42"/>
<line x1="380.07" y1="452.3" x2="380.07" y2="468.4" stroke="#ff9210" stroke-width="0.43"/>
<rect x="380.07" y="452.3" width="1.28" height="16.1" fill="#ff8c00" opacity="0.29"/>
<line x1="381.49" y1="452.3" x2="381.49" y2="468.4" stroke="#1a0c00" stroke-width="0.6" opacity="0.85"/>
<line x1="382.92" y1="452.3" x2="382.92" y2="468.4" stroke="#ff9210" stroke-width="0.43"/>
<rect x="382.92" y="452.3" width="1.52" height="16.1" fill="#ff8c00" opacity="0.3"/>
<line x1="384.61" y1="452.3" x2="384.61" y2="468.4" stroke="#1a0c00" stroke-width="0.6" opacity="0.85"/>
<line x1="386.3" y1="452.3" x2="386.3" y2="468.4" stroke="#ff9210" stroke-width="0.44"/>
<rect x="386.3" y="452.3" width="1.31" height="16.1" fill="#ff8c00" opacity="0.31"/>
<line x1="387.76" y1="452.3" x2="387.76" y2="468.4" stroke="#1a0c00" stroke-width="0.6" opacity="0.85"/>
<line x1="389.21" y1="452.3" x2="389.21" y2="468.4" stroke="#ff9210" stroke-width="0.45"/>
<rect x="389.21" y="452.3" width="1.45" height="16.1" fill="#ff8c00" opacity="0.32"/>
<line x1="390.82" y1="452.3" x2="390.82" y2="468.4" stroke="#1a0c00" stroke-width="0.6" opacity="0.85"/>
<line x1="392.44" y1="452.3" x2="392.44" y2="468.4" stroke="#ff9210" stroke-width="0.45"/>
<rect x="392.44" y="452.3" width="1.41" height="16.1" fill="#ff8c00" opacity="0.33"/>
<line x1="394.01" y1="452.3" x2="394.01" y2="468.4" stroke="#1a0c00" stroke-width="0.6" opacity="0.85"/>
<line x1="395.57" y1="452.3" x2="395.57" y2="468.4" stroke="#ff9210" stroke-width="0.46"/>
<rect x="395.57" y="452.3" width="1.49" height="16.1" fill="#ff8c00" opacity="0.34"/>
<line x1="397.23" y1="452.3" x2="397.23" y2="468.4" stroke="#1a0c00" stroke-width="0.6" opacity="0.85"/>
<line x1="398.88" y1="452.3" x2="398.88" y2="468.4" stroke="#ff9210" stroke-width="0.47"/>
<rect x="398.88" y="452.3" width="1.44" height="16.1" fill="#ff8c00" opacity="0.35"/>
<line x1="400.49" y1="452.3" x2="400.49" y2="468.4" stroke="#1a0c00" stroke-width="0.6" opacity="0.85"/>
<line x1="402.09" y1="452.3" x2="402.09" y2="468.4" stroke="#ff9210" stroke-width="0.48"/>
<rect x="402.09" y="452.3" width="1.62" height="16.1" fill="#ff8c00" opacity="0.37"/>
<line x1="403.89" y1="452.3" x2="403.89" y2="468.4" stroke="#1a0c00" stroke-width="0.6" opacity="0.85"/>
<line x1="405.68" y1="452.3" x2="405.68" y2="468.4" stroke="#ff9210" stroke-width="0.48"/>
<rect x="405.68" y="452.3" width="1.37" height="16.1" fill="#ff8c00" opacity="0.38"/>
<line x1="407.2" y1="452.3" x2="407.2" y2="468.4" stroke="#1a0c00" stroke-width="0.6" opacity="0.85"/>
<line x1="408.72" y1="452.3" x2="408.72" y2="468.4" stroke="#ff9210" stroke-width="0.49"/>
<rect x="408.72" y="452.3" width="1.45" height="16.1" fill="#ff8c00" opacity="0.39"/>
<line x1="410.33" y1="452.3" x2="410.33" y2="468.4" stroke="#1a0c00" stroke-width="0.6" opacity="0.85"/>
<line x1="411.94" y1="452.3" x2="411.94" y2="468.4" stroke="#ff9210" stroke-width="0.5"/>
<rect x="411.94" y="452.3" width="1.52" height="16.1" fill="#ff8c00" opacity="0.4"/>
<line x1="413.62" y1="452.3" x2="413.62" y2="468.4" stroke="#1a0c00" stroke-width="0.6" opacity="0.85"/>
<line x1="415.31" y1="452.3" x2="415.31" y2="468.4" stroke="#ff9210" stroke-width="0.51"/>
<rect x="415.31" y="452.3" width="1.49" height="16.1" fill="#ff8c00" opacity="0.41"/>
<line x1="416.96" y1="452.3" x2="416.96" y2="468.4" stroke="#1a0c00" stroke-width="0.6" opacity="0.85"/>
<line x1="418.61" y1="452.3" x2="418.61" y2="468.4" stroke="#ff9210" stroke-width="0.51"/>
<rect x="418.61" y="452.3" width="1.54" height="16.1" fill="#ff8c00" opacity="0.42"/>
<line x1="420.32" y1="452.3" x2="420.32" y2="468.4" stroke="#1a0c00" stroke-width="0.6" opacity="0.85"/>
<line x1="422.03" y1="452.3" x2="422.03" y2="468.4" stroke="#ff9210" stroke-width="0.52"/>
<rect x="422.03" y="452.3" width="1.76" height="16.1" fill="#ff8c00" opacity="0.44"/>
<line x1="423.99" y1="452.3" x2="423.99" y2="468.4" stroke="#1a0c00" stroke-width="0.6" opacity="0.85"/>
<line x1="425.95" y1="452.3" x2="425.95" y2="468.4" stroke="#ff9210" stroke-width="0.53"/>
<rect x="425.95" y="452.3" width="1.71" height="16.1" fill="#ff8c00" opacity="0.45"/>
<line x1="427.85" y1="452.3" x2="427.85" y2="468.4" stroke="#1a0c00" stroke-width="0.6" opacity="0.85"/>
<line x1="429.75" y1="452.3" x2="429.75" y2="468.4" stroke="#ff9210" stroke-width="0.54"/>
<rect x="429.75" y="452.3" width="1.49" height="16.1" fill="#ff8c00" opacity="0.46"/>
<line x1="431.41" y1="452.3" x2="431.41" y2="468.4" stroke="#1a0c00" stroke-width="0.6" opacity="0.85"/>
<line x1="433.06" y1="452.3" x2="433.06" y2="468.4" stroke="#ff9210" stroke-width="0.55"/>
<rect x="433.06" y="452.3" width="1.84" height="16.1" fill="#ff8c00" opacity="0.48"/>
<line x1="435.11" y1="452.3" x2="435.11" y2="468.4" stroke="#1a0c00" stroke-width="0.6" opacity="0.85"/>
<line x1="437.15" y1="452.3" x2="437.15" y2="468.4" stroke="#ff9210" stroke-width="0.56"/>
<rect x="437.15" y="452.3" width="1.82" height="16.1" fill="#ff8c00" opacity="0.49"/>
<line x1="439.17" y1="452.3" x2="439.17" y2="468.4" stroke="#1a0c00" stroke-width="0.6" opacity="0.85"/>
<line x1="441.19" y1="452.3" x2="441.19" y2="468.4" stroke="#ff9210" stroke-width="0.56"/>
<rect x="441.19" y="452.3" width="1.63" height="16.1" fill="#ff8c00" opacity="0.5"/>
<line x1="443.01" y1="452.3" x2="443.01" y2="468.4" stroke="#1a0c00" stroke-width="0.6" opacity="0.85"/>
<line x1="444.82" y1="452.3" x2="444.82" y2="468.4" stroke="#ff9210" stroke-width="0.57"/>
<rect x="444.82" y="452.3" width="1.67" height="16.1" fill="#ff8c00" opacity="0.52"/>
<line x1="446.68" y1="452.3" x2="446.68" y2="468.4" stroke="#1a0c00" stroke-width="0.6" opacity="0.85"/>
<line x1="448.53" y1="452.3" x2="448.53" y2="468.4" stroke="#ff9210" stroke-width="0.58"/>
<rect x="448.53" y="452.3" width="1.69" height="16.1" fill="#ff8c00" opacity="0.53"/>
<line x1="450.41" y1="452.3" x2="450.41" y2="468.4" stroke="#1a0c00" stroke-width="0.6" opacity="0.85"/>
<line x1="452.29" y1="452.3" x2="452.29" y2="468.4" stroke="#ff9210" stroke-width="0.59"/>
<rect x="452.29" y="452.3" width="1.64" height="16.1" fill="#ff8c00" opacity="0.54"/>
<line x1="454.11" y1="452.3" x2="454.11" y2="468.4" stroke="#1a0c00" stroke-width="0.6" opacity="0.85"/>
<line x1="455.93" y1="452.3" x2="455.93" y2="468.4" stroke="#ff9210" stroke-width="0.6"/>
<rect x="455.93" y="452.3" width="1.83" height="16.1" fill="#ff8c00" opacity="0.56"/>
<line x1="457.97" y1="452.3" x2="457.97" y2="468.4" stroke="#1a0c00" stroke-width="0.6" opacity="0.85"/>
<line x1="460" y1="452.3" x2="460" y2="468.4" stroke="#ff9210" stroke-width="0.61"/>
<rect x="460" y="452.3" width="1.97" height="16.1" fill="#ff8c00" opacity="0.57"/>
<line x1="462.19" y1="452.3" x2="462.19" y2="468.4" stroke="#1a0c00" stroke-width="0.6" opacity="0.85"/>
<line x1="464.38" y1="452.3" x2="464.38" y2="468.4" stroke="#ff9210" stroke-width="0.62"/>
<rect x="464.38" y="452.3" width="1.92" height="16.1" fill="#ff8c00" opacity="0.59"/>
<line x1="466.51" y1="452.3" x2="466.51" y2="468.4" stroke="#1a0c00" stroke-width="0.6" opacity="0.85"/>
<line x1="468.64" y1="452.3" x2="468.64" y2="468.4" stroke="#ff9210" stroke-width="0.63"/>
<rect x="468.64" y="452.3" width="1.79" height="16.1" fill="#ff8c00" opacity="0.6"/>
<line x1="470.63" y1="452.3" x2="470.63" y2="468.4" stroke="#1a0c00" stroke-width="0.6" opacity="0.85"/>
<line x1="472.62" y1="452.3" x2="472.62" y2="468.4" stroke="#ff9210" stroke-width="0.64"/>
<rect x="472.62" y="452.3" width="2.06" height="16.1" fill="#ff8c00" opacity="0.62"/>
<line x1="474.91" y1="452.3" x2="474.91" y2="468.4" stroke="#1a0c00" stroke-width="0.6" opacity="0.85"/>
<line x1="477.19" y1="452.3" x2="477.19" y2="468.4" stroke="#ff9210" stroke-width="0.65"/>
<rect x="477.19" y="452.3" width="1.82" height="16.1" fill="#ff8c00" opacity="0.63"/>
<line x1="479.21" y1="452.3" x2="479.21" y2="468.4" stroke="#1a0c00" stroke-width="0.6" opacity="0.85"/>
<line x1="481.23" y1="452.3" x2="481.23" y2="468.4" stroke="#ff9210" stroke-width="0.65"/>
<rect x="481.23" y="452.3" width="2.1" height="16.1" fill="#ff8c00" opacity="0.65"/>
<line x1="483.56" y1="452.3" x2="483.56" y2="468.4" stroke="#1a0c00" stroke-width="0.6" opacity="0.85"/>
<line x1="485.89" y1="452.3" x2="485.89" y2="468.4" stroke="#ff9210" stroke-width="0.67"/>
<rect x="485.89" y="452.3" width="1.91" height="16.1" fill="#ff8c00" opacity="0.66"/>
<line x1="488.01" y1="452.3" x2="488.01" y2="468.4" stroke="#1a0c00" stroke-width="0.6" opacity="0.85"/>
<rect x="488" y="452.3" width="15.2" height="16.1" fill="#ff8c00"/>
<rect x="493.31" y="457.75" width="7.4" height="5.2" fill="#000"/>
<line x1="332.7" y1="460.35" x2="488" y2="460.35" stroke="#c0a080" stroke-width="0.4" opacity="0.35"/>
<rect x="333.96" y="476" width="148.64" height="16.2" fill="url(#dg)"/>
<path d="M306,476.5 H307.26 V491.7 H311.46 V476.5 H314.86 V491.7 H319.86 V476.5 H323.16 V491.7 H327.56 V476.5 H329.96 V491.7 H332.16 V476.5 H333.96" fill="none" stroke="#ff8800" stroke-width="0.9"/>
<line x1="333.96" y1="476" x2="333.96" y2="492.2" stroke="#ff9210" stroke-width="0.32"/>
<line x1="334.71" y1="476.6" x2="334.71" y2="491.6" stroke="#000" stroke-width="0.5" opacity="0.6"/>
<line x1="335.46" y1="476" x2="335.46" y2="492.2" stroke="#ff9210" stroke-width="0.32"/>
<line x1="336.21" y1="476.6" x2="336.21" y2="491.6" stroke="#000" stroke-width="0.5" opacity="0.6"/>
<line x1="336.96" y1="476" x2="336.96" y2="492.2" stroke="#ff9210" stroke-width="0.33"/>
<line x1="337.71" y1="476.6" x2="337.71" y2="491.6" stroke="#000" stroke-width="0.5" opacity="0.6"/>
<line x1="338.46" y1="476" x2="338.46" y2="492.2" stroke="#ff9210" stroke-width="0.33"/>
<line x1="339.21" y1="476.6" x2="339.21" y2="491.6" stroke="#000" stroke-width="0.5" opacity="0.6"/>
<line x1="339.96" y1="476" x2="339.96" y2="492.2" stroke="#ff9210" stroke-width="0.33"/>
<line x1="340.71" y1="476.6" x2="340.71" y2="491.6" stroke="#000" stroke-width="0.5" opacity="0.6"/>
<line x1="341.46" y1="476" x2="341.46" y2="492.2" stroke="#ff9210" stroke-width="0.34"/>
<line x1="342.21" y1="476.6" x2="342.21" y2="491.6" stroke="#000" stroke-width="0.5" opacity="0.6"/>
<line x1="342.96" y1="476" x2="342.96" y2="492.2" stroke="#ff9210" stroke-width="0.34"/>
<line x1="343.71" y1="476.6" x2="343.71" y2="491.6" stroke="#000" stroke-width="0.5" opacity="0.6"/>
<line x1="344.46" y1="476" x2="344.46" y2="492.2" stroke="#ff9210" stroke-width="0.34"/>
<line x1="345.21" y1="476.6" x2="345.21" y2="491.6" stroke="#000" stroke-width="0.5" opacity="0.6"/>
<line x1="345.96" y1="476" x2="345.96" y2="492.2" stroke="#ff9210" stroke-width="0.35"/>
<line x1="346.71" y1="476.6" x2="346.71" y2="491.6" stroke="#000" stroke-width="0.5" opacity="0.6"/>
<line x1="347.46" y1="476" x2="347.46" y2="492.2" stroke="#ff9210" stroke-width="0.35"/>
<line x1="348.21" y1="476.6" x2="348.21" y2="491.6" stroke="#000" stroke-width="0.5" opacity="0.6"/>
<line x1="348.96" y1="476" x2="348.96" y2="492.2" stroke="#ff9210" stroke-width="0.36"/>
<line x1="349.71" y1="476.6" x2="349.71" y2="491.6" stroke="#000" stroke-width="0.5" opacity="0.6"/>
<line x1="350.46" y1="476" x2="350.46" y2="492.2" stroke="#ff9210" stroke-width="0.36"/>
<line x1="351.21" y1="476.6" x2="351.21" y2="491.6" stroke="#000" stroke-width="0.5" opacity="0.6"/>
<line x1="351.96" y1="476" x2="351.96" y2="492.2" stroke="#ff9210" stroke-width="0.36"/>
<line x1="353.38" y1="476" x2="353.38" y2="492.2" stroke="#ff9210" stroke-width="0.37"/>
<line x1="355.01" y1="476" x2="355.01" y2="492.2" stroke="#ff9210" stroke-width="0.37"/>
<line x1="356.5" y1="476" x2="356.5" y2="492.2" stroke="#ff9210" stroke-width="0.37"/>
<line x1="358.3" y1="476" x2="358.3" y2="492.2" stroke="#ff9210" stroke-width="0.38"/>
<line x1="360.08" y1="476" x2="360.08" y2="492.2" stroke="#ff9210" stroke-width="0.38"/>
<line x1="361.72" y1="476" x2="361.72" y2="492.2" stroke="#ff9210" stroke-width="0.39"/>
<line x1="363.05" y1="476" x2="363.05" y2="492.2" stroke="#ff9210" stroke-width="0.39"/>
<line x1="364.77" y1="476" x2="364.77" y2="492.2" stroke="#ff9210" stroke-width="0.39"/>
<line x1="366.5" y1="476" x2="366.5" y2="492.2" stroke="#ff9210" stroke-width="0.4"/>
<line x1="368.13" y1="476" x2="368.13" y2="492.2" stroke="#ff9210" stroke-width="0.4"/>
<line x1="369.57" y1="476" x2="369.57" y2="492.2" stroke="#ff9210" stroke-width="0.4"/>
<line x1="371.06" y1="476" x2="371.06" y2="492.2" stroke="#ff9210" stroke-width="0.41"/>
<line x1="372.67" y1="476" x2="372.67" y2="492.2" stroke="#ff9210" stroke-width="0.41"/>
<line x1="374.41" y1="476" x2="374.41" y2="492.2" stroke="#ff9210" stroke-width="0.42"/>
<line x1="376" y1="476" x2="376" y2="492.2" stroke="#ff9210" stroke-width="0.42"/>
<line x1="377.52" y1="476" x2="377.52" y2="492.2" stroke="#ff9210" stroke-width="0.42"/>
<line x1="379.13" y1="476" x2="379.13" y2="492.2" stroke="#ff9210" stroke-width="0.43"/>
<rect x="379.13" y="476" width="1.46" height="16.2" fill="#ff8c00" opacity="0.29"/>
<line x1="380.75" y1="476" x2="380.75" y2="492.2" stroke="#1a0c00" stroke-width="0.6" opacity="0.85"/>
<line x1="382.37" y1="476" x2="382.37" y2="492.2" stroke="#ff9210" stroke-width="0.43"/>
<rect x="382.37" y="476" width="1.22" height="16.2" fill="#ff8c00" opacity="0.3"/>
<line x1="383.72" y1="476" x2="383.72" y2="492.2" stroke="#1a0c00" stroke-width="0.6" opacity="0.85"/>
<line x1="385.07" y1="476" x2="385.07" y2="492.2" stroke="#ff9210" stroke-width="0.44"/>
<rect x="385.07" y="476" width="1.39" height="16.2" fill="#ff8c00" opacity="0.31"/>
<line x1="386.62" y1="476" x2="386.62" y2="492.2" stroke="#1a0c00" stroke-width="0.6" opacity="0.85"/>
<line x1="388.16" y1="476" x2="388.16" y2="492.2" stroke="#ff9210" stroke-width="0.45"/>
<rect x="388.16" y="476" width="1.43" height="16.2" fill="#ff8c00" opacity="0.32"/>
<line x1="389.75" y1="476" x2="389.75" y2="492.2" stroke="#1a0c00" stroke-width="0.6" opacity="0.85"/>
<line x1="391.34" y1="476" x2="391.34" y2="492.2" stroke="#ff9210" stroke-width="0.46"/>
<rect x="391.34" y="476" width="1.33" height="16.2" fill="#ff8c00" opacity="0.33"/>
<line x1="392.82" y1="476" x2="392.82" y2="492.2" stroke="#1a0c00" stroke-width="0.6" opacity="0.85"/>
<line x1="394.3" y1="476" x2="394.3" y2="492.2" stroke="#ff9210" stroke-width="0.46"/>
<rect x="394.3" y="476" width="1.5" height="16.2" fill="#ff8c00" opacity="0.34"/>
<line x1="395.96" y1="476" x2="395.96" y2="492.2" stroke="#1a0c00" stroke-width="0.6" opacity="0.85"/>
<line x1="397.63" y1="476" x2="397.63" y2="492.2" stroke="#ff9210" stroke-width="0.47"/>
<rect x="397.63" y="476" width="1.35" height="16.2" fill="#ff8c00" opacity="0.36"/>
<line x1="399.13" y1="476" x2="399.13" y2="492.2" stroke="#1a0c00" stroke-width="0.6" opacity="0.85"/>
<line x1="400.63" y1="476" x2="400.63" y2="492.2" stroke="#ff9210" stroke-width="0.48"/>
<rect x="400.63" y="476" width="1.38" height="16.2" fill="#ff8c00" opacity="0.37"/>
<line x1="402.17" y1="476" x2="402.17" y2="492.2" stroke="#1a0c00" stroke-width="0.6" opacity="0.85"/>
<line x1="403.71" y1="476" x2="403.71" y2="492.2" stroke="#ff9210" stroke-width="0.48"/>
<rect x="403.71" y="476" width="1.67" height="16.2" fill="#ff8c00" opacity="0.38"/>
<line x1="405.56" y1="476" x2="405.56" y2="492.2" stroke="#1a0c00" stroke-width="0.6" opacity="0.85"/>
<line x1="407.41" y1="476" x2="407.41" y2="492.2" stroke="#ff9210" stroke-width="0.49"/>
<rect x="407.41" y="476" width="1.41" height="16.2" fill="#ff8c00" opacity="0.39"/>
<line x1="408.98" y1="476" x2="408.98" y2="492.2" stroke="#1a0c00" stroke-width="0.6" opacity="0.85"/>
<line x1="410.54" y1="476" x2="410.54" y2="492.2" stroke="#ff9210" stroke-width="0.5"/>
<rect x="410.54" y="476" width="1.67" height="16.2" fill="#ff8c00" opacity="0.4"/>
<line x1="412.4" y1="476" x2="412.4" y2="492.2" stroke="#1a0c00" stroke-width="0.6" opacity="0.85"/>
<line x1="414.26" y1="476" x2="414.26" y2="492.2" stroke="#ff9210" stroke-width="0.51"/>
<rect x="414.26" y="476" width="1.69" height="16.2" fill="#ff8c00" opacity="0.42"/>
<line x1="416.14" y1="476" x2="416.14" y2="492.2" stroke="#1a0c00" stroke-width="0.6" opacity="0.85"/>
<line x1="418.02" y1="476" x2="418.02" y2="492.2" stroke="#ff9210" stroke-width="0.52"/>
<rect x="418.02" y="476" width="1.74" height="16.2" fill="#ff8c00" opacity="0.43"/>
<line x1="419.96" y1="476" x2="419.96" y2="492.2" stroke="#1a0c00" stroke-width="0.6" opacity="0.85"/>
<line x1="421.89" y1="476" x2="421.89" y2="492.2" stroke="#ff9210" stroke-width="0.53"/>
<rect x="421.89" y="476" width="1.44" height="16.2" fill="#ff8c00" opacity="0.45"/>
<line x1="423.48" y1="476" x2="423.48" y2="492.2" stroke="#1a0c00" stroke-width="0.6" opacity="0.85"/>
<line x1="425.08" y1="476" x2="425.08" y2="492.2" stroke="#ff9210" stroke-width="0.53"/>
<rect x="425.08" y="476" width="1.6" height="16.2" fill="#ff8c00" opacity="0.46"/>
<line x1="426.86" y1="476" x2="426.86" y2="492.2" stroke="#1a0c00" stroke-width="0.6" opacity="0.85"/>
<line x1="428.64" y1="476" x2="428.64" y2="492.2" stroke="#ff9210" stroke-width="0.54"/>
<rect x="428.64" y="476" width="1.71" height="16.2" fill="#ff8c00" opacity="0.47"/>
<line x1="430.55" y1="476" x2="430.55" y2="492.2" stroke="#1a0c00" stroke-width="0.6" opacity="0.85"/>
<line x1="432.45" y1="476" x2="432.45" y2="492.2" stroke="#ff9210" stroke-width="0.55"/>
<rect x="432.45" y="476" width="1.77" height="16.2" fill="#ff8c00" opacity="0.48"/>
<line x1="434.42" y1="476" x2="434.42" y2="492.2" stroke="#1a0c00" stroke-width="0.6" opacity="0.85"/>
<line x1="436.39" y1="476" x2="436.39" y2="492.2" stroke="#ff9210" stroke-width="0.56"/>
<rect x="436.39" y="476" width="1.57" height="16.2" fill="#ff8c00" opacity="0.5"/>
<line x1="438.14" y1="476" x2="438.14" y2="492.2" stroke="#1a0c00" stroke-width="0.6" opacity="0.85"/>
<line x1="439.89" y1="476" x2="439.89" y2="492.2" stroke="#ff9210" stroke-width="0.57"/>
<rect x="439.89" y="476" width="1.72" height="16.2" fill="#ff8c00" opacity="0.51"/>
<line x1="441.81" y1="476" x2="441.81" y2="492.2" stroke="#1a0c00" stroke-width="0.6" opacity="0.85"/>
<line x1="443.72" y1="476" x2="443.72" y2="492.2" stroke="#ff9210" stroke-width="0.58"/>
<rect x="443.72" y="476" width="1.86" height="16.2" fill="#ff8c00" opacity="0.53"/>
<line x1="445.79" y1="476" x2="445.79" y2="492.2" stroke="#1a0c00" stroke-width="0.6" opacity="0.85"/>
<line x1="447.85" y1="476" x2="447.85" y2="492.2" stroke="#ff9210" stroke-width="0.59"/>
<rect x="447.85" y="476" width="1.63" height="16.2" fill="#ff8c00" opacity="0.54"/>
<line x1="449.67" y1="476" x2="449.67" y2="492.2" stroke="#1a0c00" stroke-width="0.6" opacity="0.85"/>
<line x1="451.48" y1="476" x2="451.48" y2="492.2" stroke="#ff9210" stroke-width="0.6"/>
<rect x="451.48" y="476" width="1.95" height="16.2" fill="#ff8c00" opacity="0.55"/>
<line x1="453.65" y1="476" x2="453.65" y2="492.2" stroke="#1a0c00" stroke-width="0.6" opacity="0.85"/>
<line x1="455.82" y1="476" x2="455.82" y2="492.2" stroke="#ff9210" stroke-width="0.61"/>
<rect x="455.82" y="476" width="1.82" height="16.2" fill="#ff8c00" opacity="0.57"/>
<line x1="457.84" y1="476" x2="457.84" y2="492.2" stroke="#1a0c00" stroke-width="0.6" opacity="0.85"/>
<line x1="459.85" y1="476" x2="459.85" y2="492.2" stroke="#ff9210" stroke-width="0.62"/>
<rect x="459.85" y="476" width="1.85" height="16.2" fill="#ff8c00" opacity="0.59"/>
<line x1="461.91" y1="476" x2="461.91" y2="492.2" stroke="#1a0c00" stroke-width="0.6" opacity="0.85"/>
<line x1="463.96" y1="476" x2="463.96" y2="492.2" stroke="#ff9210" stroke-width="0.63"/>
<rect x="463.96" y="476" width="1.88" height="16.2" fill="#ff8c00" opacity="0.6"/>
<line x1="466.05" y1="476" x2="466.05" y2="492.2" stroke="#1a0c00" stroke-width="0.6" opacity="0.85"/>
<line x1="468.14" y1="476" x2="468.14" y2="492.2" stroke="#ff9210" stroke-width="0.64"/>
<rect x="468.14" y="476" width="1.88" height="16.2" fill="#ff8c00" opacity="0.62"/>
<line x1="470.23" y1="476" x2="470.23" y2="492.2" stroke="#1a0c00" stroke-width="0.6" opacity="0.85"/>
<line x1="472.31" y1="476" x2="472.31" y2="492.2" stroke="#ff9210" stroke-width="0.65"/>
<rect x="472.31" y="476" width="1.75" height="16.2" fill="#ff8c00" opacity="0.63"/>
<line x1="474.26" y1="476" x2="474.26" y2="492.2" stroke="#1a0c00" stroke-width="0.6" opacity="0.85"/>
<line x1="476.21" y1="476" x2="476.21" y2="492.2" stroke="#ff9210" stroke-width="0.65"/>
<rect x="476.21" y="476" width="1.82" height="16.2" fill="#ff8c00" opacity="0.65"/>
<line x1="478.23" y1="476" x2="478.23" y2="492.2" stroke="#1a0c00" stroke-width="0.6" opacity="0.85"/>
<line x1="480.25" y1="476" x2="480.25" y2="492.2" stroke="#ff9210" stroke-width="0.66"/>
<rect x="480.25" y="476" width="1.93" height="16.2" fill="#ff8c00" opacity="0.66"/>
<line x1="482.39" y1="476" x2="482.39" y2="492.2" stroke="#1a0c00" stroke-width="0.6" opacity="0.85"/>
<rect x="482.6" y="476" width="20.6" height="16.2" fill="#ff8c00"/>
<rect x="493.31" y="481.5" width="7.4" height="5.2" fill="#000"/>
<line x1="333.96" y1="484.1" x2="482.6" y2="484.1" stroke="#c0a080" stroke-width="0.4" opacity="0.35"/>
<rect x="335.22" y="499.7" width="149.38" height="16.2" fill="url(#dg)"/>
<path d="M306,515.4 H308.52 V500.2 H312.72 V515.4 H316.12 V500.2 H321.12 V515.4 H324.42 V500.2 H328.82 V515.4 H331.22 V500.2 H333.42 V515.4 H335.22" fill="none" stroke="#ff8800" stroke-width="0.9"/>
<line x1="335.22" y1="499.7" x2="335.22" y2="515.9" stroke="#ff9210" stroke-width="0.32"/>
<line x1="335.97" y1="500.3" x2="335.97" y2="515.3" stroke="#000" stroke-width="0.5" opacity="0.6"/>
<line x1="336.72" y1="499.7" x2="336.72" y2="515.9" stroke="#ff9210" stroke-width="0.32"/>
<line x1="337.47" y1="500.3" x2="337.47" y2="515.3" stroke="#000" stroke-width="0.5" opacity="0.6"/>
<line x1="338.22" y1="499.7" x2="338.22" y2="515.9" stroke="#ff9210" stroke-width="0.33"/>
<line x1="338.97" y1="500.3" x2="338.97" y2="515.3" stroke="#000" stroke-width="0.5" opacity="0.6"/>
<line x1="339.72" y1="499.7" x2="339.72" y2="515.9" stroke="#ff9210" stroke-width="0.33"/>
<line x1="340.47" y1="500.3" x2="340.47" y2="515.3" stroke="#000" stroke-width="0.5" opacity="0.6"/>
<line x1="341.22" y1="499.7" x2="341.22" y2="515.9" stroke="#ff9210" stroke-width="0.33"/>
<line x1="341.97" y1="500.3" x2="341.97" y2="515.3" stroke="#000" stroke-width="0.5" opacity="0.6"/>
<line x1="342.72" y1="499.7" x2="342.72" y2="515.9" stroke="#ff9210" stroke-width="0.34"/>
<line x1="343.47" y1="500.3" x2="343.47" y2="515.3" stroke="#000" stroke-width="0.5" opacity="0.6"/>
<line x1="344.22" y1="499.7" x2="344.22" y2="515.9" stroke="#ff9210" stroke-width="0.34"/>
<line x1="344.97" y1="500.3" x2="344.97" y2="515.3" stroke="#000" stroke-width="0.5" opacity="0.6"/>
<line x1="345.72" y1="499.7" x2="345.72" y2="515.9" stroke="#ff9210" stroke-width="0.34"/>
<line x1="346.47" y1="500.3" x2="346.47" y2="515.3" stroke="#000" stroke-width="0.5" opacity="0.6"/>
<line x1="347.22" y1="499.7" x2="347.22" y2="515.9" stroke="#ff9210" stroke-width="0.35"/>
<line x1="347.97" y1="500.3" x2="347.97" y2="515.3" stroke="#000" stroke-width="0.5" opacity="0.6"/>
<line x1="348.72" y1="499.7" x2="348.72" y2="515.9" stroke="#ff9210" stroke-width="0.35"/>
<line x1="349.47" y1="500.3" x2="349.47" y2="515.3" stroke="#000" stroke-width="0.5" opacity="0.6"/>
<line x1="350.22" y1="499.7" x2="350.22" y2="515.9" stroke="#ff9210" stroke-width="0.36"/>
<line x1="350.97" y1="500.3" x2="350.97" y2="515.3" stroke="#000" stroke-width="0.5" opacity="0.6"/>
<line x1="351.72" y1="499.7" x2="351.72" y2="515.9" stroke="#ff9210" stroke-width="0.36"/>
<line x1="352.47" y1="500.3" x2="352.47" y2="515.3" stroke="#000" stroke-width="0.5" opacity="0.6"/>
<line x1="353.22" y1="499.7" x2="353.22" y2="515.9" stroke="#ff9210" stroke-width="0.36"/>
<line x1="354.93" y1="499.7" x2="354.93" y2="515.9" stroke="#ff9210" stroke-width="0.37"/>
<line x1="356.57" y1="499.7" x2="356.57" y2="515.9" stroke="#ff9210" stroke-width="0.37"/>
<line x1="358.1" y1="499.7" x2="358.1" y2="515.9" stroke="#ff9210" stroke-width="0.37"/>
<line x1="359.64" y1="499.7" x2="359.64" y2="515.9" stroke="#ff9210" stroke-width="0.38"/>
<line x1="361.08" y1="499.7" x2="361.08" y2="515.9" stroke="#ff9210" stroke-width="0.38"/>
<line x1="362.52" y1="499.7" x2="362.52" y2="515.9" stroke="#ff9210" stroke-width="0.38"/>
<line x1="364.31" y1="499.7" x2="364.31" y2="515.9" stroke="#ff9210" stroke-width="0.39"/>
<line x1="365.64" y1="499.7" x2="365.64" y2="515.9" stroke="#ff9210" stroke-width="0.39"/>
<line x1="366.99" y1="499.7" x2="366.99" y2="515.9" stroke="#ff9210" stroke-width="0.39"/>
<line x1="368.52" y1="499.7" x2="368.52" y2="515.9" stroke="#ff9210" stroke-width="0.4"/>
<line x1="370.02" y1="499.7" x2="370.02" y2="515.9" stroke="#ff9210" stroke-width="0.4"/>
<line x1="371.44" y1="499.7" x2="371.44" y2="515.9" stroke="#ff9210" stroke-width="0.4"/>
<line x1="373.1" y1="499.7" x2="373.1" y2="515.9" stroke="#ff9210" stroke-width="0.41"/>
<line x1="374.57" y1="499.7" x2="374.57" y2="515.9" stroke="#ff9210" stroke-width="0.41"/>
<line x1="376" y1="499.7" x2="376" y2="515.9" stroke="#ff9210" stroke-width="0.42"/>
<line x1="377.78" y1="499.7" x2="377.78" y2="515.9" stroke="#ff9210" stroke-width="0.42"/>
<line x1="379.22" y1="499.7" x2="379.22" y2="515.9" stroke="#ff9210" stroke-width="0.42"/>
<line x1="380.78" y1="499.7" x2="380.78" y2="515.9" stroke="#ff9210" stroke-width="0.43"/>
<rect x="380.78" y="499.7" width="1.18" height="16.2" fill="#ff8c00" opacity="0.29"/>
<line x1="382.09" y1="499.7" x2="382.09" y2="515.9" stroke="#1a0c00" stroke-width="0.6" opacity="0.85"/>
<line x1="383.41" y1="499.7" x2="383.41" y2="515.9" stroke="#ff9210" stroke-width="0.43"/>
<rect x="383.41" y="499.7" width="1.35" height="16.2" fill="#ff8c00" opacity="0.3"/>
<line x1="384.9" y1="499.7" x2="384.9" y2="515.9" stroke="#1a0c00" stroke-width="0.6" opacity="0.85"/>
<line x1="386.4" y1="499.7" x2="386.4" y2="515.9" stroke="#ff9210" stroke-width="0.44"/>
<rect x="386.4" y="499.7" width="1.41" height="16.2" fill="#ff8c00" opacity="0.31"/>
<line x1="387.97" y1="499.7" x2="387.97" y2="515.9" stroke="#1a0c00" stroke-width="0.6" opacity="0.85"/>
<line x1="389.54" y1="499.7" x2="389.54" y2="515.9" stroke="#ff9210" stroke-width="0.45"/>
<rect x="389.54" y="499.7" width="1.48" height="16.2" fill="#ff8c00" opacity="0.32"/>
<line x1="391.19" y1="499.7" x2="391.19" y2="515.9" stroke="#1a0c00" stroke-width="0.6" opacity="0.85"/>
<line x1="392.83" y1="499.7" x2="392.83" y2="515.9" stroke="#ff9210" stroke-width="0.45"/>
<rect x="392.83" y="499.7" width="1.3" height="16.2" fill="#ff8c00" opacity="0.33"/>
<line x1="394.28" y1="499.7" x2="394.28" y2="515.9" stroke="#1a0c00" stroke-width="0.6" opacity="0.85"/>
<line x1="395.73" y1="499.7" x2="395.73" y2="515.9" stroke="#ff9210" stroke-width="0.46"/>
<rect x="395.73" y="499.7" width="1.47" height="16.2" fill="#ff8c00" opacity="0.34"/>
<line x1="397.37" y1="499.7" x2="397.37" y2="515.9" stroke="#1a0c00" stroke-width="0.6" opacity="0.85"/>
<line x1="399.01" y1="499.7" x2="399.01" y2="515.9" stroke="#ff9210" stroke-width="0.47"/>
<rect x="399.01" y="499.7" width="1.35" height="16.2" fill="#ff8c00" opacity="0.35"/>
<line x1="400.51" y1="499.7" x2="400.51" y2="515.9" stroke="#1a0c00" stroke-width="0.6" opacity="0.85"/>
<line x1="402.01" y1="499.7" x2="402.01" y2="515.9" stroke="#ff9210" stroke-width="0.48"/>
<rect x="402.01" y="499.7" width="1.62" height="16.2" fill="#ff8c00" opacity="0.37"/>
<line x1="403.81" y1="499.7" x2="403.81" y2="515.9" stroke="#1a0c00" stroke-width="0.6" opacity="0.85"/>
<line x1="405.62" y1="499.7" x2="405.62" y2="515.9" stroke="#ff9210" stroke-width="0.48"/>
<rect x="405.62" y="499.7" width="1.62" height="16.2" fill="#ff8c00" opacity="0.38"/>
<line x1="407.42" y1="499.7" x2="407.42" y2="515.9" stroke="#1a0c00" stroke-width="0.6" opacity="0.85"/>
<line x1="409.21" y1="499.7" x2="409.21" y2="515.9" stroke="#ff9210" stroke-width="0.49"/>
<rect x="409.21" y="499.7" width="1.61" height="16.2" fill="#ff8c00" opacity="0.39"/>
<line x1="411" y1="499.7" x2="411" y2="515.9" stroke="#1a0c00" stroke-width="0.6" opacity="0.85"/>
<line x1="412.78" y1="499.7" x2="412.78" y2="515.9" stroke="#ff9210" stroke-width="0.5"/>
<rect x="412.78" y="499.7" width="1.61" height="16.2" fill="#ff8c00" opacity="0.41"/>
<line x1="414.57" y1="499.7" x2="414.57" y2="515.9" stroke="#1a0c00" stroke-width="0.6" opacity="0.85"/>
<line x1="416.36" y1="499.7" x2="416.36" y2="515.9" stroke="#ff9210" stroke-width="0.51"/>
<rect x="416.36" y="499.7" width="1.43" height="16.2" fill="#ff8c00" opacity="0.42"/>
<line x1="417.95" y1="499.7" x2="417.95" y2="515.9" stroke="#1a0c00" stroke-width="0.6" opacity="0.85"/>
<line x1="419.53" y1="499.7" x2="419.53" y2="515.9" stroke="#ff9210" stroke-width="0.52"/>
<rect x="419.53" y="499.7" width="1.71" height="16.2" fill="#ff8c00" opacity="0.43"/>
<line x1="421.44" y1="499.7" x2="421.44" y2="515.9" stroke="#1a0c00" stroke-width="0.6" opacity="0.85"/>
<line x1="423.34" y1="499.7" x2="423.34" y2="515.9" stroke="#ff9210" stroke-width="0.53"/>
<rect x="423.34" y="499.7" width="1.73" height="16.2" fill="#ff8c00" opacity="0.44"/>
<line x1="425.27" y1="499.7" x2="425.27" y2="515.9" stroke="#1a0c00" stroke-width="0.6" opacity="0.85"/>
<line x1="427.19" y1="499.7" x2="427.19" y2="515.9" stroke="#ff9210" stroke-width="0.54"/>
<rect x="427.19" y="499.7" width="1.62" height="16.2" fill="#ff8c00" opacity="0.46"/>
<line x1="428.99" y1="499.7" x2="428.99" y2="515.9" stroke="#1a0c00" stroke-width="0.6" opacity="0.85"/>
<line x1="430.79" y1="499.7" x2="430.79" y2="515.9" stroke="#ff9210" stroke-width="0.54"/>
<rect x="430.79" y="499.7" width="1.72" height="16.2" fill="#ff8c00" opacity="0.47"/>
<line x1="432.71" y1="499.7" x2="432.71" y2="515.9" stroke="#1a0c00" stroke-width="0.6" opacity="0.85"/>
<line x1="434.62" y1="499.7" x2="434.62" y2="515.9" stroke="#ff9210" stroke-width="0.55"/>
<rect x="434.62" y="499.7" width="1.81" height="16.2" fill="#ff8c00" opacity="0.49"/>
<line x1="436.62" y1="499.7" x2="436.62" y2="515.9" stroke="#1a0c00" stroke-width="0.6" opacity="0.85"/>
<line x1="438.63" y1="499.7" x2="438.63" y2="515.9" stroke="#ff9210" stroke-width="0.56"/>
<rect x="438.63" y="499.7" width="1.7" height="16.2" fill="#ff8c00" opacity="0.5"/>
<line x1="440.51" y1="499.7" x2="440.51" y2="515.9" stroke="#1a0c00" stroke-width="0.6" opacity="0.85"/>
<line x1="442.4" y1="499.7" x2="442.4" y2="515.9" stroke="#ff9210" stroke-width="0.57"/>
<rect x="442.4" y="499.7" width="1.88" height="16.2" fill="#ff8c00" opacity="0.51"/>
<line x1="444.49" y1="499.7" x2="444.49" y2="515.9" stroke="#1a0c00" stroke-width="0.6" opacity="0.85"/>
<line x1="446.58" y1="499.7" x2="446.58" y2="515.9" stroke="#ff9210" stroke-width="0.58"/>
<rect x="446.58" y="499.7" width="1.6" height="16.2" fill="#ff8c00" opacity="0.53"/>
<line x1="448.36" y1="499.7" x2="448.36" y2="515.9" stroke="#1a0c00" stroke-width="0.6" opacity="0.85"/>
<line x1="450.13" y1="499.7" x2="450.13" y2="515.9" stroke="#ff9210" stroke-width="0.59"/>
<rect x="450.13" y="499.7" width="1.7" height="16.2" fill="#ff8c00" opacity="0.54"/>
<line x1="452.02" y1="499.7" x2="452.02" y2="515.9" stroke="#1a0c00" stroke-width="0.6" opacity="0.85"/>
<line x1="453.9" y1="499.7" x2="453.9" y2="515.9" stroke="#ff9210" stroke-width="0.6"/>
<rect x="453.9" y="499.7" width="1.64" height="16.2" fill="#ff8c00" opacity="0.56"/>
<line x1="455.73" y1="499.7" x2="455.73" y2="515.9" stroke="#1a0c00" stroke-width="0.6" opacity="0.85"/>
<line x1="457.56" y1="499.7" x2="457.56" y2="515.9" stroke="#ff9210" stroke-width="0.61"/>
<rect x="457.56" y="499.7" width="1.73" height="16.2" fill="#ff8c00" opacity="0.57"/>
<line x1="459.48" y1="499.7" x2="459.48" y2="515.9" stroke="#1a0c00" stroke-width="0.6" opacity="0.85"/>
<line x1="461.4" y1="499.7" x2="461.4" y2="515.9" stroke="#ff9210" stroke-width="0.62"/>
<rect x="461.4" y="499.7" width="1.77" height="16.2" fill="#ff8c00" opacity="0.58"/>
<line x1="463.37" y1="499.7" x2="463.37" y2="515.9" stroke="#1a0c00" stroke-width="0.6" opacity="0.85"/>
<line x1="465.34" y1="499.7" x2="465.34" y2="515.9" stroke="#ff9210" stroke-width="0.62"/>
<rect x="465.34" y="499.7" width="1.96" height="16.2" fill="#ff8c00" opacity="0.6"/>
<line x1="467.51" y1="499.7" x2="467.51" y2="515.9" stroke="#1a0c00" stroke-width="0.6" opacity="0.85"/>
<line x1="469.68" y1="499.7" x2="469.68" y2="515.9" stroke="#ff9210" stroke-width="0.64"/>
<rect x="469.68" y="499.7" width="1.98" height="16.2" fill="#ff8c00" opacity="0.62"/>
<line x1="471.88" y1="499.7" x2="471.88" y2="515.9" stroke="#1a0c00" stroke-width="0.6" opacity="0.85"/>
<line x1="474.07" y1="499.7" x2="474.07" y2="515.9" stroke="#ff9210" stroke-width="0.65"/>
<rect x="474.07" y="499.7" width="1.82" height="16.2" fill="#ff8c00" opacity="0.63"/>
<line x1="476.09" y1="499.7" x2="476.09" y2="515.9" stroke="#1a0c00" stroke-width="0.6" opacity="0.85"/>
<line x1="478.11" y1="499.7" x2="478.11" y2="515.9" stroke="#ff9210" stroke-width="0.65"/>
<rect x="478.11" y="499.7" width="1.88" height="16.2" fill="#ff8c00" opacity="0.65"/>
<line x1="480.2" y1="499.7" x2="480.2" y2="515.9" stroke="#1a0c00" stroke-width="0.6" opacity="0.85"/>
<line x1="482.3" y1="499.7" x2="482.3" y2="515.9" stroke="#ff9210" stroke-width="0.66"/>
<rect x="482.3" y="499.7" width="2.11" height="16.2" fill="#ff8c00" opacity="0.66"/>
<line x1="484.64" y1="499.7" x2="484.64" y2="515.9" stroke="#1a0c00" stroke-width="0.6" opacity="0.85"/>
<rect x="484.6" y="499.7" width="18.6" height="16.2" fill="#ff8c00"/>
<rect x="493.31" y="505.2" width="7.4" height="5.2" fill="#000"/>
<line x1="335.22" y1="507.8" x2="484.6" y2="507.8" stroke="#c0a080" stroke-width="0.4" opacity="0.35"/>
</g>
<rect x="305.4" y="448.2" width="198.2" height="72" rx="1.5" fill="none" stroke="#4e4e4e" stroke-width="1.1"/>
<text transform="translate(306,529.8) scale(0.905,1)" fill="#ff8c00" font-size="8.8" text-anchor="start" font-weight="normal"  stroke="#1c0606" stroke-width="1.1" paint-order="stroke" stroke-linejoin="round">25.5 ms</text>
<text transform="translate(503.6,529.8) scale(0.905,1)" fill="#ff8c00" font-size="8.8" text-anchor="end" font-weight="normal"  stroke="#1c0606" stroke-width="1.1" paint-order="stroke" stroke-linejoin="round">775.5 ms</text>
<path d="M301.8,522.8 l3,-1.9 v3.8z" fill="#ff8c00"/>
<text x="56.3" y="462.45" fill="#a010a0" font-size="5.9" text-anchor="start" font-weight="normal" >Hall U</text>
<text x="307.4" y="462.45" fill="#ffa030" font-size="5.9" text-anchor="start" font-weight="normal" >Hall U</text>
<text x="245.2" y="462.05" fill="#a040a0" font-size="4.6" text-anchor="middle" font-weight="normal" >D1</text>
<text x="497.1" y="462.05" fill="#ffa030" font-size="4.6" text-anchor="middle" font-weight="normal" >D1</text>
<text x="56.3" y="486.2" fill="#a010a0" font-size="5.9" text-anchor="start" font-weight="normal" >Hall V</text>
<text x="307.4" y="486.2" fill="#ffa030" font-size="5.9" text-anchor="start" font-weight="normal" >Hall V</text>
<text x="245.2" y="485.8" fill="#a040a0" font-size="4.6" text-anchor="middle" font-weight="normal" >D2</text>
<text x="497.1" y="485.8" fill="#ffa030" font-size="4.6" text-anchor="middle" font-weight="normal" >D2</text>
<text x="56.3" y="509.9" fill="#a010a0" font-size="5.9" text-anchor="start" font-weight="normal" >Hall W</text>
<text x="307.4" y="509.9" fill="#ffa030" font-size="5.9" text-anchor="start" font-weight="normal" >Hall W</text>
<text x="245.2" y="509.5" fill="#a040a0" font-size="4.6" text-anchor="middle" font-weight="normal" >D3</text>
<text x="497.1" y="509.5" fill="#ffa030" font-size="4.6" text-anchor="middle" font-weight="normal" >D3</text>
<path d="M762.1,131 l3,-1.8 v3.6z" fill="none" stroke="#e8e800" stroke-width="0.7"/>
<rect x="562.6" y="353.7" width="449.4" height="39.2" fill="#000"/>
<line x1="562.6" y1="373.3" x2="1012" y2="373.3" stroke="#555" stroke-width="0.8"/>
<line x1="787.3" y1="353.7" x2="787.3" y2="392.9" stroke="#555" stroke-width="0.8"/>
<line x1="562.6" y1="373.3" x2="1012" y2="373.3" stroke="#8a8a8a" stroke-width="1.8" stroke-dasharray="0.8 8.19" stroke-dashoffset="0.4"/>
<line x1="562.6" y1="373.3" x2="1012" y2="373.3" stroke="#8a8a8a" stroke-width="3" stroke-dasharray="0.8 44.14" stroke-dashoffset="0.4"/>
<line x1="787.3" y1="353.7" x2="787.3" y2="392.9" stroke="#8a8a8a" stroke-width="2.4" stroke-dasharray="0.8 4.1" stroke-dashoffset="0.4"/>
<line x1="562.6" y1="361.15" x2="1012" y2="361.15" stroke="#555" stroke-width="1" stroke-dasharray="1 7.99" stroke-dashoffset="0.5"/>
<line x1="562.6" y1="385.84" x2="1012" y2="385.84" stroke="#555" stroke-width="1" stroke-dasharray="1 7.99" stroke-dashoffset="0.5"/>
<clipPath id="w0"><rect x="562.6" y="353.7" width="449.4" height="39.2"/></clipPath>
<g clip-path="url(#w0)">
<polyline points="574.6,382.12 595.94,382.12 595.94,364.6 609.41,364.6 609.41,358.09 636.37,358.09 643.11,358.98 654.34,359.88 665.57,360.78 676.8,361.68 685.78,362.13 726.21,362.13 727.33,361.68 766.64,361.68 775.62,362.58 784.61,363.48 785.06,363.48 785,363.03 816.45,363.03 817.57,362.13 831.04,362.13 832.17,361.46 868.11,361.46 869.23,362.35 883.83,362.35 884.95,363.03 910.78,363.03 919.77,362.58 937.73,361.68 946.72,361.23 960.2,361.23 971.43,360.78 978.16,361.68 982.66,362.58 993.89,362.13 1000.62,360.33 1009.61,359.43" fill="none" stroke="#b03468" stroke-width="1.0" stroke-linejoin="round" opacity="1"/>
<polyline points="574.6,387.51 595.94,387.51 597.06,385.49 608.29,385.49 610.54,383.69 619.52,383.69 620.64,382.12 627.38,382.12 629.63,380.77 636.37,380.77 637.49,379.2 645.35,379.2 647.6,378.3 654.34,377.85 661.07,376.95 670.06,375.83 679.04,374.93 688.03,374.26 697.01,373.58 717.23,372.91 739.69,372.46 785.06,372.46 785,372.46 811.95,372.46 813.08,371.79 910.78,371.79 915.27,370.89 924.26,368.64 933.24,366.62 942.23,364.82 951.21,363.48 960.2,362.13 969.18,361.23 980.41,360.33 993.89,359.66 1009.61,358.98" fill="none" stroke="#b89400" stroke-width="1.0" stroke-linejoin="round" opacity="1"/>
</g>
<rect x="562.6" y="353.7" width="449.4" height="39.2" rx="1.5" fill="none" stroke="#4e4e4e" stroke-width="1.1"/>
<text transform="translate(559.6,362.1) scale(0.905,1)" fill="#ffcc00" font-size="8.8" text-anchor="end" font-weight="normal"  stroke="#1c0606" stroke-width="1.1" paint-order="stroke" stroke-linejoin="round">373 rpm</text>
<text transform="translate(562.9,402.1) scale(0.905,1)" fill="#ffcc00" font-size="8.8" text-anchor="start" font-weight="normal"  stroke="#1c0606" stroke-width="1.1" paint-order="stroke" stroke-linejoin="round">25.5 ms</text>
<text transform="translate(652.48,402.1) scale(0.905,1)" fill="#ffcc00" font-size="8.8" text-anchor="middle" font-weight="normal"  stroke="#1c0606" stroke-width="1.1" paint-order="stroke" stroke-linejoin="round">175.5 ms</text>
<text transform="translate(742.36,402.1) scale(0.905,1)" fill="#ffcc00" font-size="8.8" text-anchor="middle" font-weight="normal"  stroke="#1c0606" stroke-width="1.1" paint-order="stroke" stroke-linejoin="round">325.5 ms</text>
<text transform="translate(832.24,402.1) scale(0.905,1)" fill="#ffcc00" font-size="8.8" text-anchor="middle" font-weight="normal"  stroke="#1c0606" stroke-width="1.1" paint-order="stroke" stroke-linejoin="round">475.5 ms</text>
<text transform="translate(922.12,402.1) scale(0.905,1)" fill="#ffcc00" font-size="8.8" text-anchor="middle" font-weight="normal"  stroke="#1c0606" stroke-width="1.1" paint-order="stroke" stroke-linejoin="round">625.5 ms</text>
<text transform="translate(1011.8,402.1) scale(0.905,1)" fill="#ffcc00" font-size="8.8" text-anchor="end" font-weight="normal"  stroke="#1c0606" stroke-width="1.1" paint-order="stroke" stroke-linejoin="round">775.5 ms</text>
<path d="M559.2,396.7 l3,-1.9 v3.8z" fill="#ffcc00"/>
<rect x="562.6" y="415.7" width="449.4" height="42.2" fill="#000"/>
<line x1="562.6" y1="436.8" x2="1012" y2="436.8" stroke="#555" stroke-width="0.8"/>
<line x1="787.3" y1="415.7" x2="787.3" y2="457.9" stroke="#555" stroke-width="0.8"/>
<line x1="562.6" y1="436.8" x2="1012" y2="436.8" stroke="#8a8a8a" stroke-width="1.8" stroke-dasharray="0.8 8.19" stroke-dashoffset="0.4"/>
<line x1="562.6" y1="436.8" x2="1012" y2="436.8" stroke="#8a8a8a" stroke-width="3" stroke-dasharray="0.8 44.14" stroke-dashoffset="0.4"/>
<line x1="787.3" y1="415.7" x2="787.3" y2="457.9" stroke="#8a8a8a" stroke-width="2.4" stroke-dasharray="0.8 4.48" stroke-dashoffset="0.4"/>
<line x1="562.6" y1="423.72" x2="1012" y2="423.72" stroke="#555" stroke-width="1" stroke-dasharray="1 7.99" stroke-dashoffset="0.5"/>
<line x1="562.6" y1="450.3" x2="1012" y2="450.3" stroke="#555" stroke-width="1" stroke-dasharray="1 7.99" stroke-dashoffset="0.5"/>
<clipPath id="w1"><rect x="562.6" y="415.7" width="449.4" height="42.2"/></clipPath>
<g clip-path="url(#w1)">
<polyline points="574.6,452.43 595.94,452.43 597.06,451.76 608.29,451.76 609.86,450.63 627.38,450.63 629.63,449.73 654.34,449.73 656.58,449.29 683.54,449.29 685.78,448.84 703.75,448.84 717.23,448.61 785.06,448.39 785,449.06 906.29,449.51 910.78,449.06 919.77,448.61 933.24,447.94 942.23,447.26 964.69,446.81 987.15,446.37 1009.61,445.69" fill="none" stroke="#0a84c4" stroke-width="1.0" stroke-linejoin="round" opacity="1"/>
<polyline points="574.6,450.18 595.94,450.18 597.06,448.61 608.96,448.61 609.86,450.18 619.52,449.73 620.64,447.49 628.51,446.37 630.08,445.69 635.24,445.69 637.49,446.81 643.11,447.26 645.35,447.94 655.46,447.94 656.58,445.69 664.44,445.02 667.81,446.14 672.3,446.81 676.8,447.26 685.78,447.94 690.27,447.49 692.52,446.37 695.89,446.81 698.13,447.94 703.75,448.39 717.23,447.94 726.21,448.39 785.06,448.61 785,448.61 906.29,449.06 908.98,447.49 911.9,446.81 913.03,443 916.4,442.32 917.52,438.95 919.77,438.5 923.13,436.71 928.75,436.26 933.24,435.13 937.73,433.56 942.23,432.89 948.96,433.34 953.46,435.58 959.07,437.83 964.69,439.4 971.43,439.85 978.16,441.2 987.15,442.32 993.89,443.45 1000.62,443 1007.36,444.12 1009.61,445.69" fill="none" stroke="#c45400" stroke-width="1.0" stroke-linejoin="round" opacity="1"/>
<polyline points="574.6,447.26 595.94,447.26 597.06,445.69 609.41,445.69 610.54,447.49 618.85,447.49 620.2,444.12 628.51,443.45 630.75,442.77 636.37,443 637.49,444.57 643.11,445.02 645.35,445.69 655.46,445.24 656.58,443 665.57,442.55 667.81,443.45 676.8,444.12 677.92,445.69 690.27,445.69 691.4,444.12 695.89,444.12 697.46,445.69 703.75,446.14 704.87,447.49 717.23,447.04 718.35,445.69 725.09,446.14 727.33,448.39 729.58,447.94 730.7,446.81 743.06,446.81 745.3,448.39 747.55,447.49 748.67,446.37 750.92,446.81 753.16,448.39 758.78,448.39 759.9,446.81 784.61,447.26 785.06,447.49 785,447.49 791.74,447.49 798.48,447.94 807.46,447.04 823.18,447.49 829.92,446.81 838.91,447.94 842.28,446.81 847.89,447.94 851.26,446.81 854.63,447.94 874.84,447.26 883.83,447.94 890.57,447.26 906.29,447.49 908.54,445.69 911.9,445.24 913.03,440.08 916.4,439.4 917.52,436.26 919.77,435.81 922.01,434.01 926.5,433.56 928.75,432.66 933.24,432.21 937.73,429.97 942.23,429.29 948.96,429.52 952.33,431.09 955.7,433.34 960.2,435.13 964.69,436.26 971.43,437.16 975.92,438.28 978.16,440.08 987.15,440.75 996.13,441.2 998.38,439.4 1000.18,441.2 1009.61,441.65" fill="none" stroke="#689210" stroke-width="1.0" stroke-linejoin="round" opacity="1"/>
</g>
<rect x="562.6" y="415.7" width="449.4" height="42.2" rx="1.5" fill="none" stroke="#4e4e4e" stroke-width="1.1"/>
<text transform="translate(559.6,424.1) scale(0.905,1)" fill="#ff8c00" font-size="8.8" text-anchor="end" font-weight="normal"  stroke="#1c0606" stroke-width="1.1" paint-order="stroke" stroke-linejoin="round">140 W</text>
<text transform="translate(562.9,467.1) scale(0.905,1)" fill="#ff8c00" font-size="8.8" text-anchor="start" font-weight="normal"  stroke="#1c0606" stroke-width="1.1" paint-order="stroke" stroke-linejoin="round">25.5 ms</text>
<text transform="translate(652.48,467.1) scale(0.905,1)" fill="#ff8c00" font-size="8.8" text-anchor="middle" font-weight="normal"  stroke="#1c0606" stroke-width="1.1" paint-order="stroke" stroke-linejoin="round">175.5 ms</text>
<text transform="translate(742.36,467.1) scale(0.905,1)" fill="#ff8c00" font-size="8.8" text-anchor="middle" font-weight="normal"  stroke="#1c0606" stroke-width="1.1" paint-order="stroke" stroke-linejoin="round">325.5 ms</text>
<text transform="translate(832.24,467.1) scale(0.905,1)" fill="#ff8c00" font-size="8.8" text-anchor="middle" font-weight="normal"  stroke="#1c0606" stroke-width="1.1" paint-order="stroke" stroke-linejoin="round">475.5 ms</text>
<text transform="translate(922.12,467.1) scale(0.905,1)" fill="#ff8c00" font-size="8.8" text-anchor="middle" font-weight="normal"  stroke="#1c0606" stroke-width="1.1" paint-order="stroke" stroke-linejoin="round">625.5 ms</text>
<text transform="translate(1011.8,467.1) scale(0.905,1)" fill="#ff8c00" font-size="8.8" text-anchor="end" font-weight="normal"  stroke="#1c0606" stroke-width="1.1" paint-order="stroke" stroke-linejoin="round">775.5 ms</text>
<path d="M559.2,461.7 l3,-1.9 v3.8z" fill="#ff8c00"/>
<rect x="562.6" y="480.5" width="449.4" height="39.5" fill="#000"/>
<line x1="562.6" y1="500.25" x2="1012" y2="500.25" stroke="#555" stroke-width="0.8"/>
<line x1="787.3" y1="480.5" x2="787.3" y2="520" stroke="#555" stroke-width="0.8"/>
<line x1="562.6" y1="500.25" x2="1012" y2="500.25" stroke="#8a8a8a" stroke-width="1.8" stroke-dasharray="0.8 8.19" stroke-dashoffset="0.4"/>
<line x1="562.6" y1="500.25" x2="1012" y2="500.25" stroke="#8a8a8a" stroke-width="3" stroke-dasharray="0.8 44.14" stroke-dashoffset="0.4"/>
<line x1="787.3" y1="480.5" x2="787.3" y2="520" stroke="#8a8a8a" stroke-width="2.4" stroke-dasharray="0.8 4.14" stroke-dashoffset="0.4"/>
<line x1="562.6" y1="488" x2="1012" y2="488" stroke="#555" stroke-width="1" stroke-dasharray="1 7.99" stroke-dashoffset="0.5"/>
<line x1="562.6" y1="512.89" x2="1012" y2="512.89" stroke="#555" stroke-width="1" stroke-dasharray="1 7.99" stroke-dashoffset="0.5"/>
<clipPath id="w2"><rect x="562.6" y="480.5" width="449.4" height="39.5"/></clipPath>
<g clip-path="url(#w2)">
<polyline points="597.06,518.23 608.96,518.23 609.86,509.24 619.52,509.24 620.64,515.31 627.38,515.76 630.08,514.18 635.24,514.18 636.82,510.81 642.66,510.81 643.55,508.12 655.46,508.12 656.58,511.94 665.57,511.49 667.81,509.69 672.3,508.57 676.8,506.32 681.29,504.08 690.27,503.4 691.4,506.32 695.89,505.87 697.46,504.08 700.38,502.95 703.75,498.46 704.87,495.77 708.69,495.77 710.04,498.01 716.1,498.01 717.23,500.26 722.84,499.58 725.76,498.46 726.21,489.93 729.58,489.93 730.7,496.21 739.69,496.21 743.06,495.09 743.73,490.6 746.43,490.6 747.55,495.09 750.92,494.42 752.04,491.27 758.78,490.82 759.9,493.97 766.64,493.52 771.13,492.17 778.99,492.85 783.49,493.52 784.61,491.27 785.06,491.27 785,491.27 788.37,492.85 793.98,492.85 796.23,491.27 799.6,491.27 802.97,492.85 811.95,492.85 813.08,490.6 823.18,490.6 824.98,487.68 828.8,487.68 829.92,491.72 832.17,491.72 833.29,489.93 843.4,489.48 844.52,488.35 847.89,488.35 849.01,490.6 852.38,490.6 853.51,487.23 856.88,487.23 858,489.03 870.35,489.48 874.84,490.6 883.83,490.6 886.07,491.72 892.81,491.27 899.55,490.6 900.67,488.35 907.41,487.9 908.54,502.95 911.9,503.4 912.58,510.14 916.4,510.81 917.52,513.73 922.01,514.63 928.75,513.73 937.73,514.63 946.72,513.73 955.7,510.81 964.69,507.45 973.67,505.2 978.16,502.5 987.15,500.26 993.89,498.01 997.26,498.46 999.5,500.71 1000.62,496.66 1005.12,495.77 1009.61,494.42" fill="none" stroke="#d40000" stroke-width="1.0" stroke-linejoin="round" opacity="1"/>
<polyline points="574.6,501.83 595.94,501.83 596.39,496.66 608.29,496.66 609.41,495.77 618.85,495.77 620.2,492.85 628.51,492.4 630.08,491.27 648.72,491.05 656.58,489.48 665.57,488.8 690.27,488.8 694.77,488.35 701.5,488.58 706,489.48 712.73,488.8 726.21,489.03 735.2,489.03 739.69,489.93 753.16,489.93 762.15,489.48 775.62,489.93 784.61,490.82 785.06,490.82 785,490.82 807.46,490.82 823.18,490.6 841.15,489.93 874.84,490.38 906.29,490.38 910.78,487.23 917.52,485.43 928.75,484.98 942.23,483.41 962.44,483.19 964.69,482.74 966.93,483.41 1005.12,483.41 1009.61,484.31" fill="none" stroke="#1464c8" stroke-width="1.0" stroke-linejoin="round" opacity="1"/>
</g>
<rect x="562.6" y="480.5" width="449.4" height="39.5" rx="1.5" fill="none" stroke="#4e4e4e" stroke-width="1.1"/>
<text transform="translate(559.6,488.9) scale(0.905,1)" fill="#2088ff" font-size="8.8" text-anchor="end" font-weight="normal"  stroke="#1c0606" stroke-width="1.1" paint-order="stroke" stroke-linejoin="round">900e-3</text>
<text transform="translate(562.9,529.2) scale(0.905,1)" fill="#2088ff" font-size="8.8" text-anchor="start" font-weight="normal"  stroke="#1c0606" stroke-width="1.1" paint-order="stroke" stroke-linejoin="round">25.5 ms</text>
<text transform="translate(652.48,529.2) scale(0.905,1)" fill="#2088ff" font-size="8.8" text-anchor="middle" font-weight="normal"  stroke="#1c0606" stroke-width="1.1" paint-order="stroke" stroke-linejoin="round">175.5 ms</text>
<text transform="translate(742.36,529.2) scale(0.905,1)" fill="#2088ff" font-size="8.8" text-anchor="middle" font-weight="normal"  stroke="#1c0606" stroke-width="1.1" paint-order="stroke" stroke-linejoin="round">325.5 ms</text>
<text transform="translate(832.24,529.2) scale(0.905,1)" fill="#2088ff" font-size="8.8" text-anchor="middle" font-weight="normal"  stroke="#1c0606" stroke-width="1.1" paint-order="stroke" stroke-linejoin="round">475.5 ms</text>
<text transform="translate(922.12,529.2) scale(0.905,1)" fill="#2088ff" font-size="8.8" text-anchor="middle" font-weight="normal"  stroke="#1c0606" stroke-width="1.1" paint-order="stroke" stroke-linejoin="round">625.5 ms</text>
<text transform="translate(1011.8,529.2) scale(0.905,1)" fill="#2088ff" font-size="8.8" text-anchor="end" font-weight="normal"  stroke="#1c0606" stroke-width="1.1" paint-order="stroke" stroke-linejoin="round">775.5 ms</text>
<path d="M559.2,523.8 l3,-1.9 v3.8z" fill="#2088ff"/>
<text transform="translate(559.4,390.5) scale(0.905,1)" fill="#c8a000" font-size="8.8" text-anchor="end" font-weight="normal"  stroke="#1c0606" stroke-width="1.1" paint-order="stroke" stroke-linejoin="round">-27 rpm</text>
<rect x="518.8" y="383.3" width="43.6" height="6.6" rx="1.2" fill="#ffcc00"/>
<text x="540.6" y="388.5" fill="#4a2a00" font-size="5.6" text-anchor="middle" font-weight="normal" stroke="#4a2a00" stroke-width="0.15">Speed1(Mecha</text>
<path d="M556,394.2 l3.4,-0.8 l-1.5,3z" fill="#ff5c9c"/>
<text transform="translate(559.4,456.6) scale(0.905,1)" fill="#ff8c00" font-size="8.8" text-anchor="end" font-weight="normal"  stroke="#1c0606" stroke-width="1.1" paint-order="stroke" stroke-linejoin="round">-20 W</text>
<rect x="541.2" y="444.8" width="21.2" height="7" rx="1.2" fill="#ff8c00"/>
<text x="551.8" y="450.4" fill="#4a1a00" font-size="5.6" text-anchor="middle" font-weight="normal" stroke="#4a1a00" stroke-width="0.15">P(Σrst</text>
<rect x="529.4" y="512.8" width="33" height="7.2" rx="1.2" fill="#2088ff"/>
<text x="546" y="518.5" fill="#062050" font-size="5.6" text-anchor="middle" font-weight="normal" stroke="#062050" stroke-width="0.15">Ƞtotal(Σrst</text>
<path d="M555.6,522.4 l3.4,-0.8 l-1.5,3z" fill="#2088ff"/>
</svg>
<div class="d" style="left:5px;top:234px;width:65.4px"><div class="h" style="background:#00ffff;color:#006a6a">C3<span class="r"><span class="bd" style="color:#00cccc">F</span><span class="bd" style="color:#00cccc">B</span><span class="bd" style="color:#00cccc">D1</span></span></div><div class="b">8.4 V/div<br>0.0 mV offset</div></div>
<div class="d" style="left:71.3px;top:234px;width:65.4px"><div class="h" style="background:#8c8cff;color:#2a2a80">C6<span class="r"><span class="bd" style="color:#7070cc">F</span><span class="bd" style="color:#7070cc">B</span><span class="bd" style="color:#7070cc">D1</span></span></div><div class="b">10.0 A/div<br>0.0 mA offset</div></div>
<div class="d" style="left:137.6px;top:234px;width:65.4px"><div class="h" style="background:#00ffff;color:#006a6a">Z3<span class="r">zoom(C3)</span></div><div class="b">1.00 V/div<br>75 ms/div</div><div class="z"></div></div>
<div class="d" style="left:203.9px;top:234px;width:65.4px"><div class="h" style="background:#8c8cff;color:#2a2a80">Z6<span class="r">zoom(C6)</span></div><div class="b">5.00 A/div<br>75 ms/div</div><div class="z"></div></div>
<div class="abs" style="left:270.2px;top:234px;width:65px;height:33.4px;border:0.9px dashed #a8a8a8;border-radius:1.5px;color:#fff;font-size:11px;text-align:center;line-height:31px">+</div>
<div class="d" style="left:513.5px;top:234px;width:46.6px"><div class="h" style="background:#ffff00;color:#6a6a00">C1<span class="r"><span class="bd" style="color:#cccc00">B</span><span class="bd" style="color:#cccc00">D1</span></span></div><div class="b">8.0 V<br>0 mV</div></div>
<div class="d" style="left:561.1px;top:234px;width:46.6px"><div class="h" style="background:#ff6ac8;color:#7a1a5a">C2<span class="r"><span class="bd" style="color:#cc54a0">B</span><span class="bd" style="color:#cc54a0">D1</span></span></div><div class="b">8.0 V<br>0 mV</div></div>
<div class="d" style="left:608.7px;top:234px;width:46.6px"><div class="h" style="background:#00cc00;color:#005a00">C4<span class="r"><span class="bd" style="color:#00a300">B</span><span class="bd" style="color:#00a300">D1</span></span></div><div class="b">10.0 A<br>0 mA</div></div>
<div class="d" style="left:656.3px;top:234px;width:46.6px"><div class="h" style="background:#dcffdc;color:#4a5a4a">C5<span class="r"><span class="bd" style="color:#b0ccb0">B</span><span class="bd" style="color:#b0ccb0">D1</span></span></div><div class="b">10.0 A<br>0 mA</div></div>
<div class="d" style="left:703.9px;top:234px;width:46.6px"><div class="h" style="background:#ffff00;color:#6a6a00">Z1&nbsp; zoom...</div><div class="b">8.0 V<br>75 ms</div><div class="z"></div></div>
<div class="d" style="left:751.5px;top:234px;width:46.6px"><div class="h" style="background:#ff6ac8;color:#7a1a5a">Z2&nbsp; zoom...</div><div class="b">8.0 V<br>75 ms</div><div class="z"></div></div>
<div class="d" style="left:800px;top:234px;width:64.2px"><div class="h" style="background:#00cc00;color:#005a00">Z4<span class="r">zoom(C4)</span></div><div class="b">10.0 A/div<br>75 ms/div</div><div class="z"></div></div>
<div class="d" style="left:865.8px;top:234px;width:46.6px"><div class="h" style="background:#dcffdc;color:#4a5a4a">Z5&nbsp; zoom...</div><div class="b">10.0 A<br>75 ms</div><div class="z"></div></div>
<div class="d" style="left:5px;top:484.8px;width:65.4px"><div class="h" style="background:#ff0000;color:#7a0000">C7<span class="r"><span class="bd" style="color:#cc0000">F</span><span class="bd" style="color:#cc0000">B</span><span class="bd" style="color:#cc0000">D1</span></span></div><div class="b">200 mV/div<br>-265.000 mV</div></div>
<div class="d" style="left:71.3px;top:484.8px;width:65.4px"><div class="h" style="background:#ff00ff;color:#7a007a">Digital1<span class="r"><span class="bd" style="color:#cc00cc">[3]</span></span></div><div class="b">12.5 MS/s<br>25.0 MS</div></div>
<div class="d" style="left:137.6px;top:484.8px;width:65.4px"><div class="h" style="background:#ff0000;color:#7a0000">Z7<span class="r">zoom(C7)</span></div><div class="b">200 mV/div<br>75 ms/div</div><div class="z"></div></div>
<div class="d" style="left:203.9px;top:484.8px;width:65.4px"><div class="h" style="background:#ff8c00;color:#5a2a00">Z8 zoom(Dig<span class="r"><span class="bd" style="color:#cc7000">[3]</span></span></div><div class="b">12.5 MS/s<br>9.38 MS</div><div class="z"></div></div>
<div class="d" style="left:513.6px;top:484.8px;width:65.2px"><div class="h" style="background:#ffcc00;color:#5a3a00">Speed1(Mech ...</div><div class="b">50.0 rpm/div<br>75 ms/div</div></div>
<div class="d" style="left:579.75px;top:484.8px;width:65.2px"><div class="h" style="background:#ff5c8c;color:#6a1030">Torque(Mech ...</div><div class="b">100 mN·m/div<br>75 ms/div</div></div>
<div class="d" style="left:645.9px;top:484.8px;width:65.2px"><div class="h" style="background:#00ccff;color:#004a7a">P(Mechanical)</div><div class="b">20.0 W/div<br>75 ms/div</div></div>
<div class="d" style="left:712.05px;top:484.8px;width:65.2px"><div class="h" style="background:#99cc22;color:#3a5a00">P(Bus)</div><div class="b">20.0 W/div<br>75 ms/div</div></div>
<div class="d" style="left:778.2px;top:484.8px;width:65.2px"><div class="h" style="background:#ff8800;color:#6a3000">P(Σrst)</div><div class="b">20.0 W/div<br>75 ms/div</div></div>
<div class="d" style="left:844.35px;top:484.8px;width:65.2px"><div class="h" style="background:#f01010;color:#8a0000">Ƞtotal(Mecha ...</div><div class="b">100e-3/div<br>75 ms/div</div></div>
<div class="d" style="left:910.5px;top:484.8px;width:65.2px"><div class="h" style="background:#1e8cff;color:#0a3f86">Ƞtotal(Σrst)</div><div class="b" style="background:#2c4c70">100e-3/div<br>75 ms/div</div><div class="abs" style="left:-1px;top:-0.6px;right:-1px;height:34.2px;border:1.3px solid #1e90ff;border-radius:1.5px"></div></div>
<div class="abs" style="left:0;top:519px;width:1017px;height:44px;background:#000"></div>
<table><tr class="hd"><td class=l>Numerics</td><td>Vrms</td><td>Irms</td><td>P</td><td>S</td><td>Q</td><td>PF</td><td>ϕ</td><td>Torque</td><td>Speed1</td><td>Ƞstage</td><td>Ƞtotal</td><td></td></tr>
<tr><td class="l">Bus</td><td>19.9337 V</td><td>3.5214 A</td><td class="hl">35.700 W</td><td>70.087 VA</td><td>-6.413 VAR</td><td>494e-3</td><td>-4.4201 °</td><td></td><td></td><td></td><td></td><td></td></tr>
<tr><td class="l">Σrst</td><td>7.230 V</td><td>4.832 A</td><td class="hl">27.82 W</td><td>61.865 VA</td><td>55.06 VAR</td><td>430e-3</td><td>64.4912 °</td><td></td><td></td><td>748e-3</td><td class="hl">748e-3</td><td></td></tr>
<tr><td class="l">Mechanical</td><td></td><td></td><td class="hl">15.3976 W</td><td></td><td></td><td></td><td></td><td class="hl">722.12 mN·m</td><td class="hl">202.88375 rpm</td><td>688.0e-3</td><td class="hl">507.05e-3</td><td></td></tr>
</table>
<div class="abs" style="left:876px;top:529.4px;width:73.8px;height:32.4px;background:#444"></div>
<div class="abs" style="left:876px;top:529.4px;width:73.8px;height:10px;background:#fff"></div>
<div class="abs" style="left:952.2px;top:529.4px;width:64.4px;height:32.4px;background:#444"></div>
<div class="abs" style="left:952.2px;top:529.4px;width:64.4px;height:10px;background:#fff"></div>
<div class="tb" style="left:877.4px;top:529.3px;color:#333">Tbase</div>
<div class="tb" style="left:909.2px;width:40px;text-align:right;top:529.3px;color:#333">-920 ms</div>
<div class="tb" style="left:889.2px;width:60px;text-align:right;top:540.6px;color:#f0f0f0">200 ms/div</div>
<div class="tb" style="left:877.4px;top:551.2px;color:#f0f0f0">25 MS</div>
<div class="tb" style="left:889.2px;width:60px;text-align:right;top:551.2px;color:#f0f0f0">12.5 MS/s</div>
<div class="tb" style="left:953.4px;top:529.3px;color:#333">Trigger</div>
<div class="abs" style="left:986.4px;top:530.2px;width:12.6px;height:8.6px;background:#000;border-radius:1.2px;color:#fff;font-size:7.6px;line-height:8.6px;text-align:center;letter-spacing:-0.3px">C1</div>
<div class="abs" style="left:1000.4px;top:530.2px;width:15.2px;height:8.6px;background:#000;border-radius:1.2px;color:#fff;font-size:7.6px;line-height:8.6px;text-align:center;letter-spacing:-0.3px">DC</div>
<div class="tb" style="left:953.4px;top:540.6px;color:#f0f0f0">Stop</div>
<div class="tb" style="left:975.8px;width:40px;text-align:right;top:540.6px;color:#f0f0f0">7.7 V</div>
<div class="tb" style="left:953.4px;top:551.2px;color:#f0f0f0">Edge</div>
<div class="tb" style="left:975.8px;width:40px;text-align:right;top:551.2px;color:#f0f0f0">Positive</div>
<div class="abs" style="left:0;top:562.6px;width:1017px;height:9px;background:#2a2a2a"></div>
<div class="abs" style="left:3px;top:563.2px;font-size:6.4px;line-height:8px;color:#fff;letter-spacing:-0.1px;white-space:nowrap"><b>TELEDYNE</b> <span style="color:#ccc;letter-spacing:-0.25px">LECROY</span></div>
<div class="abs" style="left:900px;width:109.4px;text-align:right;top:563.4px;font-size:7.4px;line-height:8px;color:#e8e8e8;letter-spacing:-0.2px;white-space:nowrap">7/29/2019 2:44:51 PM</div>
</div>
</body></html>
